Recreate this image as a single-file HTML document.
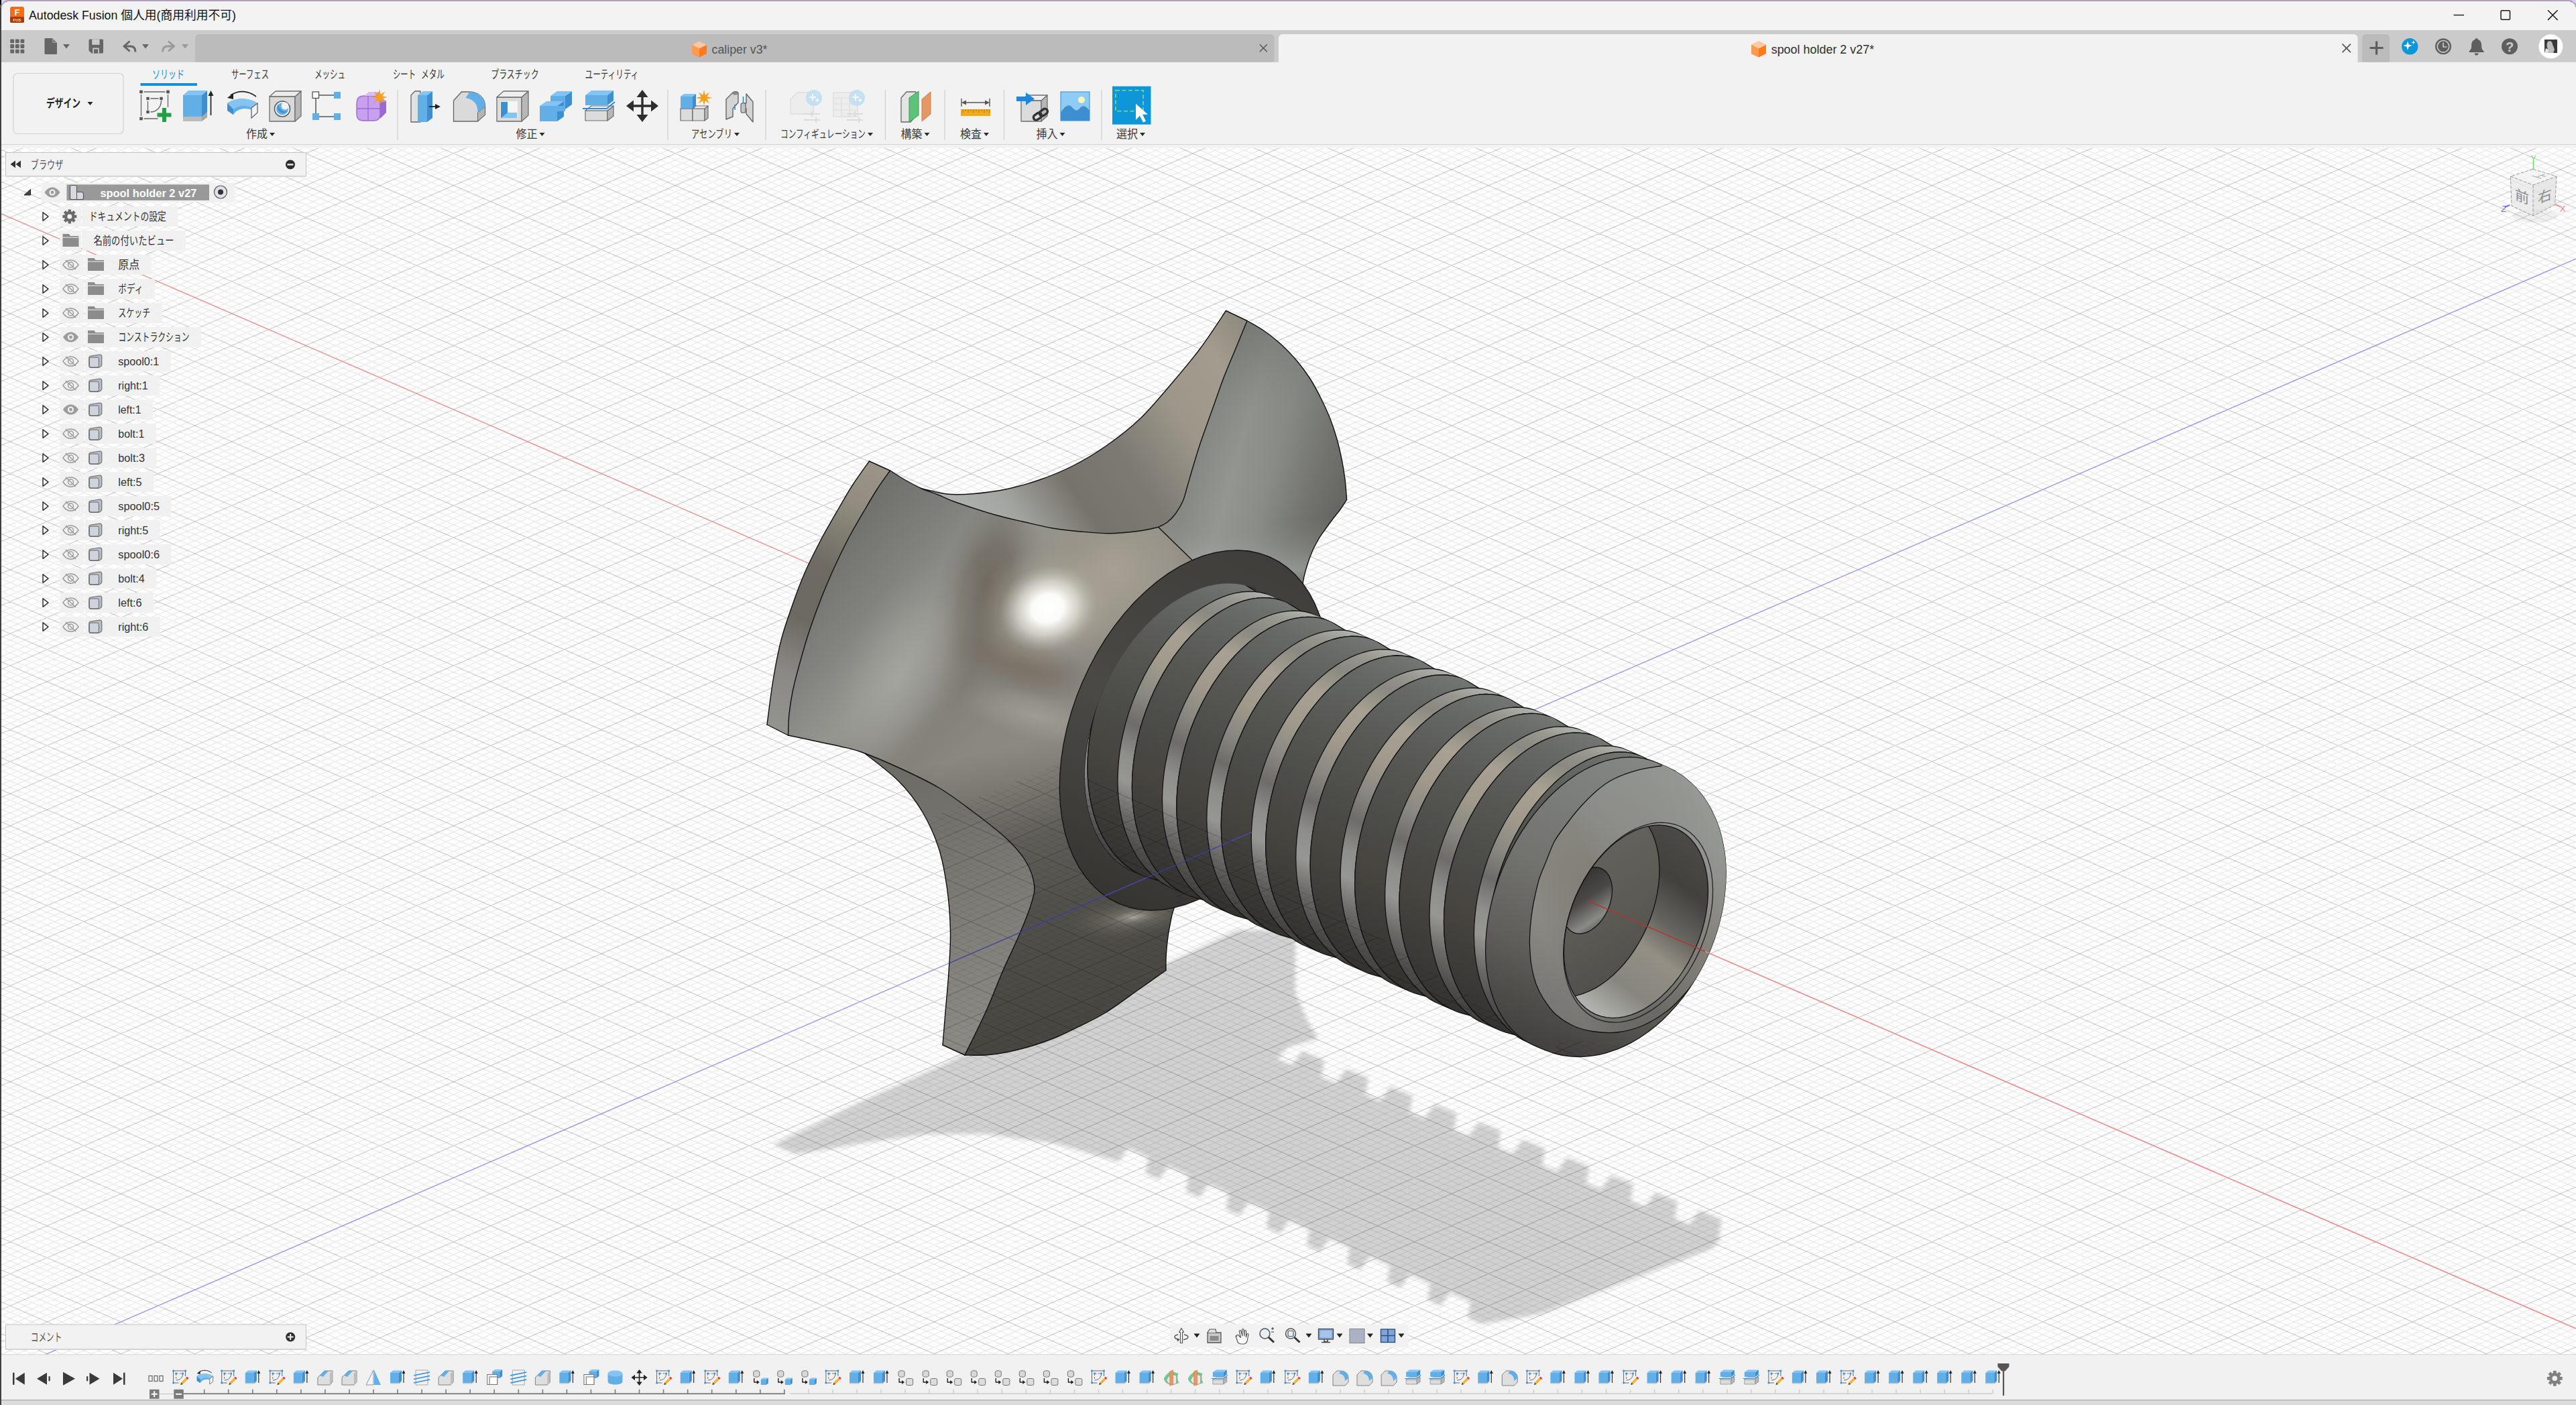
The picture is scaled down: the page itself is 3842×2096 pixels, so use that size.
<!DOCTYPE html><html><head><meta charset="utf-8"><title>Autodesk Fusion</title><style>html,body{margin:0;padding:0;background:#fff;overflow:hidden}svg{display:block}text{font-family:'Liberation Sans','Noto Sans CJK JP',sans-serif}</style></head><body>
<svg width="3842" height="2096" viewBox="0 0 3842 2096">
<clipPath id="cv"><rect x="0" y="220.5" width="3842" height="1800.5"/></clipPath>
<g clip-path="url(#cv)" fill="none">
<rect x="0.00" y="220.50" width="3842.00" height="1800.50" fill="#ffffff" />
<path d="M0 -1458.30L3842 205.70M0 -1439.20L3842 224.80M0 -1429.65L3842 234.35M0 -1420.10L3842 243.90M0 -1410.55L3842 253.45M0 -1391.45L3842 272.55M0 -1381.90L3842 282.10M0 -1372.35L3842 291.65M0 -1362.80L3842 301.20M0 -1343.70L3842 320.30M0 -1334.15L3842 329.85M0 -1324.60L3842 339.40M0 -1315.05L3842 348.95M0 -1295.95L3842 368.05M0 -1286.40L3842 377.60M0 -1276.85L3842 387.15M0 -1267.30L3842 396.70M0 -1248.20L3842 415.80M0 -1238.65L3842 425.35M0 -1229.10L3842 434.90M0 -1219.55L3842 444.45M0 -1200.45L3842 463.55M0 -1190.90L3842 473.10M0 -1181.35L3842 482.65M0 -1171.80L3842 492.20M0 -1152.70L3842 511.30M0 -1143.15L3842 520.85M0 -1133.60L3842 530.40M0 -1124.05L3842 539.95M0 -1104.95L3842 559.05M0 -1095.40L3842 568.60M0 -1085.85L3842 578.15M0 -1076.30L3842 587.70M0 -1057.20L3842 606.80M0 -1047.65L3842 616.35M0 -1038.10L3842 625.90M0 -1028.55L3842 635.45M0 -1009.45L3842 654.55M0 -999.90L3842 664.10M0 -990.35L3842 673.65M0 -980.80L3842 683.20M0 -961.70L3842 702.30M0 -952.15L3842 711.85M0 -942.60L3842 721.40M0 -933.05L3842 730.95M0 -913.95L3842 750.05M0 -904.40L3842 759.60M0 -894.85L3842 769.15M0 -885.30L3842 778.70M0 -866.20L3842 797.80M0 -856.65L3842 807.35M0 -847.10L3842 816.90M0 -837.55L3842 826.45M0 -818.45L3842 845.55M0 -808.90L3842 855.10M0 -799.35L3842 864.65M0 -789.80L3842 874.20M0 -770.70L3842 893.30M0 -761.15L3842 902.85M0 -751.60L3842 912.40M0 -742.05L3842 921.95M0 -722.95L3842 941.05M0 -713.40L3842 950.60M0 -703.85L3842 960.15M0 -694.30L3842 969.70M0 -675.20L3842 988.80M0 -665.65L3842 998.35M0 -656.10L3842 1007.90M0 -646.55L3842 1017.45M0 -627.45L3842 1036.55M0 -617.90L3842 1046.10M0 -608.35L3842 1055.65M0 -598.80L3842 1065.20M0 -579.70L3842 1084.30M0 -570.15L3842 1093.85M0 -560.60L3842 1103.40M0 -551.05L3842 1112.95M0 -531.95L3842 1132.05M0 -522.40L3842 1141.60M0 -512.85L3842 1151.15M0 -503.30L3842 1160.70M0 -484.20L3842 1179.80M0 -474.65L3842 1189.35M0 -465.10L3842 1198.90M0 -455.55L3842 1208.45M0 -436.45L3842 1227.55M0 -426.90L3842 1237.10M0 -417.35L3842 1246.65M0 -407.80L3842 1256.20M0 -388.70L3842 1275.30M0 -379.15L3842 1284.85M0 -369.60L3842 1294.40M0 -360.05L3842 1303.95M0 -340.95L3842 1323.05M0 -331.40L3842 1332.60M0 -321.85L3842 1342.15M0 -312.30L3842 1351.70M0 -293.20L3842 1370.80M0 -283.65L3842 1380.35M0 -274.10L3842 1389.90M0 -264.55L3842 1399.45M0 -245.45L3842 1418.55M0 -235.90L3842 1428.10M0 -226.35L3842 1437.65M0 -216.80L3842 1447.20M0 -197.70L3842 1466.30M0 -188.15L3842 1475.85M0 -178.60L3842 1485.40M0 -169.05L3842 1494.95M0 -149.95L3842 1514.05M0 -140.40L3842 1523.60M0 -130.85L3842 1533.15M0 -121.30L3842 1542.70M0 -102.20L3842 1561.80M0 -92.65L3842 1571.35M0 -83.10L3842 1580.90M0 -73.55L3842 1590.45M0 -54.45L3842 1609.55M0 -44.90L3842 1619.10M0 -35.35L3842 1628.65M0 -25.80L3842 1638.20M0 -6.70L3842 1657.30M0 2.85L3842 1666.85M0 12.40L3842 1676.40M0 21.95L3842 1685.95M0 41.05L3842 1705.05M0 50.60L3842 1714.60M0 60.15L3842 1724.15M0 69.70L3842 1733.70M0 88.80L3842 1752.80M0 98.35L3842 1762.35M0 107.90L3842 1771.90M0 117.45L3842 1781.45M0 136.55L3842 1800.55M0 146.10L3842 1810.10M0 155.65L3842 1819.65M0 165.20L3842 1829.20M0 184.30L3842 1848.30M0 193.85L3842 1857.85M0 203.40L3842 1867.40M0 212.95L3842 1876.95M0 232.05L3842 1896.05M0 241.60L3842 1905.60M0 251.15L3842 1915.15M0 260.70L3842 1924.70M0 279.80L3842 1943.80M0 289.35L3842 1953.35M0 298.90L3842 1962.90M0 308.45L3842 1972.45M0 327.55L3842 1991.55M0 337.10L3842 2001.10M0 346.65L3842 2010.65M0 356.20L3842 2020.20M0 375.30L3842 2039.30M0 384.85L3842 2048.85M0 394.40L3842 2058.40M0 403.95L3842 2067.95M0 423.05L3842 2087.05M0 432.60L3842 2096.60M0 442.15L3842 2106.15M0 451.70L3842 2115.70M0 470.80L3842 2134.80M0 480.35L3842 2144.35M0 489.90L3842 2153.90M0 499.45L3842 2163.45M0 518.55L3842 2182.55M0 528.10L3842 2192.10M0 537.65L3842 2201.65M0 547.20L3842 2211.20M0 566.30L3842 2230.30M0 575.85L3842 2239.85M0 585.40L3842 2249.40M0 594.95L3842 2258.95M0 614.05L3842 2278.05M0 623.60L3842 2287.60M0 633.15L3842 2297.15M0 642.70L3842 2306.70M0 661.80L3842 2325.80M0 671.35L3842 2335.35M0 680.90L3842 2344.90M0 690.45L3842 2354.45M0 709.55L3842 2373.55M0 719.10L3842 2383.10M0 728.65L3842 2392.65M0 738.20L3842 2402.20M0 757.30L3842 2421.30M0 766.85L3842 2430.85M0 776.40L3842 2440.40M0 785.95L3842 2449.95M0 805.05L3842 2469.05M0 814.60L3842 2478.60M0 824.15L3842 2488.15M0 833.70L3842 2497.70M0 852.80L3842 2516.80M0 862.35L3842 2526.35M0 871.90L3842 2535.90M0 881.45L3842 2545.45M0 900.55L3842 2564.55M0 910.10L3842 2574.10M0 919.65L3842 2583.65M0 929.20L3842 2593.20M0 948.30L3842 2612.30M0 957.85L3842 2621.85M0 967.40L3842 2631.40M0 976.95L3842 2640.95M0 996.05L3842 2660.05M0 1005.60L3842 2669.60M0 1015.15L3842 2679.15M0 1024.70L3842 2688.70M0 1043.80L3842 2707.80M0 1053.35L3842 2717.35M0 1062.90L3842 2726.90M0 1072.45L3842 2736.45M0 1091.55L3842 2755.55M0 1101.10L3842 2765.10M0 1110.65L3842 2774.65M0 1120.20L3842 2784.20M0 1139.30L3842 2803.30M0 1148.85L3842 2812.85M0 1158.40L3842 2822.40M0 1167.95L3842 2831.95M0 1187.05L3842 2851.05M0 1196.60L3842 2860.60M0 1206.15L3842 2870.15M0 1215.70L3842 2879.70M0 1234.80L3842 2898.80M0 1244.35L3842 2908.35M0 1253.90L3842 2917.90M0 1263.45L3842 2927.45M0 1282.55L3842 2946.55M0 1292.10L3842 2956.10M0 1301.65L3842 2965.65M0 1311.20L3842 2975.20M0 1330.30L3842 2994.30M0 1339.85L3842 3003.85M0 1349.40L3842 3013.40M0 1358.95L3842 3022.95M0 1378.05L3842 3042.05M0 1387.60L3842 3051.60M0 1397.15L3842 3061.15M0 1406.70L3842 3070.70M0 1425.80L3842 3089.80M0 1435.35L3842 3099.35M0 1444.90L3842 3108.90M0 1454.45L3842 3118.45M0 1473.55L3842 3137.55M0 1483.10L3842 3147.10M0 1492.65L3842 3156.65M0 1502.20L3842 3166.20M0 1521.30L3842 3185.30M0 1530.85L3842 3194.85M0 1540.40L3842 3204.40M0 1549.95L3842 3213.95M0 1569.05L3842 3233.05M0 1578.60L3842 3242.60M0 1588.15L3842 3252.15M0 1597.70L3842 3261.70M0 1616.80L3842 3280.80M0 1626.35L3842 3290.35M0 1635.90L3842 3299.90M0 1645.45L3842 3309.45M0 1664.55L3842 3328.55M0 1674.10L3842 3338.10M0 1683.65L3842 3347.65M0 1693.20L3842 3357.20M0 1712.30L3842 3376.30M0 1721.85L3842 3385.85M0 1731.40L3842 3395.40M0 1740.95L3842 3404.95M0 1760.05L3842 3424.05M0 1769.60L3842 3433.60M0 1779.15L3842 3443.15M0 1788.70L3842 3452.70M0 1807.80L3842 3471.80M0 1817.35L3842 3481.35M0 1826.90L3842 3490.90M0 1836.45L3842 3500.45M0 1855.55L3842 3519.55M0 1865.10L3842 3529.10M0 1874.65L3842 3538.65M0 1884.20L3842 3548.20M0 1903.30L3842 3567.30M0 1912.85L3842 3576.85M0 1922.40L3842 3586.40M0 1931.95L3842 3595.95M0 1951.05L3842 3615.05M0 1960.60L3842 3624.60M0 1970.15L3842 3634.15M0 1979.70L3842 3643.70M0 1998.80L3842 3662.80M0 2008.35L3842 3672.35M0 2017.90L3842 3681.90M0 2027.45L3842 3691.45M0 206.85L3842 -1457.15M0 216.40L3842 -1447.60M0 225.95L3842 -1438.05M0 245.05L3842 -1418.95M0 254.60L3842 -1409.40M0 264.15L3842 -1399.85M0 273.70L3842 -1390.30M0 292.80L3842 -1371.20M0 302.35L3842 -1361.65M0 311.90L3842 -1352.10M0 321.45L3842 -1342.55M0 340.55L3842 -1323.45M0 350.10L3842 -1313.90M0 359.65L3842 -1304.35M0 369.20L3842 -1294.80M0 388.30L3842 -1275.70M0 397.85L3842 -1266.15M0 407.40L3842 -1256.60M0 416.95L3842 -1247.05M0 436.05L3842 -1227.95M0 445.60L3842 -1218.40M0 455.15L3842 -1208.85M0 464.70L3842 -1199.30M0 483.80L3842 -1180.20M0 493.35L3842 -1170.65M0 502.90L3842 -1161.10M0 512.45L3842 -1151.55M0 531.55L3842 -1132.45M0 541.10L3842 -1122.90M0 550.65L3842 -1113.35M0 560.20L3842 -1103.80M0 579.30L3842 -1084.70M0 588.85L3842 -1075.15M0 598.40L3842 -1065.60M0 607.95L3842 -1056.05M0 627.05L3842 -1036.95M0 636.60L3842 -1027.40M0 646.15L3842 -1017.85M0 655.70L3842 -1008.30M0 674.80L3842 -989.20M0 684.35L3842 -979.65M0 693.90L3842 -970.10M0 703.45L3842 -960.55M0 722.55L3842 -941.45M0 732.10L3842 -931.90M0 741.65L3842 -922.35M0 751.20L3842 -912.80M0 770.30L3842 -893.70M0 779.85L3842 -884.15M0 789.40L3842 -874.60M0 798.95L3842 -865.05M0 818.05L3842 -845.95M0 827.60L3842 -836.40M0 837.15L3842 -826.85M0 846.70L3842 -817.30M0 865.80L3842 -798.20M0 875.35L3842 -788.65M0 884.90L3842 -779.10M0 894.45L3842 -769.55M0 913.55L3842 -750.45M0 923.10L3842 -740.90M0 932.65L3842 -731.35M0 942.20L3842 -721.80M0 961.30L3842 -702.70M0 970.85L3842 -693.15M0 980.40L3842 -683.60M0 989.95L3842 -674.05M0 1009.05L3842 -654.95M0 1018.60L3842 -645.40M0 1028.15L3842 -635.85M0 1037.70L3842 -626.30M0 1056.80L3842 -607.20M0 1066.35L3842 -597.65M0 1075.90L3842 -588.10M0 1085.45L3842 -578.55M0 1104.55L3842 -559.45M0 1114.10L3842 -549.90M0 1123.65L3842 -540.35M0 1133.20L3842 -530.80M0 1152.30L3842 -511.70M0 1161.85L3842 -502.15M0 1171.40L3842 -492.60M0 1180.95L3842 -483.05M0 1200.05L3842 -463.95M0 1209.60L3842 -454.40M0 1219.15L3842 -444.85M0 1228.70L3842 -435.30M0 1247.80L3842 -416.20M0 1257.35L3842 -406.65M0 1266.90L3842 -397.10M0 1276.45L3842 -387.55M0 1295.55L3842 -368.45M0 1305.10L3842 -358.90M0 1314.65L3842 -349.35M0 1324.20L3842 -339.80M0 1343.30L3842 -320.70M0 1352.85L3842 -311.15M0 1362.40L3842 -301.60M0 1371.95L3842 -292.05M0 1391.05L3842 -272.95M0 1400.60L3842 -263.40M0 1410.15L3842 -253.85M0 1419.70L3842 -244.30M0 1438.80L3842 -225.20M0 1448.35L3842 -215.65M0 1457.90L3842 -206.10M0 1467.45L3842 -196.55M0 1486.55L3842 -177.45M0 1496.10L3842 -167.90M0 1505.65L3842 -158.35M0 1515.20L3842 -148.80M0 1534.30L3842 -129.70M0 1543.85L3842 -120.15M0 1553.40L3842 -110.60M0 1562.95L3842 -101.05M0 1582.05L3842 -81.95M0 1591.60L3842 -72.40M0 1601.15L3842 -62.85M0 1610.70L3842 -53.30M0 1629.80L3842 -34.20M0 1639.35L3842 -24.65M0 1648.90L3842 -15.10M0 1658.45L3842 -5.55M0 1677.55L3842 13.55M0 1687.10L3842 23.10M0 1696.65L3842 32.65M0 1706.20L3842 42.20M0 1725.30L3842 61.30M0 1734.85L3842 70.85M0 1744.40L3842 80.40M0 1753.95L3842 89.95M0 1773.05L3842 109.05M0 1782.60L3842 118.60M0 1792.15L3842 128.15M0 1801.70L3842 137.70M0 1820.80L3842 156.80M0 1830.35L3842 166.35M0 1839.90L3842 175.90M0 1849.45L3842 185.45M0 1868.55L3842 204.55M0 1878.10L3842 214.10M0 1887.65L3842 223.65M0 1897.20L3842 233.20M0 1916.30L3842 252.30M0 1925.85L3842 261.85M0 1935.40L3842 271.40M0 1944.95L3842 280.95M0 1964.05L3842 300.05M0 1973.60L3842 309.60M0 1983.15L3842 319.15M0 1992.70L3842 328.70M0 2011.80L3842 347.80M0 2021.35L3842 357.35M0 2030.90L3842 366.90M0 2040.45L3842 376.45M0 2059.55L3842 395.55M0 2069.10L3842 405.10M0 2078.65L3842 414.65M0 2088.20L3842 424.20M0 2107.30L3842 443.30M0 2116.85L3842 452.85M0 2126.40L3842 462.40M0 2135.95L3842 471.95M0 2155.05L3842 491.05M0 2164.60L3842 500.60M0 2174.15L3842 510.15M0 2183.70L3842 519.70M0 2202.80L3842 538.80M0 2212.35L3842 548.35M0 2221.90L3842 557.90M0 2231.45L3842 567.45M0 2250.55L3842 586.55M0 2260.10L3842 596.10M0 2269.65L3842 605.65M0 2279.20L3842 615.20M0 2298.30L3842 634.30M0 2307.85L3842 643.85M0 2317.40L3842 653.40M0 2326.95L3842 662.95M0 2346.05L3842 682.05M0 2355.60L3842 691.60M0 2365.15L3842 701.15M0 2374.70L3842 710.70M0 2393.80L3842 729.80M0 2403.35L3842 739.35M0 2412.90L3842 748.90M0 2422.45L3842 758.45M0 2441.55L3842 777.55M0 2451.10L3842 787.10M0 2460.65L3842 796.65M0 2470.20L3842 806.20M0 2489.30L3842 825.30M0 2498.85L3842 834.85M0 2508.40L3842 844.40M0 2517.95L3842 853.95M0 2537.05L3842 873.05M0 2546.60L3842 882.60M0 2556.15L3842 892.15M0 2565.70L3842 901.70M0 2584.80L3842 920.80M0 2594.35L3842 930.35M0 2603.90L3842 939.90M0 2613.45L3842 949.45M0 2632.55L3842 968.55M0 2642.10L3842 978.10M0 2651.65L3842 987.65M0 2661.20L3842 997.20M0 2680.30L3842 1016.30M0 2689.85L3842 1025.85M0 2699.40L3842 1035.40M0 2708.95L3842 1044.95M0 2728.05L3842 1064.05M0 2737.60L3842 1073.60M0 2747.15L3842 1083.15M0 2756.70L3842 1092.70M0 2775.80L3842 1111.80M0 2785.35L3842 1121.35M0 2794.90L3842 1130.90M0 2804.45L3842 1140.45M0 2823.55L3842 1159.55M0 2833.10L3842 1169.10M0 2842.65L3842 1178.65M0 2852.20L3842 1188.20M0 2871.30L3842 1207.30M0 2880.85L3842 1216.85M0 2890.40L3842 1226.40M0 2899.95L3842 1235.95M0 2919.05L3842 1255.05M0 2928.60L3842 1264.60M0 2938.15L3842 1274.15M0 2947.70L3842 1283.70M0 2966.80L3842 1302.80M0 2976.35L3842 1312.35M0 2985.90L3842 1321.90M0 2995.45L3842 1331.45M0 3014.55L3842 1350.55M0 3024.10L3842 1360.10M0 3033.65L3842 1369.65M0 3043.20L3842 1379.20M0 3062.30L3842 1398.30M0 3071.85L3842 1407.85M0 3081.40L3842 1417.40M0 3090.95L3842 1426.95M0 3110.05L3842 1446.05M0 3119.60L3842 1455.60M0 3129.15L3842 1465.15M0 3138.70L3842 1474.70M0 3157.80L3842 1493.80M0 3167.35L3842 1503.35M0 3176.90L3842 1512.90M0 3186.45L3842 1522.45M0 3205.55L3842 1541.55M0 3215.10L3842 1551.10M0 3224.65L3842 1560.65M0 3234.20L3842 1570.20M0 3253.30L3842 1589.30M0 3262.85L3842 1598.85M0 3272.40L3842 1608.40M0 3281.95L3842 1617.95M0 3301.05L3842 1637.05M0 3310.60L3842 1646.60M0 3320.15L3842 1656.15M0 3329.70L3842 1665.70M0 3348.80L3842 1684.80M0 3358.35L3842 1694.35M0 3367.90L3842 1703.90M0 3377.45L3842 1713.45M0 3396.55L3842 1732.55M0 3406.10L3842 1742.10M0 3415.65L3842 1751.65M0 3425.20L3842 1761.20M0 3444.30L3842 1780.30M0 3453.85L3842 1789.85M0 3463.40L3842 1799.40M0 3472.95L3842 1808.95M0 3492.05L3842 1828.05M0 3501.60L3842 1837.60M0 3511.15L3842 1847.15M0 3520.70L3842 1856.70M0 3539.80L3842 1875.80M0 3549.35L3842 1885.35M0 3558.90L3842 1894.90M0 3568.45L3842 1904.45M0 3587.55L3842 1923.55M0 3597.10L3842 1933.10M0 3606.65L3842 1942.65M0 3616.20L3842 1952.20M0 3635.30L3842 1971.30M0 3644.85L3842 1980.85M0 3654.40L3842 1990.40M0 3663.95L3842 1999.95M0 3683.05L3842 2019.05M0 3692.60L3842 2028.60M0 3702.15L3842 2038.15" stroke="#000" stroke-opacity=".095" stroke-width="1.1"/>
<path d="M0 -1448.75L3842 215.25M0 -1401.00L3842 263.00M0 -1353.25L3842 310.75M0 -1305.50L3842 358.50M0 -1257.75L3842 406.25M0 -1210.00L3842 454.00M0 -1162.25L3842 501.75M0 -1114.50L3842 549.50M0 -1066.75L3842 597.25M0 -1019.00L3842 645.00M0 -971.25L3842 692.75M0 -923.50L3842 740.50M0 -875.75L3842 788.25M0 -828.00L3842 836.00M0 -780.25L3842 883.75M0 -732.50L3842 931.50M0 -684.75L3842 979.25M0 -637.00L3842 1027.00M0 -589.25L3842 1074.75M0 -541.50L3842 1122.50M0 -493.75L3842 1170.25M0 -446.00L3842 1218.00M0 -398.25L3842 1265.75M0 -350.50L3842 1313.50M0 -302.75L3842 1361.25M0 -255.00L3842 1409.00M0 -207.25L3842 1456.75M0 -159.50L3842 1504.50M0 -111.75L3842 1552.25M0 -64.00L3842 1600.00M0 -16.25L3842 1647.75M0 31.50L3842 1695.50M0 79.25L3842 1743.25M0 127.00L3842 1791.00M0 174.75L3842 1838.75M0 222.50L3842 1886.50M0 270.25L3842 1934.25M0 318.00L3842 1982.00M0 365.75L3842 2029.75M0 413.50L3842 2077.50M0 461.25L3842 2125.25M0 509.00L3842 2173.00M0 556.75L3842 2220.75M0 604.50L3842 2268.50M0 652.25L3842 2316.25M0 700.00L3842 2364.00M0 747.75L3842 2411.75M0 795.50L3842 2459.50M0 843.25L3842 2507.25M0 891.00L3842 2555.00M0 938.75L3842 2602.75M0 986.50L3842 2650.50M0 1034.25L3842 2698.25M0 1082.00L3842 2746.00M0 1129.75L3842 2793.75M0 1177.50L3842 2841.50M0 1225.25L3842 2889.25M0 1273.00L3842 2937.00M0 1320.75L3842 2984.75M0 1368.50L3842 3032.50M0 1416.25L3842 3080.25M0 1464.00L3842 3128.00M0 1511.75L3842 3175.75M0 1559.50L3842 3223.50M0 1607.25L3842 3271.25M0 1655.00L3842 3319.00M0 1702.75L3842 3366.75M0 1750.50L3842 3414.50M0 1798.25L3842 3462.25M0 1846.00L3842 3510.00M0 1893.75L3842 3557.75M0 1941.50L3842 3605.50M0 1989.25L3842 3653.25M0 2037.00L3842 3701.00M0 235.50L3842 -1428.50M0 283.25L3842 -1380.75M0 331.00L3842 -1333.00M0 378.75L3842 -1285.25M0 426.50L3842 -1237.50M0 474.25L3842 -1189.75M0 522.00L3842 -1142.00M0 569.75L3842 -1094.25M0 617.50L3842 -1046.50M0 665.25L3842 -998.75M0 713.00L3842 -951.00M0 760.75L3842 -903.25M0 808.50L3842 -855.50M0 856.25L3842 -807.75M0 904.00L3842 -760.00M0 951.75L3842 -712.25M0 999.50L3842 -664.50M0 1047.25L3842 -616.75M0 1095.00L3842 -569.00M0 1142.75L3842 -521.25M0 1190.50L3842 -473.50M0 1238.25L3842 -425.75M0 1286.00L3842 -378.00M0 1333.75L3842 -330.25M0 1381.50L3842 -282.50M0 1429.25L3842 -234.75M0 1477.00L3842 -187.00M0 1524.75L3842 -139.25M0 1572.50L3842 -91.50M0 1620.25L3842 -43.75M0 1668.00L3842 4.00M0 1715.75L3842 51.75M0 1763.50L3842 99.50M0 1811.25L3842 147.25M0 1859.00L3842 195.00M0 1906.75L3842 242.75M0 1954.50L3842 290.50M0 2002.25L3842 338.25M0 2050.00L3842 386.00M0 2097.75L3842 433.75M0 2145.50L3842 481.50M0 2193.25L3842 529.25M0 2241.00L3842 577.00M0 2288.75L3842 624.75M0 2336.50L3842 672.50M0 2384.25L3842 720.25M0 2432.00L3842 768.00M0 2479.75L3842 815.75M0 2527.50L3842 863.50M0 2575.25L3842 911.25M0 2623.00L3842 959.00M0 2670.75L3842 1006.75M0 2718.50L3842 1054.50M0 2766.25L3842 1102.25M0 2814.00L3842 1150.00M0 2861.75L3842 1197.75M0 2909.50L3842 1245.50M0 2957.25L3842 1293.25M0 3005.00L3842 1341.00M0 3052.75L3842 1388.75M0 3100.50L3842 1436.50M0 3148.25L3842 1484.25M0 3196.00L3842 1532.00M0 3243.75L3842 1579.75M0 3291.50L3842 1627.50M0 3339.25L3842 1675.25M0 3387.00L3842 1723.00M0 3434.75L3842 1770.75M0 3482.50L3842 1818.50M0 3530.25L3842 1866.25M0 3578.00L3842 1914.00M0 3625.75L3842 1961.75M0 3673.50L3842 2009.50" stroke="#000" stroke-opacity=".21" stroke-width="1.1"/>
</g>
<g clip-path="url(#cv)">
<defs>
</defs>
<filter id="shb" x="-5%" y="-5%" width="110%" height="110%"><feGaussianBlur stdDeviation="3.400"/></filter>
<path d="M1152.8 1707.5L1286.3 1642.2L1410.6 1586.3L1534.8 1524.2L1739.8 1437.3L1845.3 1387.6L1932.3 1387.6L1932.3 1480.7L1950.9 1524.2L1966.5 1549.1L1919.9 1562.7L1905.0 1580.1L1927.4 1589.1L1941.8 1568.1L1975.4 1581.6L1970.8 1606.5L1993.2 1615.5L2007.7 1594.5L2041.2 1608.0L2036.6 1632.9L2059.0 1641.9L2073.5 1620.9L2107.1 1634.4L2102.5 1659.3L2124.9 1668.3L2139.3 1647.3L2172.9 1660.8L2168.3 1685.7L2190.7 1694.7L2205.2 1673.7L2238.7 1687.2L2234.2 1712.1L2256.5 1721.1L2271.0 1700.1L2304.6 1713.6L2300.0 1738.5L2322.4 1747.5L2336.8 1726.5L2370.4 1740.0L2365.8 1764.9L2388.2 1773.9L2402.7 1752.9L2436.3 1766.4L2431.7 1791.3L2454.1 1800.3L2468.5 1779.3L2502.1 1792.7L2497.5 1817.7L2519.9 1826.7L2534.4 1805.7L2567.9 1819.1L2563.4 1844.1L2567.1 1847.2L2553.4 1862.7L2298.8 1960.2L2209.3 1975.2L2188.9 1966.0L2193.1 1942.1L2162.4 1928.4L2149.3 1948.2L2128.9 1939.1L2133.0 1915.2L2102.4 1901.5L2089.2 1921.3L2068.8 1912.2L2073.0 1888.3L2042.4 1874.6L2029.2 1894.4L2008.8 1885.3L2012.9 1861.4L1982.3 1847.7L1969.2 1867.5L1948.7 1858.3L1952.9 1834.5L1922.3 1820.7L1909.1 1840.6L1888.7 1831.4L1892.9 1807.6L1862.2 1793.8L1849.1 1813.7L1828.7 1804.5L1832.8 1780.6L1802.2 1766.9L1789.0 1786.7L1768.6 1777.6L1772.8 1753.7L1742.2 1740.0L1729.0 1759.8L1708.6 1750.7L1712.7 1726.8L1682.1 1713.1L1668.9 1732.9L1572.0 1705.6L1472.7 1691.9L1379.5 1691.9L1286.3 1705.6L1187.0 1721.7Z" fill="#000" fill-opacity=".18" filter="url(#shb)"/>
<path d="M0 318.0L3842 1982.0" stroke="#f28c8c" stroke-width="1.200"/>
<path d="M0 2050.0L3842 386.0" stroke="#9494f4" stroke-width="1.200"/>
<defs>
<linearGradient id="kA" gradientUnits="userSpaceOnUse" x1="1845.0" y1="470.0" x2="1420.0" y2="760.0"><stop offset="0" stop-color="#8f8b80"/><stop offset="0.12" stop-color="#a39c8e"/><stop offset="0.3" stop-color="#9d978a"/><stop offset="0.5" stop-color="#7d7a73"/><stop offset="0.68" stop-color="#76736c"/><stop offset="0.85" stop-color="#a2a49f"/><stop offset="1" stop-color="#b0b3ae"/></linearGradient>
<linearGradient id="kB" gradientUnits="userSpaceOnUse" x1="1800.0" y1="640.0" x2="2010.0" y2="700.0"><stop offset="0" stop-color="#878985"/><stop offset="0.25" stop-color="#949692"/><stop offset="0.5" stop-color="#8a8c88"/><stop offset="0.8" stop-color="#72736f"/><stop offset="1" stop-color="#666763"/></linearGradient>
<linearGradient id="kB2" gradientUnits="userSpaceOnUse" x1="1880.0" y1="480.0" x2="1880.0" y2="900.0"><stop offset="0" stop-color="#6e706c" stop-opacity="0.7"/><stop offset="0.3" stop-color="#7a7c78" stop-opacity="0.2"/><stop offset="0.7" stop-color="#8a8c88" stop-opacity="0"/><stop offset="0.88" stop-color="#b0b3ae" stop-opacity="0.55"/><stop offset="1" stop-color="#55534f" stop-opacity="0.6"/></linearGradient>
<linearGradient id="kC" gradientUnits="userSpaceOnUse" x1="1312.0" y1="695.0" x2="1160.0" y2="1090.0"><stop offset="0" stop-color="#9a9588"/><stop offset="0.15" stop-color="#928d80"/><stop offset="0.4" stop-color="#6f6b63"/><stop offset="0.6" stop-color="#6c6962"/><stop offset="0.8" stop-color="#8a8985"/><stop offset="1" stop-color="#94948f"/></linearGradient>
<linearGradient id="kD" gradientUnits="userSpaceOnUse" x1="1330.0" y1="700.0" x2="1760.0" y2="1100.0"><stop offset="0" stop-color="#6f706c"/><stop offset="0.2" stop-color="#82837f"/><stop offset="0.35" stop-color="#969691"/><stop offset="0.5" stop-color="#827f78"/><stop offset="0.62" stop-color="#8a8780"/><stop offset="0.8" stop-color="#8e8b84"/><stop offset="1" stop-color="#86847e"/></linearGradient>
<linearGradient id="kLow" gradientUnits="userSpaceOnUse" x1="1480.0" y1="1060.0" x2="1590.0" y2="1520.0"><stop offset="0" stop-color="#5a5853" stop-opacity="0"/><stop offset="0.12" stop-color="#5a5853" stop-opacity="0"/><stop offset="0.42" stop-color="#55534e" stop-opacity="0.8"/><stop offset="0.65" stop-color="#4e4c47" stop-opacity="0.93"/><stop offset="1" stop-color="#474540" stop-opacity="0.97"/></linearGradient>
<linearGradient id="kE" gradientUnits="userSpaceOnUse" x1="1300.0" y1="1130.0" x2="1420.0" y2="1560.0"><stop offset="0" stop-color="#6a6963"/><stop offset="0.5" stop-color="#7b7a74"/><stop offset="1" stop-color="#8b8a85"/></linearGradient>
<radialGradient id="kH" gradientUnits="userSpaceOnUse" cx="1562.0" cy="908.0" r="110.0" gradientTransform="rotate(-20 1562 906) scale(1 .85) translate(0 160)"><stop offset="0" stop-color="#ffffff" stop-opacity="1"/><stop offset="0.22" stop-color="#fbfbf8" stop-opacity="1"/><stop offset="0.42" stop-color="#e8e6de" stop-opacity="0.72"/><stop offset="0.68" stop-color="#b5b0a2" stop-opacity="0.28"/><stop offset="1" stop-color="#a09a8c" stop-opacity="0"/></radialGradient>
<radialGradient id="kG1" gradientUnits="userSpaceOnUse" cx="1340.0" cy="1010.0" r="210.0" gradientTransform="rotate(-60 1340 1010) scale(1 .45) translate(0 1234)"><stop offset="0" stop-color="#a6a6a0" stop-opacity="0.95"/><stop offset="0.5" stop-color="#9c9c96" stop-opacity="0.6"/><stop offset="1" stop-color="#8a8a84" stop-opacity="0"/></radialGradient>
<radialGradient id="kG2" gradientUnits="userSpaceOnUse" cx="1468.0" cy="885.0" r="175.0" gradientTransform="rotate(-72 1468 885) scale(1 .42) translate(0 1222)"><stop offset="0" stop-color="#6e685d" stop-opacity="0.97"/><stop offset="0.45" stop-color="#726c62" stop-opacity="0.8"/><stop offset="1" stop-color="#7a7770" stop-opacity="0"/></radialGradient>
<radialGradient id="kG5" gradientUnits="userSpaceOnUse" cx="1525.0" cy="992.0" r="120.0" gradientTransform="rotate(18 1525 992) scale(1 .4) translate(0 1488)"><stop offset="0" stop-color="#746d61" stop-opacity="0.85"/><stop offset="0.5" stop-color="#776f64" stop-opacity="0.55"/><stop offset="1" stop-color="#7a7770" stop-opacity="0"/></radialGradient>
<radialGradient id="kG6" gradientUnits="userSpaceOnUse" cx="1545.0" cy="1068.0" r="115.0" gradientTransform="rotate(14 1545 1068) scale(1 .32) translate(0 2269.500)"><stop offset="0" stop-color="#a6a49e" stop-opacity="0.7"/><stop offset="0.5" stop-color="#a09e98" stop-opacity="0.4"/><stop offset="1" stop-color="#98968f" stop-opacity="0"/></radialGradient>
<radialGradient id="kG3" gradientUnits="userSpaceOnUse" cx="1660.0" cy="850.0" r="150.0" ><stop offset="0" stop-color="#aaa496" stop-opacity="0.9"/><stop offset="0.6" stop-color="#a59f91" stop-opacity="0.5"/><stop offset="1" stop-color="#989286" stop-opacity="0"/></radialGradient>
<radialGradient id="kG4" gradientUnits="userSpaceOnUse" cx="1690.0" cy="1368.0" r="110.0" gradientTransform="rotate(-8 1690 1368) scale(1 .3) translate(0 3192)"><stop offset="0" stop-color="#c8c6b8" stop-opacity="0.75"/><stop offset="0.3" stop-color="#8a887c" stop-opacity="0.45"/><stop offset="1" stop-color="#55534e" stop-opacity="0"/></radialGradient>
<clipPath id="kclip"><path d="M1828.5 463.5L1860.0 478.5C1864.3 481.1 1877.5 488.1 1886.0 494.0C1894.5 499.9 1903.0 506.7 1911.0 514.0C1919.0 521.3 1926.8 529.5 1934.0 538.0C1941.2 546.5 1948.0 555.7 1954.0 565.0C1960.0 574.3 1965.0 584.0 1970.0 594.0C1975.0 604.0 1980.0 614.8 1984.0 625.0C1988.0 635.2 1991.2 645.0 1994.0 655.0C1996.8 665.0 1999.0 674.7 2001.0 684.7C2003.0 694.7 2004.7 704.9 2006.0 715.0C2007.3 725.1 2008.2 740.3 2008.6 745.4C2007.0 747.8 2002.4 755.2 1999.0 760.0C1995.6 764.8 1991.7 769.2 1988.0 774.0C1984.3 778.8 1980.5 784.0 1977.0 789.0C1973.5 794.0 1970.1 798.3 1966.8 804.0C1963.5 809.7 1959.8 816.5 1957.0 823.0C1954.2 829.5 1951.7 836.5 1949.7 842.7C1947.7 848.9 1946.1 855.0 1945.0 860.0C1943.9 865.0 1943.2 868.0 1943.0 873.0C1942.8 878.0 1943.8 887.2 1944.0 890.0L1800.0 1100.0L1752.5 1350.0C1751.8 1352.5 1749.2 1360.0 1748.0 1365.0C1746.8 1370.0 1746.0 1374.7 1745.0 1380.0C1744.0 1385.3 1742.8 1391.2 1742.0 1397.0C1741.2 1402.8 1740.5 1409.5 1740.0 1415.0C1739.5 1420.5 1739.2 1424.6 1739.0 1430.0C1738.8 1435.4 1739.0 1444.6 1739.0 1447.5C1732.5 1452.1 1714.8 1464.6 1700.0 1475.0C1685.2 1485.4 1664.7 1500.8 1650.0 1510.0C1635.3 1519.2 1624.5 1523.8 1612.0 1530.0C1599.5 1536.2 1587.0 1542.5 1575.0 1547.5C1563.0 1552.5 1552.5 1556.2 1540.0 1560.0C1527.5 1563.8 1511.7 1567.7 1500.0 1570.0C1488.3 1572.3 1480.2 1573.3 1470.0 1574.0C1459.8 1574.7 1444.2 1574.0 1439.0 1574.0L1406.0 1559.0C1406.7 1550.8 1408.5 1528.2 1410.0 1510.0C1411.5 1491.8 1413.8 1470.0 1415.0 1450.0C1416.2 1430.0 1417.9 1410.8 1417.5 1390.0C1417.1 1369.2 1415.4 1345.8 1412.5 1325.0C1409.6 1304.2 1406.2 1284.2 1400.0 1265.0C1393.8 1245.8 1385.0 1226.7 1375.0 1210.0C1365.0 1193.3 1354.2 1179.3 1340.0 1165.0C1325.8 1150.7 1298.3 1130.8 1290.0 1124.0L1285.0 1122.0C1280.0 1120.7 1265.0 1116.4 1255.0 1114.0C1245.0 1111.6 1234.2 1109.5 1225.0 1107.5C1215.8 1105.5 1208.2 1103.8 1200.0 1102.0C1191.8 1100.2 1179.6 1097.8 1175.5 1097.0L1144.0 1081.0C1145.5 1070.0 1149.5 1036.0 1153.0 1015.0C1156.5 994.0 1160.3 973.3 1165.0 955.0C1169.7 936.7 1175.2 921.7 1181.0 905.0C1186.8 888.3 1192.8 871.5 1200.0 855.0C1207.2 838.5 1215.7 821.8 1224.0 806.0C1232.3 790.2 1242.0 773.8 1250.0 760.0C1258.0 746.2 1264.2 735.0 1272.0 723.0C1279.8 711.0 1292.4 693.8 1296.5 688.0L1327.5 702.0C1331.2 704.3 1342.1 711.5 1350.0 716.0C1357.9 720.5 1370.8 726.8 1375.0 729.0C1381.2 730.3 1400.0 735.7 1412.5 737.0C1425.0 738.3 1435.4 737.9 1450.0 736.7C1464.6 735.5 1483.3 733.5 1500.0 730.0C1516.7 726.5 1533.3 721.8 1550.0 716.0C1566.7 710.2 1583.3 703.5 1600.0 695.0C1616.7 686.5 1633.3 676.7 1650.0 665.0C1666.7 653.3 1684.2 640.0 1700.0 625.0C1715.8 610.0 1730.0 592.5 1745.0 575.0C1760.0 557.5 1776.1 538.6 1790.0 520.0C1803.9 501.4 1822.1 472.9 1828.5 463.5Z"/></clipPath>
</defs>
<path d="M1828.5 463.5L1860.0 478.5C1864.3 481.1 1877.5 488.1 1886.0 494.0C1894.5 499.9 1903.0 506.7 1911.0 514.0C1919.0 521.3 1926.8 529.5 1934.0 538.0C1941.2 546.5 1948.0 555.7 1954.0 565.0C1960.0 574.3 1965.0 584.0 1970.0 594.0C1975.0 604.0 1980.0 614.8 1984.0 625.0C1988.0 635.2 1991.2 645.0 1994.0 655.0C1996.8 665.0 1999.0 674.7 2001.0 684.7C2003.0 694.7 2004.7 704.9 2006.0 715.0C2007.3 725.1 2008.2 740.3 2008.6 745.4C2007.0 747.8 2002.4 755.2 1999.0 760.0C1995.6 764.8 1991.7 769.2 1988.0 774.0C1984.3 778.8 1980.5 784.0 1977.0 789.0C1973.5 794.0 1970.1 798.3 1966.8 804.0C1963.5 809.7 1959.8 816.5 1957.0 823.0C1954.2 829.5 1951.7 836.5 1949.7 842.7C1947.7 848.9 1946.1 855.0 1945.0 860.0C1943.9 865.0 1943.2 868.0 1943.0 873.0C1942.8 878.0 1943.8 887.2 1944.0 890.0L1800.0 1100.0L1752.5 1350.0C1751.8 1352.5 1749.2 1360.0 1748.0 1365.0C1746.8 1370.0 1746.0 1374.7 1745.0 1380.0C1744.0 1385.3 1742.8 1391.2 1742.0 1397.0C1741.2 1402.8 1740.5 1409.5 1740.0 1415.0C1739.5 1420.5 1739.2 1424.6 1739.0 1430.0C1738.8 1435.4 1739.0 1444.6 1739.0 1447.5C1732.5 1452.1 1714.8 1464.6 1700.0 1475.0C1685.2 1485.4 1664.7 1500.8 1650.0 1510.0C1635.3 1519.2 1624.5 1523.8 1612.0 1530.0C1599.5 1536.2 1587.0 1542.5 1575.0 1547.5C1563.0 1552.5 1552.5 1556.2 1540.0 1560.0C1527.5 1563.8 1511.7 1567.7 1500.0 1570.0C1488.3 1572.3 1480.2 1573.3 1470.0 1574.0C1459.8 1574.7 1444.2 1574.0 1439.0 1574.0L1406.0 1559.0C1406.7 1550.8 1408.5 1528.2 1410.0 1510.0C1411.5 1491.8 1413.8 1470.0 1415.0 1450.0C1416.2 1430.0 1417.9 1410.8 1417.5 1390.0C1417.1 1369.2 1415.4 1345.8 1412.5 1325.0C1409.6 1304.2 1406.2 1284.2 1400.0 1265.0C1393.8 1245.8 1385.0 1226.7 1375.0 1210.0C1365.0 1193.3 1354.2 1179.3 1340.0 1165.0C1325.8 1150.7 1298.3 1130.8 1290.0 1124.0L1285.0 1122.0C1280.0 1120.7 1265.0 1116.4 1255.0 1114.0C1245.0 1111.6 1234.2 1109.5 1225.0 1107.5C1215.8 1105.5 1208.2 1103.8 1200.0 1102.0C1191.8 1100.2 1179.6 1097.8 1175.5 1097.0L1144.0 1081.0C1145.5 1070.0 1149.5 1036.0 1153.0 1015.0C1156.5 994.0 1160.3 973.3 1165.0 955.0C1169.7 936.7 1175.2 921.7 1181.0 905.0C1186.8 888.3 1192.8 871.5 1200.0 855.0C1207.2 838.5 1215.7 821.8 1224.0 806.0C1232.3 790.2 1242.0 773.8 1250.0 760.0C1258.0 746.2 1264.2 735.0 1272.0 723.0C1279.8 711.0 1292.4 693.8 1296.5 688.0L1327.5 702.0C1331.2 704.3 1342.1 711.5 1350.0 716.0C1357.9 720.5 1370.8 726.8 1375.0 729.0C1381.2 730.3 1400.0 735.7 1412.5 737.0C1425.0 738.3 1435.4 737.9 1450.0 736.7C1464.6 735.5 1483.3 733.5 1500.0 730.0C1516.7 726.5 1533.3 721.8 1550.0 716.0C1566.7 710.2 1583.3 703.5 1600.0 695.0C1616.7 686.5 1633.3 676.7 1650.0 665.0C1666.7 653.3 1684.2 640.0 1700.0 625.0C1715.8 610.0 1730.0 592.5 1745.0 575.0C1760.0 557.5 1776.1 538.6 1790.0 520.0C1803.9 501.4 1822.1 472.9 1828.5 463.5Z" fill="url(#kD)"/>
<g clip-path="url(#kclip)">
<rect x="1100" y="400" width="950" height="1200" fill="url(#kG2)"/>
<rect x="1100" y="400" width="950" height="1200" fill="url(#kG1)"/>
<rect x="1100" y="400" width="950" height="1200" fill="url(#kG3)"/>
<rect x="1100" y="400" width="950" height="1200" fill="url(#kG5)"/>
<rect x="1100" y="400" width="950" height="1200" fill="url(#kG6)"/>
<rect x="1100" y="400" width="950" height="1200" fill="url(#kH)"/>
<rect x="1100" y="400" width="950" height="1250" fill="url(#kLow)"/>
<rect x="1500" y="1250" width="400" height="250" fill="url(#kG4)"/>
</g>
<path d="M1828.5 463.5C1822.1 472.9 1803.9 501.4 1790.0 520.0C1776.1 538.6 1760.0 557.5 1745.0 575.0C1730.0 592.5 1715.8 610.0 1700.0 625.0C1684.2 640.0 1666.7 653.3 1650.0 665.0C1633.3 676.7 1616.7 686.5 1600.0 695.0C1583.3 703.5 1566.7 710.2 1550.0 716.0C1533.3 721.8 1516.7 726.5 1500.0 730.0C1483.3 733.5 1464.6 735.5 1450.0 736.7C1435.4 737.9 1425.0 738.3 1412.5 737.0C1400.0 735.7 1381.2 730.3 1375.0 729.0C1379.0 730.5 1390.7 734.7 1399.0 738.0C1407.3 741.3 1410.8 744.0 1425.0 749.0C1439.2 754.0 1467.3 763.2 1484.0 768.0C1500.7 772.8 1510.7 774.7 1525.0 778.0C1539.3 781.3 1555.5 785.5 1570.0 788.0C1584.5 790.5 1597.8 791.7 1612.0 793.0C1626.2 794.3 1640.7 795.8 1655.0 795.7C1669.3 795.6 1685.9 793.8 1698.0 792.3C1710.1 790.8 1722.8 787.4 1727.7 786.4C1729.9 785.2 1737.0 782.1 1741.0 779.0C1745.0 775.9 1748.2 773.2 1752.0 768.0C1755.8 762.8 1760.8 755.2 1764.0 748.0C1767.2 740.8 1768.5 733.4 1771.0 725.0C1773.5 716.6 1776.0 707.5 1779.0 697.5C1782.0 687.5 1785.5 675.7 1789.0 665.0C1792.5 654.3 1796.2 644.3 1800.0 633.5C1803.8 622.7 1807.7 612.1 1812.0 600.0C1816.3 587.9 1820.8 574.3 1826.0 561.0C1831.2 547.7 1837.3 533.8 1843.0 520.0C1848.7 506.2 1857.2 485.4 1860.0 478.5L1828.5 463.5Z" fill="url(#kA)"/>
<path d="M1860.0 478.5C1857.2 485.4 1848.7 506.2 1843.0 520.0C1837.3 533.8 1831.2 547.7 1826.0 561.0C1820.8 574.3 1816.3 587.9 1812.0 600.0C1807.7 612.1 1803.8 622.7 1800.0 633.5C1796.2 644.3 1792.5 654.3 1789.0 665.0C1785.5 675.7 1782.0 687.5 1779.0 697.5C1776.0 707.5 1773.5 716.6 1771.0 725.0C1768.5 733.4 1767.2 740.8 1764.0 748.0C1760.8 755.2 1755.8 762.8 1752.0 768.0C1748.2 773.2 1745.0 775.9 1741.0 779.0C1737.0 782.1 1729.9 785.2 1727.7 786.4L1777.5 835.0L1850.0 900.0L1944.0 890.0C1943.8 887.2 1942.8 878.0 1943.0 873.0C1943.2 868.0 1943.9 865.0 1945.0 860.0C1946.1 855.0 1947.7 848.9 1949.7 842.7C1951.7 836.5 1954.2 829.5 1957.0 823.0C1959.8 816.5 1963.5 809.7 1966.8 804.0C1970.1 798.3 1973.5 794.0 1977.0 789.0C1980.5 784.0 1984.3 778.8 1988.0 774.0C1991.7 769.2 1995.6 764.8 1999.0 760.0C2002.4 755.2 2007.0 747.8 2008.6 745.4C2008.2 740.3 2007.3 725.1 2006.0 715.0C2004.7 704.9 2003.0 694.7 2001.0 684.7C1999.0 674.7 1996.8 665.0 1994.0 655.0C1991.2 645.0 1988.0 635.2 1984.0 625.0C1980.0 614.8 1975.0 604.0 1970.0 594.0C1965.0 584.0 1960.0 574.3 1954.0 565.0C1948.0 555.7 1941.2 546.5 1934.0 538.0C1926.8 529.5 1919.0 521.3 1911.0 514.0C1903.0 506.7 1894.5 499.9 1886.0 494.0C1877.5 488.1 1864.3 481.1 1860.0 478.5Z" fill="url(#kB)"/><path d="M1860.0 478.5C1857.2 485.4 1848.7 506.2 1843.0 520.0C1837.3 533.8 1831.2 547.7 1826.0 561.0C1820.8 574.3 1816.3 587.9 1812.0 600.0C1807.7 612.1 1803.8 622.7 1800.0 633.5C1796.2 644.3 1792.5 654.3 1789.0 665.0C1785.5 675.7 1782.0 687.5 1779.0 697.5C1776.0 707.5 1773.5 716.6 1771.0 725.0C1768.5 733.4 1767.2 740.8 1764.0 748.0C1760.8 755.2 1755.8 762.8 1752.0 768.0C1748.2 773.2 1745.0 775.9 1741.0 779.0C1737.0 782.1 1729.9 785.2 1727.7 786.4L1777.5 835.0L1850.0 900.0L1944.0 890.0C1943.8 887.2 1942.8 878.0 1943.0 873.0C1943.2 868.0 1943.9 865.0 1945.0 860.0C1946.1 855.0 1947.7 848.9 1949.7 842.7C1951.7 836.5 1954.2 829.5 1957.0 823.0C1959.8 816.5 1963.5 809.7 1966.8 804.0C1970.1 798.3 1973.5 794.0 1977.0 789.0C1980.5 784.0 1984.3 778.8 1988.0 774.0C1991.7 769.2 1995.6 764.8 1999.0 760.0C2002.4 755.2 2007.0 747.8 2008.6 745.4C2008.2 740.3 2007.3 725.1 2006.0 715.0C2004.7 704.9 2003.0 694.7 2001.0 684.7C1999.0 674.7 1996.8 665.0 1994.0 655.0C1991.2 645.0 1988.0 635.2 1984.0 625.0C1980.0 614.8 1975.0 604.0 1970.0 594.0C1965.0 584.0 1960.0 574.3 1954.0 565.0C1948.0 555.7 1941.2 546.5 1934.0 538.0C1926.8 529.5 1919.0 521.3 1911.0 514.0C1903.0 506.7 1894.5 499.9 1886.0 494.0C1877.5 488.1 1864.3 481.1 1860.0 478.5Z" fill="url(#kB2)"/>
<path d="M1296.5 688.0L1327.5 702.0C1324.2 706.7 1314.2 720.3 1308.0 730.0C1301.8 739.7 1297.0 748.0 1290.0 760.0C1283.0 772.0 1273.5 787.8 1266.0 802.0C1258.5 816.2 1251.8 830.0 1245.0 845.0C1238.2 860.0 1231.2 876.2 1225.0 892.0C1218.8 907.8 1212.7 924.5 1207.5 940.0C1202.3 955.5 1198.2 970.0 1194.0 985.0C1189.8 1000.0 1185.3 1016.7 1182.5 1030.0C1179.7 1043.3 1178.2 1053.8 1177.0 1065.0C1175.8 1076.2 1175.8 1091.7 1175.5 1097.0L1144.0 1081.0C1145.5 1070.0 1149.5 1036.0 1153.0 1015.0C1156.5 994.0 1160.3 973.3 1165.0 955.0C1169.7 936.7 1175.2 921.7 1181.0 905.0C1186.8 888.3 1192.8 871.5 1200.0 855.0C1207.2 838.5 1215.7 821.8 1224.0 806.0C1232.3 790.2 1242.0 773.8 1250.0 760.0C1258.0 746.2 1264.2 735.0 1272.0 723.0C1279.8 711.0 1292.4 693.8 1296.5 688.0Z" fill="url(#kC)"/>
<path d="M1290.0 1124.0C1298.3 1130.8 1325.8 1150.7 1340.0 1165.0C1354.2 1179.3 1365.0 1193.3 1375.0 1210.0C1385.0 1226.7 1393.8 1245.8 1400.0 1265.0C1406.2 1284.2 1409.6 1304.2 1412.5 1325.0C1415.4 1345.8 1417.1 1369.2 1417.5 1390.0C1417.9 1410.8 1416.2 1430.0 1415.0 1450.0C1413.8 1470.0 1411.5 1491.8 1410.0 1510.0C1408.5 1528.2 1406.7 1550.8 1406.0 1559.0L1439.0 1574.0C1444.2 1563.3 1460.7 1530.7 1470.0 1510.0C1479.3 1489.3 1486.7 1469.2 1495.0 1450.0C1503.3 1430.8 1512.9 1411.7 1520.0 1395.0C1527.1 1378.3 1533.8 1362.5 1537.5 1350.0C1541.2 1337.5 1543.8 1330.8 1542.5 1320.0C1541.2 1309.2 1537.1 1296.7 1530.0 1285.0C1522.9 1273.3 1513.3 1262.5 1500.0 1250.0C1486.7 1237.5 1466.7 1222.5 1450.0 1210.0C1433.3 1197.5 1418.3 1185.8 1400.0 1175.0C1381.7 1164.2 1359.2 1153.8 1340.0 1145.0C1320.8 1136.2 1294.2 1125.8 1285.0 1122.0L1290.0 1124.0Z" fill="url(#kE)"/>
<path d="M1828.5 463.5C1822.1 472.9 1803.9 501.4 1790.0 520.0C1776.1 538.6 1760.0 557.5 1745.0 575.0C1730.0 592.5 1715.8 610.0 1700.0 625.0C1684.2 640.0 1666.7 653.3 1650.0 665.0C1633.3 676.7 1616.7 686.5 1600.0 695.0C1583.3 703.5 1566.7 710.2 1550.0 716.0C1533.3 721.8 1516.7 726.5 1500.0 730.0C1483.3 733.5 1464.6 735.5 1450.0 736.7C1435.4 737.9 1425.0 738.3 1412.5 737.0C1400.0 735.7 1381.2 730.3 1375.0 729.0" fill="none" stroke="#111" stroke-width="1.400" stroke-linejoin="round" stroke-linecap="round"/>
<path d="M1327.5 702.0C1331.2 704.3 1342.1 711.5 1350.0 716.0C1357.9 720.5 1366.8 725.3 1375.0 729.0C1383.2 732.7 1390.7 734.7 1399.0 738.0C1407.3 741.3 1410.8 744.0 1425.0 749.0C1439.2 754.0 1467.3 763.2 1484.0 768.0C1500.7 772.8 1510.7 774.7 1525.0 778.0C1539.3 781.3 1555.5 785.5 1570.0 788.0C1584.5 790.5 1597.8 791.7 1612.0 793.0C1626.2 794.3 1640.7 795.8 1655.0 795.7C1669.3 795.6 1685.9 793.8 1698.0 792.3C1710.1 790.8 1722.8 787.4 1727.7 786.4" fill="none" stroke="#111" stroke-width="1.400" stroke-linejoin="round" stroke-linecap="round"/>
<path d="M1860.0 478.5C1857.2 485.4 1848.7 506.2 1843.0 520.0C1837.3 533.8 1831.2 547.7 1826.0 561.0C1820.8 574.3 1816.3 587.9 1812.0 600.0C1807.7 612.1 1803.8 622.7 1800.0 633.5C1796.2 644.3 1792.5 654.3 1789.0 665.0C1785.5 675.7 1782.0 687.5 1779.0 697.5C1776.0 707.5 1773.5 716.6 1771.0 725.0C1768.5 733.4 1767.2 740.8 1764.0 748.0C1760.8 755.2 1755.8 762.8 1752.0 768.0C1748.2 773.2 1745.0 775.9 1741.0 779.0C1737.0 782.1 1729.9 785.2 1727.7 786.4" fill="none" stroke="#111" stroke-width="1.400" stroke-linejoin="round" stroke-linecap="round"/>
<path d="M1860.0 478.5C1864.3 481.1 1877.5 488.1 1886.0 494.0C1894.5 499.9 1903.0 506.7 1911.0 514.0C1919.0 521.3 1926.8 529.5 1934.0 538.0C1941.2 546.5 1948.0 555.7 1954.0 565.0C1960.0 574.3 1965.0 584.0 1970.0 594.0C1975.0 604.0 1980.0 614.8 1984.0 625.0C1988.0 635.2 1991.2 645.0 1994.0 655.0C1996.8 665.0 1999.0 674.7 2001.0 684.7C2003.0 694.7 2004.7 704.9 2006.0 715.0C2007.3 725.1 2008.2 740.3 2008.6 745.4" fill="none" stroke="#111" stroke-width="1.400" stroke-linejoin="round" stroke-linecap="round"/>
<path d="M2008.6 745.4C2007.0 747.8 2002.4 755.2 1999.0 760.0C1995.6 764.8 1991.7 769.2 1988.0 774.0C1984.3 778.8 1980.5 784.0 1977.0 789.0C1973.5 794.0 1970.1 798.3 1966.8 804.0C1963.5 809.7 1959.8 816.5 1957.0 823.0C1954.2 829.5 1951.7 836.5 1949.7 842.7C1947.7 848.9 1946.1 855.0 1945.0 860.0C1943.9 865.0 1943.2 868.0 1943.0 873.0C1942.8 878.0 1943.8 887.2 1944.0 890.0" fill="none" stroke="#111" stroke-width="1.400" stroke-linejoin="round" stroke-linecap="round"/>
<path d="M1296.5 688.0C1292.4 693.8 1279.8 711.0 1272.0 723.0C1264.2 735.0 1258.0 746.2 1250.0 760.0C1242.0 773.8 1232.3 790.2 1224.0 806.0C1215.7 821.8 1207.2 838.5 1200.0 855.0C1192.8 871.5 1186.8 888.3 1181.0 905.0C1175.2 921.7 1169.7 936.7 1165.0 955.0C1160.3 973.3 1156.5 994.0 1153.0 1015.0C1149.5 1036.0 1145.5 1070.0 1144.0 1081.0" fill="none" stroke="#111" stroke-width="1.400" stroke-linejoin="round" stroke-linecap="round"/>
<path d="M1327.5 702.0C1324.2 706.7 1314.2 720.3 1308.0 730.0C1301.8 739.7 1297.0 748.0 1290.0 760.0C1283.0 772.0 1273.5 787.8 1266.0 802.0C1258.5 816.2 1251.8 830.0 1245.0 845.0C1238.2 860.0 1231.2 876.2 1225.0 892.0C1218.8 907.8 1212.7 924.5 1207.5 940.0C1202.3 955.5 1198.2 970.0 1194.0 985.0C1189.8 1000.0 1185.3 1016.7 1182.5 1030.0C1179.7 1043.3 1178.2 1053.8 1177.0 1065.0C1175.8 1076.2 1175.8 1091.7 1175.5 1097.0" fill="none" stroke="#111" stroke-width="1.400" stroke-linejoin="round" stroke-linecap="round"/>
<path d="M1290.0 1124.0C1298.3 1130.8 1325.8 1150.7 1340.0 1165.0C1354.2 1179.3 1365.0 1193.3 1375.0 1210.0C1385.0 1226.7 1393.8 1245.8 1400.0 1265.0C1406.2 1284.2 1409.6 1304.2 1412.5 1325.0C1415.4 1345.8 1417.1 1369.2 1417.5 1390.0C1417.9 1410.8 1416.2 1430.0 1415.0 1450.0C1413.8 1470.0 1411.5 1491.8 1410.0 1510.0C1408.5 1528.2 1406.7 1550.8 1406.0 1559.0" fill="none" stroke="#111" stroke-width="1.400" stroke-linejoin="round" stroke-linecap="round"/>
<path d="M1175.5 1097.0C1179.6 1097.8 1191.8 1100.2 1200.0 1102.0C1208.2 1103.8 1215.8 1105.5 1225.0 1107.5C1234.2 1109.5 1245.0 1111.6 1255.0 1114.0C1265.0 1116.4 1270.8 1116.8 1285.0 1122.0C1299.2 1127.2 1320.8 1136.2 1340.0 1145.0C1359.2 1153.8 1381.7 1164.2 1400.0 1175.0C1418.3 1185.8 1433.3 1197.5 1450.0 1210.0C1466.7 1222.5 1486.7 1237.5 1500.0 1250.0C1513.3 1262.5 1522.9 1273.3 1530.0 1285.0C1537.1 1296.7 1541.2 1309.2 1542.5 1320.0C1543.8 1330.8 1541.2 1337.5 1537.5 1350.0C1533.8 1362.5 1527.1 1378.3 1520.0 1395.0C1512.9 1411.7 1503.3 1430.8 1495.0 1450.0C1486.7 1469.2 1479.3 1489.3 1470.0 1510.0C1460.7 1530.7 1444.2 1563.3 1439.0 1574.0" fill="none" stroke="#111" stroke-width="1.400" stroke-linejoin="round" stroke-linecap="round"/>
<path d="M1439.0 1574.0C1444.2 1574.0 1459.8 1574.7 1470.0 1574.0C1480.2 1573.3 1488.3 1572.3 1500.0 1570.0C1511.7 1567.7 1527.5 1563.8 1540.0 1560.0C1552.5 1556.2 1563.0 1552.5 1575.0 1547.5C1587.0 1542.5 1599.5 1536.2 1612.0 1530.0C1624.5 1523.8 1635.3 1519.2 1650.0 1510.0C1664.7 1500.8 1685.2 1485.4 1700.0 1475.0C1714.8 1464.6 1732.5 1452.1 1739.0 1447.5" fill="none" stroke="#111" stroke-width="1.400" stroke-linejoin="round" stroke-linecap="round"/>
<path d="M1739.0 1447.5C1739.0 1444.6 1738.8 1435.4 1739.0 1430.0C1739.2 1424.6 1739.5 1420.5 1740.0 1415.0C1740.5 1409.5 1741.2 1402.8 1742.0 1397.0C1742.8 1391.2 1744.0 1385.3 1745.0 1380.0C1746.0 1374.7 1746.8 1370.0 1748.0 1365.0C1749.2 1360.0 1751.8 1352.5 1752.5 1350.0" fill="none" stroke="#111" stroke-width="1.400" stroke-linejoin="round" stroke-linecap="round"/>
<path d="M1828.5 463.5L1860.0 478.5" fill="none" stroke="#111" stroke-width="1.400" stroke-linejoin="round" stroke-linecap="round"/>
<path d="M1296.5 688.0L1327.5 702.0" fill="none" stroke="#111" stroke-width="1.400" stroke-linejoin="round" stroke-linecap="round"/>
<path d="M1144.0 1081.0L1175.5 1097.0" fill="none" stroke="#111" stroke-width="1.400" stroke-linejoin="round" stroke-linecap="round"/>
<path d="M1406.0 1559.0L1439.0 1574.0" fill="none" stroke="#111" stroke-width="1.400" stroke-linejoin="round" stroke-linecap="round"/>
<path d="M1727.7 786.4L1777.5 835.0" fill="none" stroke="#111" stroke-width="1.400" stroke-linejoin="round" stroke-linecap="round"/>
<linearGradient id="gL" gradientUnits="userSpaceOnUse" x1="2090.9" y1="972.9" x2="1908.1" y2="1395.1"><stop offset="0" stop-color="#b2b4b0"/><stop offset="0.06" stop-color="#98988f"/><stop offset="0.13" stop-color="#8a8880"/><stop offset="0.23" stop-color="#a8a193"/><stop offset="0.35" stop-color="#a19a8c"/><stop offset="0.46" stop-color="#8a8882"/><stop offset="0.56" stop-color="#6e6c68"/><stop offset="0.66" stop-color="#8e8e8a"/><stop offset="0.74" stop-color="#969692"/><stop offset="0.84" stop-color="#6c6a66"/><stop offset="0.93" stop-color="#504e4a"/><stop offset="1" stop-color="#42403c"/></linearGradient>
<linearGradient id="gD" gradientUnits="userSpaceOnUse" x1="2090.9" y1="972.9" x2="1908.1" y2="1395.1"><stop offset="0" stop-color="#747673"/><stop offset="0.1" stop-color="#676966"/><stop offset="0.3" stop-color="#585955"/><stop offset="0.5" stop-color="#4d4d49"/><stop offset="0.7" stop-color="#45443f"/><stop offset="0.88" stop-color="#3c3a36"/><stop offset="1" stop-color="#353330"/></linearGradient>
<linearGradient id="gF" gradientUnits="userSpaceOnUse" x1="1893.2" y1="830.6" x2="1669.0" y2="1348.2"><stop offset="0" stop-color="#403e3b"/><stop offset="0.25" stop-color="#444340"/><stop offset="0.5" stop-color="#4a4945"/><stop offset="0.75" stop-color="#42403c"/><stop offset="1" stop-color="#363431"/></linearGradient>
<path d="M1669.0 1348.2L1684.0 1353.5L1699.7 1356.8L1716.0 1358.0L1732.8 1357.3L1750.0 1354.4L1767.4 1349.6L1784.9 1342.8L1802.4 1334.0L1819.7 1323.4L1836.7 1311.0L1853.3 1297.0L1869.4 1281.3L1884.8 1264.2L1899.4 1245.7L1913.1 1226.1L1925.8 1205.4L1937.4 1183.9L1947.8 1161.6L1956.9 1138.8L1964.7 1115.6L1971.1 1092.2L1976.0 1068.7L1979.5 1045.5L1981.5 1022.5L1981.9 1000.1L1980.8 978.4L1978.2 957.5L1974.1 937.6L1968.5 918.8L1961.5 901.4L1953.1 885.4L1943.4 870.9L1932.5 858.1L1920.4 847.1L1907.3 837.9L1893.2 830.6L1878.2 825.3L1862.5 822.0L1846.2 820.8L1829.4 821.6L1812.2 824.4L1794.8 829.2L1777.3 836.0L1759.8 844.8L1742.5 855.4L1725.5 867.8L1708.9 881.9L1692.8 897.5L1677.4 914.6L1662.8 933.1L1649.1 952.7L1636.4 973.4L1624.9 995.0L1614.5 1017.2L1605.3 1040.1L1597.5 1063.3L1591.1 1086.7L1586.2 1110.1L1582.7 1133.4L1580.7 1156.3L1580.3 1178.7L1581.4 1200.5L1584.0 1221.4L1588.1 1241.2L1593.7 1260.0L1600.7 1277.4L1609.1 1293.4L1618.8 1307.9L1629.7 1320.7L1641.8 1331.7L1654.9 1340.9L1669.0 1348.2Z" fill="url(#gF)" stroke="#111" stroke-width="1.300" stroke-linejoin="round"/>
<clipPath id="thc"><path d="M1872.5 878.4L1863.4 875.0L1854.0 872.5L1844.2 870.9L1834.2 870.3L1824.0 870.6L1813.5 871.9L1803.0 874.1L1792.3 877.2L1781.6 881.2L1770.9 886.1L1760.2 891.9L1749.6 898.5L1739.2 906.0L1728.9 914.2L1718.9 923.2L1709.1 932.9L1699.6 943.3L1690.5 954.3L1681.8 965.8L1673.5 977.9L1665.6 990.5L1658.3 1003.5L1651.5 1016.9L1645.2 1030.5L1639.5 1044.5L1634.4 1058.6L1630.0 1072.8L1626.2 1087.2L1623.0 1101.5L1620.5 1115.8L1618.8 1130.0L1617.7 1144.0L1617.3 1157.7L1617.6 1171.2L1618.6 1184.3L1620.4 1197.0L1622.8 1209.3L1625.8 1221.0L1629.6 1232.2L1634.0 1242.8L1639.0 1252.7L1644.6 1261.9L1650.9 1270.3L1657.6 1278.0L1664.9 1284.9L1672.7 1291.0L1681.0 1296.2L1689.7 1300.5L2316.4 1571.9L2499.3 1149.8Z"/></clipPath>
<path d="M1869.3 885.7L1860.6 882.4L1851.5 880.0L1842.0 878.5L1832.4 877.9L1822.5 878.2L1812.4 879.5L1802.2 881.6L1791.9 884.6L1781.6 888.5L1771.2 893.2L1760.9 898.8L1750.7 905.2L1740.6 912.4L1730.7 920.3L1721.0 929.0L1711.6 938.3L1702.5 948.4L1693.7 959.0L1685.2 970.1L1677.2 981.8L1669.6 993.9L1662.6 1006.5L1656.0 1019.4L1649.9 1032.6L1644.4 1046.0L1639.5 1059.7L1635.2 1073.4L1631.5 1087.3L1628.5 1101.1L1626.1 1114.9L1624.4 1128.6L1623.4 1142.1L1623.0 1155.3L1623.3 1168.3L1624.3 1181.0L1625.9 1193.3L1628.3 1205.1L1631.2 1216.4L1634.9 1227.2L1639.1 1237.4L1643.9 1247.0L1649.4 1255.9L1655.4 1264.1L1661.9 1271.5L1669.0 1278.1L1676.5 1284.0L1684.5 1289.0L1692.9 1293.1L2319.6 1564.6L2496.1 1157.1Z" fill="url(#gD)"/>
<g clip-path="url(#thc)">
<path d="M1872.5 878.4L1863.4 875.0L1854.0 872.5L1844.2 870.9L1834.2 870.3L1824.0 870.6L1813.5 871.9L1803.0 874.1L1792.3 877.2L1781.6 881.2L1770.9 886.1L1760.2 891.9L1749.6 898.5L1739.2 906.0L1728.9 914.2L1718.9 923.2L1709.1 932.9L1699.6 943.3L1690.5 954.3L1681.8 965.8L1673.5 977.9L1665.6 990.5L1658.3 1003.5L1651.5 1016.9L1645.2 1030.5L1639.5 1044.5L1634.4 1058.6L1630.0 1072.8L1626.2 1087.2L1623.0 1101.5L1620.5 1115.8L1618.8 1130.0L1617.7 1144.0L1617.3 1157.7L1617.6 1171.2L1618.6 1184.3L1620.4 1197.0L1622.8 1209.3L1625.8 1221.0L1629.6 1232.2L1634.0 1242.8L1639.0 1252.7L1644.6 1261.9L1650.9 1270.3L1657.6 1278.0L1664.9 1284.9L1672.7 1291.0L1681.0 1296.2L1689.7 1300.5L1706.2 1307.6L1696.8 1303.0L1687.7 1297.5L1679.2 1291.1L1671.1 1283.9L1663.5 1275.8L1656.6 1267.0L1650.2 1257.5L1644.4 1247.3L1639.2 1236.4L1634.7 1224.9L1630.9 1212.8L1627.7 1200.2L1625.2 1187.2L1623.4 1173.7L1622.4 1159.9L1622.0 1145.8L1622.3 1131.5L1623.3 1117.0L1625.0 1102.4L1627.4 1087.7L1630.4 1073.0L1634.1 1058.5L1638.4 1044.0L1643.3 1029.7L1648.9 1015.7L1654.9 1002.0L1661.5 988.7L1668.6 975.8L1676.1 963.4L1684.1 951.5L1692.4 940.2L1701.1 929.5L1710.2 919.4L1719.4 910.1L1728.9 901.6L1738.6 893.8L1748.4 886.8L1758.3 880.7L1768.3 875.5L1778.2 871.1L1788.1 867.7L1797.9 865.1L1807.6 863.5L1817.1 862.9L1826.3 863.2L1835.3 864.4L1844.0 866.5L1852.3 869.6Z" fill="url(#gL)" stroke="#111" stroke-width="1.300" stroke-linejoin="round"/>
<path d="M1852.3 869.6L1844.0 866.5L1835.3 864.4L1826.3 863.2L1817.1 862.9L1807.6 863.5L1797.9 865.1L1788.1 867.7L1778.2 871.1L1768.3 875.5L1758.3 880.7L1748.4 886.8L1738.6 893.8L1728.9 901.6L1719.4 910.1L1710.2 919.4L1701.1 929.5L1692.4 940.2L1684.1 951.5L1676.1 963.4L1668.6 975.8L1661.5 988.7L1654.9 1002.0L1648.9 1015.7L1643.3 1029.7L1638.4 1044.0L1634.1 1058.5L1630.4 1073.0L1627.4 1087.7L1625.0 1102.4L1623.3 1117.0L1622.3 1131.5L1622.0 1145.8L1622.4 1159.9L1623.4 1173.7L1625.2 1187.2L1627.7 1200.2L1630.9 1212.8L1634.7 1224.9L1639.2 1236.4L1644.4 1247.3L1650.2 1257.5L1656.6 1267.0L1663.5 1275.8L1671.1 1283.9L1679.2 1291.1L1687.7 1297.5L1696.8 1303.0L1706.2 1307.6L1754.0 1320.7L1744.8 1316.2L1736.0 1310.8L1727.7 1304.6L1719.8 1297.6L1712.5 1289.8L1705.7 1281.3L1699.5 1272.0L1693.8 1262.1L1688.8 1251.5L1684.4 1240.3L1680.6 1228.6L1677.6 1216.4L1675.1 1203.7L1673.4 1190.7L1672.3 1177.3L1671.9 1163.6L1672.2 1149.7L1673.2 1135.7L1674.8 1121.5L1677.1 1107.2L1680.0 1093.0L1683.5 1078.9L1687.7 1064.9L1692.4 1051.0L1697.8 1037.4L1703.6 1024.1L1710.0 1011.2L1716.8 998.7L1724.1 986.6L1731.8 975.1L1739.9 964.1L1748.3 953.7L1757.0 944.0L1766.0 934.9L1775.2 926.6L1784.5 919.1L1794.0 912.3L1803.6 906.4L1813.2 901.3L1822.9 897.0L1832.4 893.7L1841.9 891.2L1851.3 889.7L1860.4 889.0L1869.4 889.3L1878.1 890.5L1886.5 892.5L1894.5 895.5Z" fill="url(#gD)" stroke="#111" stroke-width="1.300" stroke-linejoin="round"/>
<path d="M1897.3 889.1L1889.0 886.0L1880.3 883.9L1871.3 882.7L1862.1 882.4L1852.6 883.0L1842.9 884.6L1833.1 887.1L1823.2 890.6L1813.3 894.9L1803.3 900.2L1793.4 906.3L1783.6 913.3L1773.9 921.0L1764.4 929.6L1755.1 938.9L1746.1 948.9L1737.4 959.6L1729.1 970.9L1721.1 982.8L1713.5 995.3L1706.5 1008.2L1699.9 1021.5L1693.8 1035.2L1688.3 1049.2L1683.4 1063.5L1679.1 1077.9L1675.4 1092.5L1672.3 1107.2L1670.0 1121.8L1668.3 1136.5L1667.3 1151.0L1666.9 1165.3L1667.3 1179.4L1668.4 1193.2L1670.2 1206.6L1672.7 1219.7L1675.8 1232.3L1679.7 1244.3L1684.2 1255.8L1689.3 1266.7L1695.1 1277.0L1701.5 1286.5L1708.5 1295.3L1716.1 1303.3L1724.1 1310.6L1732.7 1316.9L1741.7 1322.5L1751.2 1327.1L1772.6 1336.4L1763.2 1331.8L1754.2 1326.2L1745.6 1319.9L1737.5 1312.6L1730.0 1304.6L1723.0 1295.8L1716.6 1286.3L1710.8 1276.0L1705.7 1265.1L1701.1 1253.6L1697.3 1241.6L1694.1 1229.0L1691.7 1215.9L1689.9 1202.5L1688.8 1188.7L1688.4 1174.6L1688.7 1160.3L1689.7 1145.8L1691.4 1131.1L1693.8 1116.5L1696.9 1101.8L1700.5 1087.2L1704.9 1072.8L1709.8 1058.5L1715.3 1044.5L1721.4 1030.8L1727.9 1017.5L1735.0 1004.6L1742.6 992.1L1750.5 980.2L1758.9 968.9L1767.6 958.2L1776.6 948.2L1785.9 938.9L1795.4 930.3L1805.1 922.6L1814.9 915.6L1824.8 909.5L1834.7 904.2L1844.7 899.9L1854.6 896.4L1864.4 893.9L1874.0 892.3L1883.5 891.7L1892.8 892.0L1901.8 893.2L1910.4 895.3L1918.8 898.4Z" fill="url(#gL)" stroke="#111" stroke-width="1.300" stroke-linejoin="round"/>
<path d="M1918.8 898.4L1910.4 895.3L1901.8 893.2L1892.8 892.0L1883.5 891.7L1874.0 892.3L1864.4 893.9L1854.6 896.4L1844.7 899.9L1834.7 904.2L1824.8 909.5L1814.9 915.6L1805.1 922.6L1795.4 930.3L1785.9 938.9L1776.6 948.2L1767.6 958.2L1758.9 968.9L1750.5 980.2L1742.6 992.1L1735.0 1004.6L1727.9 1017.5L1721.4 1030.8L1715.3 1044.5L1709.8 1058.5L1704.9 1072.8L1700.5 1087.2L1696.9 1101.8L1693.8 1116.5L1691.4 1131.1L1689.7 1145.8L1688.7 1160.3L1688.4 1174.6L1688.8 1188.7L1689.9 1202.5L1691.7 1215.9L1694.1 1229.0L1697.3 1241.6L1701.1 1253.6L1705.7 1265.1L1710.8 1276.0L1716.6 1286.3L1723.0 1295.8L1730.0 1304.6L1737.5 1312.6L1745.6 1319.9L1754.2 1326.2L1763.2 1331.8L1772.6 1336.4L1820.4 1349.4L1811.2 1344.9L1802.4 1339.6L1794.1 1333.4L1786.2 1326.4L1778.9 1318.6L1772.1 1310.0L1765.9 1300.8L1760.3 1290.8L1755.2 1280.3L1750.8 1269.1L1747.1 1257.4L1744.0 1245.2L1741.6 1232.5L1739.8 1219.5L1738.7 1206.1L1738.3 1192.4L1738.6 1178.5L1739.6 1164.4L1741.2 1150.3L1743.5 1136.0L1746.4 1121.8L1750.0 1107.6L1754.1 1093.6L1758.9 1079.8L1764.2 1066.2L1770.1 1052.9L1776.4 1040.0L1783.3 1027.4L1790.5 1015.4L1798.2 1003.8L1806.3 992.8L1814.7 982.5L1823.5 972.7L1832.4 963.7L1841.6 955.4L1851.0 947.8L1860.5 941.1L1870.1 935.1L1879.7 930.0L1889.3 925.8L1898.9 922.5L1908.4 920.0L1917.7 918.5L1926.9 917.8L1935.8 918.1L1944.5 919.2L1952.9 921.3L1960.9 924.3Z" fill="url(#gD)" stroke="#111" stroke-width="1.300" stroke-linejoin="round"/>
<path d="M1963.7 917.9L1955.4 914.8L1946.7 912.6L1937.7 911.4L1928.5 911.1L1919.0 911.8L1909.3 913.4L1899.5 915.9L1889.6 919.4L1879.7 923.7L1869.7 929.0L1859.8 935.1L1850.0 942.0L1840.3 949.8L1830.8 958.4L1821.6 967.7L1812.5 977.7L1803.8 988.4L1795.5 999.7L1787.5 1011.6L1780.0 1024.1L1772.9 1037.0L1766.3 1050.3L1760.3 1064.0L1754.7 1078.0L1749.8 1092.3L1745.5 1106.7L1741.8 1121.3L1738.8 1136.0L1736.4 1150.6L1734.7 1165.2L1733.7 1179.7L1733.4 1194.1L1733.8 1208.2L1734.8 1222.0L1736.6 1235.4L1739.1 1248.5L1742.3 1261.0L1746.1 1273.1L1750.6 1284.6L1755.8 1295.5L1761.6 1305.7L1768.0 1315.3L1774.9 1324.1L1782.5 1332.1L1790.6 1339.3L1799.1 1345.7L1808.2 1351.2L1817.6 1355.9L1839.1 1365.2L1829.6 1360.5L1820.6 1355.0L1812.0 1348.6L1804.0 1341.4L1796.4 1333.4L1789.4 1324.6L1783.0 1315.0L1777.3 1304.8L1772.1 1293.9L1767.6 1282.4L1763.7 1270.3L1760.6 1257.8L1758.1 1244.7L1756.3 1231.3L1755.2 1217.5L1754.8 1203.4L1755.2 1189.0L1756.2 1174.5L1757.9 1159.9L1760.3 1145.3L1763.3 1130.6L1767.0 1116.0L1771.3 1101.6L1776.2 1087.3L1781.7 1073.3L1787.8 1059.6L1794.4 1046.3L1801.5 1033.4L1809.0 1020.9L1817.0 1009.0L1825.3 997.7L1834.0 987.0L1843.0 977.0L1852.3 967.7L1861.8 959.1L1871.5 951.3L1881.3 944.4L1891.2 938.2L1901.2 933.0L1911.1 928.7L1921.0 925.2L1930.8 922.7L1940.5 921.1L1950.0 920.4L1959.2 920.7L1968.2 921.9L1976.9 924.1L1985.2 927.2Z" fill="url(#gL)" stroke="#111" stroke-width="1.300" stroke-linejoin="round"/>
<path d="M1985.2 927.2L1976.9 924.1L1968.2 921.9L1959.2 920.7L1950.0 920.4L1940.5 921.1L1930.8 922.7L1921.0 925.2L1911.1 928.7L1901.2 933.0L1891.2 938.2L1881.3 944.4L1871.5 951.3L1861.8 959.1L1852.3 967.7L1843.0 977.0L1834.0 987.0L1825.3 997.7L1817.0 1009.0L1809.0 1020.9L1801.5 1033.4L1794.4 1046.3L1787.8 1059.6L1781.7 1073.3L1776.2 1087.3L1771.3 1101.6L1767.0 1116.0L1763.3 1130.6L1760.3 1145.3L1757.9 1159.9L1756.2 1174.5L1755.2 1189.0L1754.8 1203.4L1755.2 1217.5L1756.3 1231.3L1758.1 1244.7L1760.6 1257.8L1763.7 1270.3L1767.6 1282.4L1772.1 1293.9L1777.3 1304.8L1783.0 1315.0L1789.4 1324.6L1796.4 1333.4L1804.0 1341.4L1812.0 1348.6L1820.6 1355.0L1829.6 1360.5L1839.1 1365.2L1886.8 1378.2L1877.6 1373.7L1868.9 1368.4L1860.5 1362.2L1852.7 1355.1L1845.4 1347.4L1838.6 1338.8L1832.3 1329.6L1826.7 1319.6L1821.7 1309.0L1817.3 1297.9L1813.5 1286.2L1810.4 1274.0L1808.0 1261.3L1806.2 1248.2L1805.2 1234.8L1804.8 1221.2L1805.1 1207.3L1806.0 1193.2L1807.7 1179.0L1809.9 1164.8L1812.9 1150.6L1816.4 1136.4L1820.6 1122.4L1825.3 1108.6L1830.6 1095.0L1836.5 1081.7L1842.9 1068.7L1849.7 1056.2L1857.0 1044.2L1864.7 1032.6L1872.8 1021.6L1881.2 1011.2L1889.9 1001.5L1898.9 992.5L1908.1 984.2L1917.4 976.6L1926.9 969.8L1936.5 963.9L1946.1 958.8L1955.7 954.6L1965.3 951.2L1974.8 948.8L1984.1 947.2L1993.3 946.6L2002.3 946.8L2011.0 948.0L2019.3 950.1L2027.4 953.1Z" fill="url(#gD)" stroke="#111" stroke-width="1.300" stroke-linejoin="round"/>
<path d="M2030.2 946.6L2021.8 943.6L2013.2 941.4L2004.2 940.2L1994.9 939.9L1985.4 940.6L1975.8 942.2L1966.0 944.7L1956.1 948.1L1946.1 952.5L1936.2 957.7L1926.3 963.8L1916.5 970.8L1906.8 978.6L1897.3 987.1L1888.0 996.5L1879.0 1006.5L1870.3 1017.2L1861.9 1028.5L1854.0 1040.4L1846.4 1052.8L1839.3 1065.7L1832.8 1079.1L1826.7 1092.8L1821.2 1106.8L1816.3 1121.0L1811.9 1135.5L1808.3 1150.1L1805.2 1164.7L1802.8 1179.4L1801.1 1194.0L1800.1 1208.5L1799.8 1222.8L1800.2 1236.9L1801.3 1250.7L1803.1 1264.2L1805.5 1277.2L1808.7 1289.8L1812.5 1301.9L1817.1 1313.4L1822.2 1324.3L1828.0 1334.5L1834.4 1344.1L1841.4 1352.9L1848.9 1360.9L1857.0 1368.1L1865.6 1374.5L1874.6 1380.0L1884.0 1384.6L1905.5 1393.9L1896.1 1389.3L1887.0 1383.8L1878.5 1377.4L1870.4 1370.2L1862.9 1362.2L1855.9 1353.4L1849.5 1343.8L1843.7 1333.6L1838.5 1322.7L1834.0 1311.2L1830.2 1299.1L1827.0 1286.5L1824.5 1273.5L1822.7 1260.0L1821.7 1246.2L1821.3 1232.1L1821.6 1217.8L1822.6 1203.3L1824.3 1188.7L1826.7 1174.0L1829.7 1159.4L1833.4 1144.8L1837.7 1130.3L1842.7 1116.1L1848.2 1102.1L1854.2 1088.4L1860.8 1075.0L1867.9 1062.1L1875.4 1049.7L1883.4 1037.8L1891.8 1026.5L1900.5 1015.8L1909.5 1005.8L1918.7 996.4L1928.2 987.9L1937.9 980.1L1947.7 973.1L1957.6 967.0L1967.6 961.8L1977.5 957.4L1987.4 954.0L1997.3 951.5L2006.9 949.9L2016.4 949.2L2025.7 949.5L2034.6 950.7L2043.3 952.9L2051.6 955.9Z" fill="url(#gL)" stroke="#111" stroke-width="1.300" stroke-linejoin="round"/>
<path d="M2051.6 955.9L2043.3 952.9L2034.6 950.7L2025.7 949.5L2016.4 949.2L2006.9 949.9L1997.3 951.5L1987.4 954.0L1977.5 957.4L1967.6 961.8L1957.6 967.0L1947.7 973.1L1937.9 980.1L1928.2 987.9L1918.7 996.4L1909.5 1005.8L1900.5 1015.8L1891.8 1026.5L1883.4 1037.8L1875.4 1049.7L1867.9 1062.1L1860.8 1075.0L1854.2 1088.4L1848.2 1102.1L1842.7 1116.1L1837.7 1130.3L1833.4 1144.8L1829.7 1159.4L1826.7 1174.0L1824.3 1188.7L1822.6 1203.3L1821.6 1217.8L1821.3 1232.1L1821.7 1246.2L1822.7 1260.0L1824.5 1273.5L1827.0 1286.5L1830.2 1299.1L1834.0 1311.2L1838.5 1322.7L1843.7 1333.6L1849.5 1343.8L1855.9 1353.4L1862.9 1362.2L1870.4 1370.2L1878.5 1377.4L1887.0 1383.8L1896.1 1389.3L1905.5 1393.9L1953.3 1407.0L1944.1 1402.5L1935.3 1397.1L1927.0 1390.9L1919.1 1383.9L1911.8 1376.1L1905.0 1367.6L1898.8 1358.3L1893.1 1348.4L1888.1 1337.8L1883.7 1326.6L1880.0 1314.9L1876.9 1302.7L1874.4 1290.1L1872.7 1277.0L1871.6 1263.6L1871.2 1249.9L1871.5 1236.0L1872.5 1222.0L1874.1 1207.8L1876.4 1193.6L1879.3 1179.3L1882.8 1165.2L1887.0 1151.2L1891.8 1137.3L1897.1 1123.7L1902.9 1110.5L1909.3 1097.5L1916.1 1085.0L1923.4 1072.9L1931.1 1061.4L1939.2 1050.4L1947.6 1040.0L1956.3 1030.3L1965.3 1021.2L1974.5 1012.9L1983.9 1005.4L1993.3 998.6L2002.9 992.7L2012.5 987.6L2022.2 983.4L2031.7 980.0L2041.2 977.6L2050.6 976.0L2059.7 975.4L2068.7 975.6L2077.4 976.8L2085.8 978.9L2093.8 981.8Z" fill="url(#gD)" stroke="#111" stroke-width="1.300" stroke-linejoin="round"/>
<path d="M2096.6 975.4L2088.3 972.3L2079.6 970.2L2070.6 969.0L2061.4 968.7L2051.9 969.3L2042.2 970.9L2032.4 973.5L2022.5 976.9L2012.6 981.3L2002.6 986.5L1992.7 992.6L1982.9 999.6L1973.2 1007.4L1963.7 1015.9L1954.4 1025.2L1945.4 1035.3L1936.7 1046.0L1928.4 1057.3L1920.4 1069.2L1912.9 1081.6L1905.8 1094.5L1899.2 1107.8L1893.1 1121.5L1887.6 1135.5L1882.7 1149.8L1878.4 1164.3L1874.7 1178.8L1871.7 1193.5L1869.3 1208.2L1867.6 1222.8L1866.6 1237.3L1866.2 1251.6L1866.6 1265.7L1867.7 1279.5L1869.5 1293.0L1872.0 1306.0L1875.1 1318.6L1879.0 1330.7L1883.5 1342.2L1888.7 1353.1L1894.4 1363.3L1900.8 1372.8L1907.8 1381.6L1915.4 1389.7L1923.4 1396.9L1932.0 1403.3L1941.0 1408.8L1950.5 1413.4L1972.0 1422.7L1962.5 1418.1L1953.5 1412.6L1944.9 1406.2L1936.8 1399.0L1929.3 1390.9L1922.3 1382.1L1915.9 1372.6L1910.1 1362.4L1905.0 1351.5L1900.5 1340.0L1896.6 1327.9L1893.4 1315.3L1891.0 1302.3L1889.2 1288.8L1888.1 1275.0L1887.7 1260.9L1888.0 1246.6L1889.0 1232.1L1890.7 1217.5L1893.1 1202.8L1896.2 1188.1L1899.9 1173.6L1904.2 1159.1L1909.1 1144.8L1914.6 1130.8L1920.7 1117.1L1927.2 1103.8L1934.3 1090.9L1941.9 1078.5L1949.8 1066.6L1958.2 1055.3L1966.9 1044.6L1975.9 1034.5L1985.2 1025.2L1994.7 1016.7L2004.4 1008.9L2014.2 1001.9L2024.1 995.8L2034.0 990.6L2044.0 986.2L2053.9 982.8L2063.7 980.2L2073.4 978.6L2082.8 978.0L2092.1 978.3L2101.1 979.5L2109.8 981.6L2118.1 984.7Z" fill="url(#gL)" stroke="#111" stroke-width="1.300" stroke-linejoin="round"/>
<path d="M2118.1 984.7L2109.8 981.6L2101.1 979.5L2092.1 978.3L2082.8 978.0L2073.4 978.6L2063.7 980.2L2053.9 982.8L2044.0 986.2L2034.0 990.6L2024.1 995.8L2014.2 1001.9L2004.4 1008.9L1994.7 1016.7L1985.2 1025.2L1975.9 1034.5L1966.9 1044.6L1958.2 1055.3L1949.8 1066.6L1941.9 1078.5L1934.3 1090.9L1927.2 1103.8L1920.7 1117.1L1914.6 1130.8L1909.1 1144.8L1904.2 1159.1L1899.9 1173.6L1896.2 1188.1L1893.1 1202.8L1890.7 1217.5L1889.0 1232.1L1888.0 1246.6L1887.7 1260.9L1888.1 1275.0L1889.2 1288.8L1891.0 1302.3L1893.4 1315.3L1896.6 1327.9L1900.5 1340.0L1905.0 1351.5L1910.1 1362.4L1915.9 1372.6L1922.3 1382.1L1929.3 1390.9L1936.8 1399.0L1944.9 1406.2L1953.5 1412.6L1962.5 1418.1L1972.0 1422.7L2019.7 1435.8L2010.5 1431.3L2001.7 1425.9L1993.4 1419.7L1985.6 1412.7L1978.2 1404.9L1971.4 1396.4L1965.2 1387.1L1959.6 1377.2L1954.5 1366.6L1950.1 1355.4L1946.4 1343.7L1943.3 1331.5L1940.9 1318.8L1939.1 1305.8L1938.0 1292.4L1937.7 1278.7L1937.9 1264.8L1938.9 1250.8L1940.5 1236.6L1942.8 1222.3L1945.7 1208.1L1949.3 1194.0L1953.4 1179.9L1958.2 1166.1L1963.5 1152.5L1969.4 1139.2L1975.7 1126.3L1982.6 1113.8L1989.9 1101.7L1997.6 1090.2L2005.6 1079.2L2014.0 1068.8L2022.8 1059.1L2031.7 1050.0L2040.9 1041.7L2050.3 1034.2L2059.8 1027.4L2069.4 1021.5L2079.0 1016.4L2088.6 1012.1L2098.2 1008.8L2107.7 1006.3L2117.0 1004.8L2126.2 1004.1L2135.1 1004.4L2143.8 1005.6L2152.2 1007.6L2160.3 1010.6Z" fill="url(#gD)" stroke="#111" stroke-width="1.300" stroke-linejoin="round"/>
<path d="M2163.0 1004.2L2154.7 1001.1L2146.0 999.0L2137.1 997.7L2127.8 997.5L2118.3 998.1L2108.7 999.7L2098.8 1002.2L2088.9 1005.7L2079.0 1010.0L2069.1 1015.3L2059.1 1021.4L2049.3 1028.3L2039.6 1036.1L2030.1 1044.7L2020.9 1054.0L2011.9 1064.0L2003.2 1074.7L1994.8 1086.0L1986.8 1097.9L1979.3 1110.4L1972.2 1123.3L1965.6 1136.6L1959.6 1150.3L1954.1 1164.3L1949.1 1178.6L1944.8 1193.0L1941.1 1207.6L1938.1 1222.3L1935.7 1236.9L1934.0 1251.6L1933.0 1266.1L1932.7 1280.4L1933.1 1294.5L1934.1 1308.3L1935.9 1321.7L1938.4 1334.8L1941.6 1347.4L1945.4 1359.4L1949.9 1370.9L1955.1 1381.8L1960.9 1392.1L1967.3 1401.6L1974.3 1410.4L1981.8 1418.4L1989.9 1425.7L1998.4 1432.0L2007.5 1437.6L2016.9 1442.2L2038.4 1451.5L2028.9 1446.9L2019.9 1441.3L2011.3 1435.0L2003.3 1427.7L1995.7 1419.7L1988.8 1410.9L1982.4 1401.4L1976.6 1391.1L1971.4 1380.2L1966.9 1368.7L1963.0 1356.7L1959.9 1344.1L1957.4 1331.0L1955.6 1317.6L1954.5 1303.8L1954.2 1289.7L1954.5 1275.4L1955.5 1260.9L1957.2 1246.2L1959.6 1231.6L1962.6 1216.9L1966.3 1202.3L1970.6 1187.9L1975.5 1173.6L1981.0 1159.6L1987.1 1145.9L1993.7 1132.6L2000.8 1119.7L2008.3 1107.2L2016.3 1095.3L2024.6 1084.0L2033.3 1073.3L2042.3 1063.3L2051.6 1054.0L2061.1 1045.4L2070.8 1037.6L2080.6 1030.7L2090.5 1024.6L2100.5 1019.3L2110.4 1015.0L2120.3 1011.5L2130.1 1009.0L2139.8 1007.4L2149.3 1006.8L2158.5 1007.0L2167.5 1008.3L2176.2 1010.4L2184.5 1013.5Z" fill="url(#gL)" stroke="#111" stroke-width="1.300" stroke-linejoin="round"/>
<path d="M2184.5 1013.5L2176.2 1010.4L2167.5 1008.3L2158.5 1007.0L2149.3 1006.8L2139.8 1007.4L2130.1 1009.0L2120.3 1011.5L2110.4 1015.0L2100.5 1019.3L2090.5 1024.6L2080.6 1030.7L2070.8 1037.6L2061.1 1045.4L2051.6 1054.0L2042.3 1063.3L2033.3 1073.3L2024.6 1084.0L2016.3 1095.3L2008.3 1107.2L2000.8 1119.7L1993.7 1132.6L1987.1 1145.9L1981.0 1159.6L1975.5 1173.6L1970.6 1187.9L1966.3 1202.3L1962.6 1216.9L1959.6 1231.6L1957.2 1246.2L1955.5 1260.9L1954.5 1275.4L1954.2 1289.7L1954.5 1303.8L1955.6 1317.6L1957.4 1331.0L1959.9 1344.1L1963.0 1356.7L1966.9 1368.7L1971.4 1380.2L1976.6 1391.1L1982.4 1401.4L1988.8 1410.9L1995.7 1419.7L2003.3 1427.7L2011.3 1435.0L2019.9 1441.3L2028.9 1446.9L2038.4 1451.5L2086.1 1464.5L2076.9 1460.0L2068.2 1454.7L2059.8 1448.5L2052.0 1441.5L2044.7 1433.7L2037.9 1425.1L2031.6 1415.9L2026.0 1405.9L2021.0 1395.4L2016.6 1384.2L2012.8 1372.5L2009.7 1360.3L2007.3 1347.6L2005.6 1334.6L2004.5 1321.2L2004.1 1307.5L2004.4 1293.6L2005.3 1279.5L2007.0 1265.3L2009.2 1251.1L2012.2 1236.9L2015.7 1222.7L2019.9 1208.7L2024.6 1194.9L2029.9 1181.3L2035.8 1168.0L2042.2 1155.1L2049.0 1142.5L2056.3 1130.5L2064.0 1118.9L2072.1 1107.9L2080.5 1097.6L2089.2 1087.8L2098.2 1078.8L2107.4 1070.5L2116.7 1062.9L2126.2 1056.2L2135.8 1050.2L2145.4 1045.1L2155.0 1040.9L2164.6 1037.6L2174.1 1035.1L2183.4 1033.5L2192.6 1032.9L2201.6 1033.2L2210.3 1034.3L2218.6 1036.4L2226.7 1039.4Z" fill="url(#gD)" stroke="#111" stroke-width="1.300" stroke-linejoin="round"/>
<path d="M2229.5 1033.0L2221.2 1029.9L2212.5 1027.7L2203.5 1026.5L2194.2 1026.2L2184.8 1026.9L2175.1 1028.5L2165.3 1031.0L2155.4 1034.4L2145.4 1038.8L2135.5 1044.0L2125.6 1050.2L2115.8 1057.1L2106.1 1064.9L2096.6 1073.5L2087.3 1082.8L2078.3 1092.8L2069.6 1103.5L2061.2 1114.8L2053.3 1126.7L2045.7 1139.1L2038.6 1152.1L2032.1 1165.4L2026.0 1179.1L2020.5 1193.1L2015.6 1207.4L2011.3 1221.8L2007.6 1236.4L2004.5 1251.0L2002.1 1265.7L2000.4 1280.3L1999.4 1294.8L1999.1 1309.2L1999.5 1323.3L2000.6 1337.1L2002.4 1350.5L2004.8 1363.5L2008.0 1376.1L2011.9 1388.2L2016.4 1399.7L2021.5 1410.6L2027.3 1420.8L2033.7 1430.4L2040.7 1439.2L2048.2 1447.2L2056.3 1454.4L2064.9 1460.8L2073.9 1466.3L2083.4 1471.0L2104.8 1480.3L2095.4 1475.6L2086.3 1470.1L2077.8 1463.7L2069.7 1456.5L2062.2 1448.5L2055.2 1439.7L2048.8 1430.1L2043.0 1419.9L2037.8 1409.0L2033.3 1397.5L2029.5 1385.4L2026.3 1372.8L2023.8 1359.8L2022.1 1346.4L2021.0 1332.6L2020.6 1318.5L2020.9 1304.1L2021.9 1289.6L2023.6 1275.0L2026.0 1260.3L2029.0 1245.7L2032.7 1231.1L2037.0 1216.7L2042.0 1202.4L2047.5 1188.4L2053.5 1174.7L2060.1 1161.4L2067.2 1148.4L2074.7 1136.0L2082.7 1124.1L2091.1 1112.8L2099.8 1102.1L2108.8 1092.1L2118.1 1082.8L2127.6 1074.2L2137.2 1066.4L2147.1 1059.5L2157.0 1053.3L2166.9 1048.1L2176.9 1043.7L2186.8 1040.3L2196.6 1037.8L2206.2 1036.2L2215.7 1035.5L2225.0 1035.8L2234.0 1037.0L2242.6 1039.2L2250.9 1042.3Z" fill="url(#gL)" stroke="#111" stroke-width="1.300" stroke-linejoin="round"/>
<path d="M2250.9 1042.3L2242.6 1039.2L2234.0 1037.0L2225.0 1035.8L2215.7 1035.5L2206.2 1036.2L2196.6 1037.8L2186.8 1040.3L2176.9 1043.7L2166.9 1048.1L2157.0 1053.3L2147.1 1059.5L2137.2 1066.4L2127.6 1074.2L2118.1 1082.8L2108.8 1092.1L2099.8 1102.1L2091.1 1112.8L2082.7 1124.1L2074.7 1136.0L2067.2 1148.4L2060.1 1161.4L2053.5 1174.7L2047.5 1188.4L2042.0 1202.4L2037.0 1216.7L2032.7 1231.1L2029.0 1245.7L2026.0 1260.3L2023.6 1275.0L2021.9 1289.6L2020.9 1304.1L2020.6 1318.5L2021.0 1332.6L2022.1 1346.4L2023.8 1359.8L2026.3 1372.8L2029.5 1385.4L2033.3 1397.5L2037.8 1409.0L2043.0 1419.9L2048.8 1430.1L2055.2 1439.7L2062.2 1448.5L2069.7 1456.5L2077.8 1463.7L2086.3 1470.1L2095.4 1475.6L2104.8 1480.3L2152.6 1493.3L2143.4 1488.8L2134.6 1483.5L2126.3 1477.3L2118.4 1470.2L2111.1 1462.5L2104.3 1453.9L2098.1 1444.6L2092.4 1434.7L2087.4 1424.1L2083.0 1413.0L2079.3 1401.3L2076.2 1389.0L2073.7 1376.4L2072.0 1363.3L2070.9 1349.9L2070.5 1336.3L2070.8 1322.4L2071.8 1308.3L2073.4 1294.1L2075.7 1279.9L2078.6 1265.7L2082.2 1251.5L2086.3 1237.5L2091.1 1223.7L2096.4 1210.1L2102.2 1196.8L2108.6 1183.8L2115.4 1171.3L2122.7 1159.3L2130.4 1147.7L2138.5 1136.7L2146.9 1126.3L2155.6 1116.6L2164.6 1107.6L2173.8 1099.3L2183.2 1091.7L2192.7 1084.9L2202.2 1079.0L2211.9 1073.9L2221.5 1069.7L2231.1 1066.3L2240.5 1063.9L2249.9 1062.3L2259.1 1061.7L2268.0 1061.9L2276.7 1063.1L2285.1 1065.2L2293.1 1068.2Z" fill="url(#gD)" stroke="#111" stroke-width="1.300" stroke-linejoin="round"/>
<path d="M2295.9 1061.7L2287.6 1058.7L2278.9 1056.5L2269.9 1055.3L2260.7 1055.0L2251.2 1055.7L2241.5 1057.3L2231.7 1059.8L2221.8 1063.2L2211.9 1067.6L2201.9 1072.8L2192.0 1078.9L2182.2 1085.9L2172.5 1093.7L2163.0 1102.2L2153.7 1111.6L2144.7 1121.6L2136.0 1132.3L2127.7 1143.6L2119.7 1155.5L2112.2 1167.9L2105.1 1180.8L2098.5 1194.2L2092.4 1207.9L2086.9 1221.9L2082.0 1236.1L2077.7 1250.6L2074.0 1265.2L2071.0 1279.8L2068.6 1294.5L2066.9 1309.1L2065.9 1323.6L2065.6 1337.9L2065.9 1352.0L2067.0 1365.8L2068.8 1379.3L2071.3 1392.3L2074.4 1404.9L2078.3 1417.0L2082.8 1428.5L2088.0 1439.4L2093.8 1449.6L2100.2 1459.2L2107.1 1468.0L2114.7 1476.0L2122.7 1483.2L2131.3 1489.6L2140.3 1495.1L2149.8 1499.7L2171.3 1509.0L2161.8 1504.4L2152.8 1498.9L2144.2 1492.5L2136.1 1485.3L2128.6 1477.3L2121.6 1468.5L2115.2 1458.9L2109.4 1448.7L2104.3 1437.8L2099.8 1426.3L2095.9 1414.2L2092.8 1401.6L2090.3 1388.6L2088.5 1375.1L2087.4 1361.3L2087.0 1347.2L2087.3 1332.9L2088.4 1318.4L2090.1 1303.8L2092.4 1289.1L2095.5 1274.5L2099.2 1259.9L2103.5 1245.4L2108.4 1231.2L2113.9 1217.2L2120.0 1203.5L2126.6 1190.1L2133.6 1177.2L2141.2 1164.8L2149.1 1152.9L2157.5 1141.6L2166.2 1130.9L2175.2 1120.9L2184.5 1111.5L2194.0 1103.0L2203.7 1095.2L2213.5 1088.2L2223.4 1082.1L2233.3 1076.9L2243.3 1072.5L2253.2 1069.1L2263.0 1066.6L2272.7 1065.0L2282.1 1064.3L2291.4 1064.6L2300.4 1065.8L2309.1 1068.0L2317.4 1071.0Z" fill="url(#gL)" stroke="#111" stroke-width="1.300" stroke-linejoin="round"/>
<path d="M2317.4 1071.0L2309.1 1068.0L2300.4 1065.8L2291.4 1064.6L2282.1 1064.3L2272.7 1065.0L2263.0 1066.6L2253.2 1069.1L2243.3 1072.5L2233.3 1076.9L2223.4 1082.1L2213.5 1088.2L2203.7 1095.2L2194.0 1103.0L2184.5 1111.5L2175.2 1120.9L2166.2 1130.9L2157.5 1141.6L2149.1 1152.9L2141.2 1164.8L2133.6 1177.2L2126.6 1190.1L2120.0 1203.5L2113.9 1217.2L2108.4 1231.2L2103.5 1245.4L2099.2 1259.9L2095.5 1274.5L2092.4 1289.1L2090.1 1303.8L2088.4 1318.4L2087.3 1332.9L2087.0 1347.2L2087.4 1361.3L2088.5 1375.1L2090.3 1388.6L2092.8 1401.6L2095.9 1414.2L2099.8 1426.3L2104.3 1437.8L2109.4 1448.7L2115.2 1458.9L2121.6 1468.5L2128.6 1477.3L2136.1 1485.3L2144.2 1492.5L2152.8 1498.9L2161.8 1504.4L2171.3 1509.0L2219.0 1522.1L2209.8 1517.6L2201.0 1512.2L2192.7 1506.0L2184.9 1499.0L2177.5 1491.2L2170.7 1482.7L2164.5 1473.4L2158.9 1463.5L2153.9 1452.9L2149.5 1441.7L2145.7 1430.0L2142.6 1417.8L2140.2 1405.2L2138.4 1392.1L2137.4 1378.7L2137.0 1365.0L2137.2 1351.1L2138.2 1337.1L2139.8 1322.9L2142.1 1308.7L2145.0 1294.4L2148.6 1280.3L2152.8 1266.3L2157.5 1252.4L2162.8 1238.8L2168.7 1225.5L2175.0 1212.6L2181.9 1200.1L2189.2 1188.0L2196.9 1176.5L2204.9 1165.5L2213.4 1155.1L2222.1 1145.4L2231.0 1136.3L2240.2 1128.0L2249.6 1120.5L2259.1 1113.7L2268.7 1107.8L2278.3 1102.7L2287.9 1098.5L2297.5 1095.1L2307.0 1092.7L2316.3 1091.1L2325.5 1090.5L2334.4 1090.7L2343.1 1091.9L2351.5 1094.0L2359.6 1096.9Z" fill="url(#gD)" stroke="#111" stroke-width="1.300" stroke-linejoin="round"/>
<path d="M2362.3 1090.5L2354.0 1087.4L2345.4 1085.3L2336.4 1084.1L2327.1 1083.8L2317.6 1084.4L2308.0 1086.0L2298.2 1088.6L2288.3 1092.0L2278.3 1096.4L2268.4 1101.6L2258.5 1107.7L2248.6 1114.7L2239.0 1122.4L2229.5 1131.0L2220.2 1140.3L2211.2 1150.4L2202.5 1161.0L2194.1 1172.4L2186.1 1184.3L2178.6 1196.7L2171.5 1209.6L2164.9 1222.9L2158.9 1236.6L2153.4 1250.6L2148.4 1264.9L2144.1 1279.4L2140.4 1293.9L2137.4 1308.6L2135.0 1323.3L2133.3 1337.9L2132.3 1352.4L2132.0 1366.7L2132.4 1380.8L2133.5 1394.6L2135.2 1408.1L2137.7 1421.1L2140.9 1433.7L2144.7 1445.8L2149.2 1457.3L2154.4 1468.2L2160.2 1478.4L2166.6 1487.9L2173.6 1496.7L2181.1 1504.8L2189.2 1512.0L2197.7 1518.4L2206.8 1523.9L2216.2 1528.5L2237.7 1537.8L2228.2 1533.2L2219.2 1527.7L2210.6 1521.3L2202.6 1514.1L2195.0 1506.0L2188.1 1497.2L2181.7 1487.7L2175.9 1477.5L2170.7 1466.6L2166.2 1455.1L2162.4 1443.0L2159.2 1430.4L2156.7 1417.4L2154.9 1403.9L2153.8 1390.1L2153.5 1376.0L2153.8 1361.7L2154.8 1347.2L2156.5 1332.6L2158.9 1317.9L2161.9 1303.2L2165.6 1288.7L2169.9 1274.2L2174.8 1259.9L2180.3 1245.9L2186.4 1232.2L2193.0 1218.9L2200.1 1206.0L2207.6 1193.6L2215.6 1181.7L2223.9 1170.3L2232.6 1159.7L2241.6 1149.6L2250.9 1140.3L2260.4 1131.7L2270.1 1124.0L2279.9 1117.0L2289.8 1110.9L2299.8 1105.6L2309.7 1101.3L2319.6 1097.9L2329.4 1095.3L2339.1 1093.7L2348.6 1093.1L2357.8 1093.4L2366.8 1094.6L2375.5 1096.7L2383.8 1099.8Z" fill="url(#gL)" stroke="#111" stroke-width="1.300" stroke-linejoin="round"/>
<path d="M2383.8 1099.8L2375.5 1096.7L2366.8 1094.6L2357.8 1093.4L2348.6 1093.1L2339.1 1093.7L2329.4 1095.3L2319.6 1097.9L2309.7 1101.3L2299.8 1105.6L2289.8 1110.9L2279.9 1117.0L2270.1 1124.0L2260.4 1131.7L2250.9 1140.3L2241.6 1149.6L2232.6 1159.7L2223.9 1170.3L2215.6 1181.7L2207.6 1193.6L2200.1 1206.0L2193.0 1218.9L2186.4 1232.2L2180.3 1245.9L2174.8 1259.9L2169.9 1274.2L2165.6 1288.7L2161.9 1303.2L2158.9 1317.9L2156.5 1332.6L2154.8 1347.2L2153.8 1361.7L2153.5 1376.0L2153.8 1390.1L2154.9 1403.9L2156.7 1417.4L2159.2 1430.4L2162.4 1443.0L2166.2 1455.1L2170.7 1466.6L2175.9 1477.5L2181.7 1487.7L2188.1 1497.2L2195.0 1506.0L2202.6 1514.1L2210.6 1521.3L2219.2 1527.7L2228.2 1533.2L2237.7 1537.8L2285.4 1550.9L2276.3 1546.4L2267.5 1541.0L2259.1 1534.8L2251.3 1527.8L2244.0 1520.0L2237.2 1511.5L2231.0 1502.2L2225.3 1492.3L2220.3 1481.7L2215.9 1470.5L2212.1 1458.8L2209.0 1446.6L2206.6 1433.9L2204.9 1420.9L2203.8 1407.5L2203.4 1393.8L2203.7 1379.9L2204.6 1365.8L2206.3 1351.7L2208.6 1337.4L2211.5 1323.2L2215.0 1309.1L2219.2 1295.0L2223.9 1281.2L2229.3 1267.6L2235.1 1254.3L2241.5 1241.4L2248.3 1228.9L2255.6 1216.8L2263.3 1205.3L2271.4 1194.3L2279.8 1183.9L2288.5 1174.2L2297.5 1165.1L2306.7 1156.8L2316.0 1149.3L2325.5 1142.5L2335.1 1136.6L2344.7 1131.5L2354.4 1127.2L2363.9 1123.9L2373.4 1121.4L2382.8 1119.9L2391.9 1119.2L2400.9 1119.5L2409.6 1120.7L2418.0 1122.7L2426.0 1125.7Z" fill="url(#gD)" stroke="#111" stroke-width="1.300" stroke-linejoin="round"/>
<path d="M2428.8 1119.3L2420.5 1116.2L2411.8 1114.1L2402.8 1112.8L2393.5 1112.6L2384.1 1113.2L2374.4 1114.8L2364.6 1117.3L2354.7 1120.8L2344.7 1125.1L2334.8 1130.4L2324.9 1136.5L2315.1 1143.4L2305.4 1151.2L2295.9 1159.8L2286.6 1169.1L2277.6 1179.1L2268.9 1189.8L2260.5 1201.1L2252.6 1213.0L2245.0 1225.5L2238.0 1238.4L2231.4 1251.7L2225.3 1265.4L2219.8 1279.4L2214.9 1293.7L2210.6 1308.1L2206.9 1322.7L2203.8 1337.4L2201.5 1352.0L2199.8 1366.7L2198.7 1381.2L2198.4 1395.5L2198.8 1409.6L2199.9 1423.4L2201.7 1436.8L2204.2 1449.9L2207.3 1462.5L2211.2 1474.5L2215.7 1486.0L2220.8 1496.9L2226.6 1507.2L2233.0 1516.7L2240.0 1525.5L2247.5 1533.5L2255.6 1540.8L2264.2 1547.1L2273.2 1552.7L2282.7 1557.3L2304.1 1566.6L2294.7 1562.0L2285.7 1556.4L2277.1 1550.1L2269.0 1542.8L2261.5 1534.8L2254.5 1526.0L2248.1 1516.5L2242.3 1506.2L2237.2 1495.3L2232.6 1483.8L2228.8 1471.8L2225.6 1459.2L2223.1 1446.1L2221.4 1432.7L2220.3 1418.9L2219.9 1404.8L2220.2 1390.5L2221.2 1376.0L2222.9 1361.3L2225.3 1346.7L2228.4 1332.0L2232.0 1317.4L2236.4 1303.0L2241.3 1288.7L2246.8 1274.7L2252.8 1261.0L2259.4 1247.7L2266.5 1234.8L2274.0 1222.3L2282.0 1210.4L2290.4 1199.1L2299.1 1188.4L2308.1 1178.4L2317.4 1169.1L2326.9 1160.5L2336.5 1152.7L2346.4 1145.8L2356.3 1139.7L2366.2 1134.4L2376.2 1130.1L2386.1 1126.6L2395.9 1124.1L2405.5 1122.5L2415.0 1121.9L2424.3 1122.1L2433.3 1123.4L2441.9 1125.5L2450.3 1128.6Z" fill="url(#gL)" stroke="#111" stroke-width="1.300" stroke-linejoin="round"/>
<path d="M2450.3 1128.6L2441.9 1125.5L2433.3 1123.4L2424.3 1122.1L2415.0 1121.9L2405.5 1122.5L2395.9 1124.1L2386.1 1126.6L2376.2 1130.1L2366.2 1134.4L2356.3 1139.7L2346.4 1145.8L2336.5 1152.7L2326.9 1160.5L2317.4 1169.1L2308.1 1178.4L2299.1 1188.4L2290.4 1199.1L2282.0 1210.4L2274.0 1222.3L2266.5 1234.8L2259.4 1247.7L2252.8 1261.0L2246.8 1274.7L2241.3 1288.7L2236.4 1303.0L2232.0 1317.4L2228.4 1332.0L2225.3 1346.7L2222.9 1361.3L2221.2 1376.0L2220.2 1390.5L2219.9 1404.8L2220.3 1418.9L2221.4 1432.7L2223.1 1446.1L2225.6 1459.2L2228.8 1471.8L2232.6 1483.8L2237.2 1495.3L2242.3 1506.2L2248.1 1516.5L2254.5 1526.0L2261.5 1534.8L2269.0 1542.8L2277.1 1550.1L2285.7 1556.4L2294.7 1562.0L2304.1 1566.6L2351.9 1579.6L2342.7 1575.1L2333.9 1569.8L2325.6 1563.6L2317.7 1556.6L2310.4 1548.8L2303.6 1540.2L2297.4 1531.0L2291.8 1521.0L2286.7 1510.5L2282.3 1499.3L2278.6 1487.6L2275.5 1475.4L2273.1 1462.7L2271.3 1449.7L2270.2 1436.3L2269.8 1422.6L2270.1 1408.7L2271.1 1394.6L2272.7 1380.4L2275.0 1366.2L2277.9 1352.0L2281.5 1337.8L2285.6 1323.8L2290.4 1310.0L2295.7 1296.4L2301.5 1283.1L2307.9 1270.2L2314.7 1257.6L2322.0 1245.6L2329.7 1234.0L2337.8 1223.0L2346.2 1212.7L2354.9 1202.9L2363.9 1193.9L2373.1 1185.6L2382.5 1178.0L2392.0 1171.3L2401.5 1165.3L2411.2 1160.2L2420.8 1156.0L2430.4 1152.7L2439.8 1150.2L2449.2 1148.6L2458.4 1148.0L2467.3 1148.3L2476.0 1149.4L2484.4 1151.5L2492.4 1154.5Z" fill="url(#gD)" stroke="#111" stroke-width="1.300" stroke-linejoin="round"/>
<path d="M2495.2 1148.1L2486.9 1145.0L2478.2 1142.8L2469.2 1141.6L2460.0 1141.3L2450.5 1142.0L2440.8 1143.6L2431.0 1146.1L2421.1 1149.5L2411.2 1153.9L2401.2 1159.1L2391.3 1165.3L2381.5 1172.2L2371.8 1180.0L2362.3 1188.6L2353.1 1197.9L2344.0 1207.9L2335.3 1218.6L2327.0 1229.9L2319.0 1241.8L2311.5 1254.2L2304.4 1267.2L2297.8 1280.5L2291.7 1294.2L2286.2 1308.2L2281.3 1322.5L2277.0 1336.9L2273.3 1351.5L2270.3 1366.1L2267.9 1380.8L2266.2 1395.4L2265.2 1409.9L2264.9 1424.3L2265.2 1438.3L2266.3 1452.1L2268.1 1465.6L2270.6 1478.6L2273.8 1491.2L2277.6 1503.3L2282.1 1514.8L2287.3 1525.7L2293.1 1535.9L2299.5 1545.5L2306.4 1554.3L2314.0 1562.3L2322.1 1569.5L2330.6 1575.9L2339.6 1581.4L2349.1 1586.1L2370.6 1595.4L2361.1 1590.7L2352.1 1585.2L2343.5 1578.8L2335.5 1571.6L2327.9 1563.6L2320.9 1554.8L2314.5 1545.2L2308.7 1535.0L2303.6 1524.1L2299.1 1512.6L2295.2 1500.5L2292.1 1487.9L2289.6 1474.9L2287.8 1461.4L2286.7 1447.6L2286.3 1433.6L2286.7 1419.2L2287.7 1404.7L2289.4 1390.1L2291.7 1375.4L2294.8 1360.8L2298.5 1346.2L2302.8 1331.8L2307.7 1317.5L2313.2 1303.5L2319.3 1289.8L2325.9 1276.5L2332.9 1263.5L2340.5 1251.1L2348.5 1239.2L2356.8 1227.9L2365.5 1217.2L2374.5 1207.2L2383.8 1197.9L2393.3 1189.3L2403.0 1181.5L2412.8 1174.6L2422.7 1168.4L2432.7 1163.2L2442.6 1158.8L2452.5 1155.4L2462.3 1152.9L2472.0 1151.3L2481.5 1150.6L2490.7 1150.9L2499.7 1152.1L2508.4 1154.3L2516.7 1157.4Z" fill="url(#gL)" stroke="#111" stroke-width="1.300" stroke-linejoin="round"/>
<path d="M2516.7 1157.4L2508.4 1154.3L2499.7 1152.1L2490.7 1150.9L2481.5 1150.6L2472.0 1151.3L2462.3 1152.9L2452.5 1155.4L2442.6 1158.8L2432.7 1163.2L2422.7 1168.4L2412.8 1174.6L2403.0 1181.5L2393.3 1189.3L2383.8 1197.9L2374.5 1207.2L2365.5 1217.2L2356.8 1227.9L2348.5 1239.2L2340.5 1251.1L2332.9 1263.5L2325.9 1276.5L2319.3 1289.8L2313.2 1303.5L2307.7 1317.5L2302.8 1331.8L2298.5 1346.2L2294.8 1360.8L2291.7 1375.4L2289.4 1390.1L2287.7 1404.7L2286.7 1419.2L2286.3 1433.6L2286.7 1447.6L2287.8 1461.4L2289.6 1474.9L2292.1 1487.9L2295.2 1500.5L2299.1 1512.6L2303.6 1524.1L2308.7 1535.0L2314.5 1545.2L2320.9 1554.8L2327.9 1563.6L2335.5 1571.6L2343.5 1578.8L2352.1 1585.2L2361.1 1590.7L2370.6 1595.4L2418.3 1608.4L2409.1 1603.9L2400.4 1598.5L2392.0 1592.4L2384.2 1585.3L2376.8 1577.5L2370.0 1569.0L2363.8 1559.7L2358.2 1549.8L2353.2 1539.2L2348.8 1528.1L2345.0 1516.4L2341.9 1504.1L2339.5 1491.5L2337.7 1478.4L2336.7 1465.0L2336.3 1451.4L2336.6 1437.5L2337.5 1423.4L2339.1 1409.2L2341.4 1395.0L2344.4 1380.8L2347.9 1366.6L2352.1 1352.6L2356.8 1338.8L2362.1 1325.2L2368.0 1311.9L2374.3 1298.9L2381.2 1286.4L2388.5 1274.4L2396.2 1262.8L2404.3 1251.8L2412.7 1241.4L2421.4 1231.7L2430.4 1222.7L2439.5 1214.4L2448.9 1206.8L2458.4 1200.0L2468.0 1194.1L2477.6 1189.0L2487.2 1184.8L2496.8 1181.4L2506.3 1179.0L2515.6 1177.4L2524.8 1176.8L2533.8 1177.0L2542.4 1178.2L2550.8 1180.3L2558.9 1183.3Z" fill="url(#gD)" stroke="#111" stroke-width="1.300" stroke-linejoin="round"/>
<path d="M2561.7 1176.8L2553.3 1173.8L2544.7 1171.6L2535.7 1170.4L2526.4 1170.1L2516.9 1170.8L2507.3 1172.4L2497.5 1174.9L2487.6 1178.3L2477.6 1182.7L2467.7 1187.9L2457.8 1194.0L2447.9 1201.0L2438.3 1208.8L2428.8 1217.3L2419.5 1226.6L2410.5 1236.7L2401.8 1247.4L2393.4 1258.7L2385.5 1270.6L2377.9 1283.0L2370.8 1295.9L2364.2 1309.3L2358.2 1323.0L2352.7 1337.0L2347.8 1351.2L2343.4 1365.7L2339.8 1380.3L2336.7 1394.9L2334.3 1409.6L2332.6 1424.2L2331.6 1438.7L2331.3 1453.0L2331.7 1467.1L2332.8 1480.9L2334.5 1494.4L2337.0 1507.4L2340.2 1520.0L2344.0 1532.1L2348.6 1543.6L2353.7 1554.5L2359.5 1564.7L2365.9 1574.3L2372.9 1583.1L2380.4 1591.1L2388.5 1598.3L2397.1 1604.7L2406.1 1610.2L2415.5 1614.8L2437.0 1624.1L2427.6 1619.5L2418.5 1614.0L2410.0 1607.6L2401.9 1600.4L2394.4 1592.4L2387.4 1583.6L2381.0 1574.0L2375.2 1563.8L2370.0 1552.9L2365.5 1541.4L2361.7 1529.3L2358.5 1516.7L2356.0 1503.7L2354.2 1490.2L2353.2 1476.4L2352.8 1462.3L2353.1 1448.0L2354.1 1433.5L2355.8 1418.9L2358.2 1404.2L2361.2 1389.6L2364.9 1375.0L2369.2 1360.5L2374.2 1346.3L2379.7 1332.3L2385.7 1318.6L2392.3 1305.2L2399.4 1292.3L2406.9 1279.9L2414.9 1268.0L2423.2 1256.7L2431.9 1246.0L2441.0 1235.9L2450.2 1226.6L2459.7 1218.1L2469.4 1210.3L2479.2 1203.3L2489.1 1197.2L2499.1 1192.0L2509.0 1187.6L2518.9 1184.2L2528.7 1181.7L2538.4 1180.1L2547.9 1179.4L2557.1 1179.7L2566.1 1180.9L2574.8 1183.1L2583.1 1186.1Z" fill="url(#gL)" stroke="#111" stroke-width="1.300" stroke-linejoin="round"/>
<path d="M2583.1 1186.1L2574.8 1183.1L2566.1 1180.9L2557.1 1179.7L2547.9 1179.4L2538.4 1180.1L2528.7 1181.7L2518.9 1184.2L2509.0 1187.6L2499.1 1192.0L2489.1 1197.2L2479.2 1203.3L2469.4 1210.3L2459.7 1218.1L2450.2 1226.6L2441.0 1235.9L2431.9 1246.0L2423.2 1256.7L2414.9 1268.0L2406.9 1279.9L2399.4 1292.3L2392.3 1305.2L2385.7 1318.6L2379.7 1332.3L2374.2 1346.3L2369.2 1360.5L2364.9 1375.0L2361.2 1389.6L2358.2 1404.2L2355.8 1418.9L2354.1 1433.5L2353.1 1448.0L2352.8 1462.3L2353.2 1476.4L2354.2 1490.2L2356.0 1503.7L2358.5 1516.7L2361.7 1529.3L2365.5 1541.4L2370.0 1552.9L2375.2 1563.8L2381.0 1574.0L2387.4 1583.6L2394.4 1592.4L2401.9 1600.4L2410.0 1607.6L2418.5 1614.0L2427.6 1619.5L2437.0 1624.1L2484.8 1637.2L2475.6 1632.7L2466.8 1627.3L2458.5 1621.1L2450.6 1614.1L2443.3 1606.3L2436.5 1597.8L2430.3 1588.5L2424.6 1578.6L2419.6 1568.0L2415.2 1556.8L2411.5 1545.1L2408.4 1532.9L2405.9 1520.3L2404.2 1507.2L2403.1 1493.8L2402.7 1480.1L2403.0 1466.2L2404.0 1452.2L2405.6 1438.0L2407.9 1423.8L2410.8 1409.5L2414.3 1395.4L2418.5 1381.4L2423.3 1367.5L2428.6 1353.9L2434.4 1340.6L2440.8 1327.7L2447.6 1315.2L2454.9 1303.1L2462.6 1291.6L2470.7 1280.6L2479.1 1270.2L2487.8 1260.5L2496.8 1251.4L2506.0 1243.1L2515.3 1235.6L2524.8 1228.8L2534.4 1222.9L2544.0 1217.8L2553.7 1213.6L2563.2 1210.2L2572.7 1207.7L2582.1 1206.2L2591.2 1205.6L2600.2 1205.8L2608.9 1207.0L2617.3 1209.1L2625.3 1212.0Z" fill="url(#gD)" stroke="#111" stroke-width="1.300" stroke-linejoin="round"/>
<path d="M2628.1 1205.6L2619.8 1202.5L2611.1 1200.4L2602.1 1199.2L2592.9 1198.9L2583.4 1199.5L2573.7 1201.1L2563.9 1203.6L2554.0 1207.1L2544.1 1211.4L2534.1 1216.7L2524.2 1222.8L2514.4 1229.8L2504.7 1237.5L2495.2 1246.1L2485.9 1255.4L2476.9 1265.4L2468.2 1276.1L2459.9 1287.5L2451.9 1299.4L2444.3 1311.8L2437.3 1324.7L2430.7 1338.0L2424.6 1351.7L2419.1 1365.7L2414.2 1380.0L2409.9 1394.5L2406.2 1409.0L2403.1 1423.7L2400.8 1438.4L2399.1 1453.0L2398.1 1467.5L2397.7 1481.8L2398.1 1495.9L2399.2 1509.7L2401.0 1523.1L2403.5 1536.2L2406.6 1548.8L2410.5 1560.8L2415.0 1572.4L2420.1 1583.2L2425.9 1593.5L2432.3 1603.0L2439.3 1611.8L2446.9 1619.9L2454.9 1627.1L2463.5 1633.5L2472.5 1639.0L2482.0 1643.6L2503.4 1652.9L2494.0 1648.3L2485.0 1642.8L2476.4 1636.4L2468.3 1629.2L2460.8 1621.1L2453.8 1612.3L2447.4 1602.8L2441.6 1592.5L2436.5 1581.7L2431.9 1570.1L2428.1 1558.1L2424.9 1545.5L2422.5 1532.4L2420.7 1519.0L2419.6 1505.2L2419.2 1491.1L2419.5 1476.8L2420.5 1462.3L2422.2 1447.7L2424.6 1433.0L2427.7 1418.3L2431.3 1403.8L2435.7 1389.3L2440.6 1375.0L2446.1 1361.0L2452.2 1347.3L2458.7 1334.0L2465.8 1321.1L2473.4 1308.7L2481.3 1296.8L2489.7 1285.4L2498.4 1274.7L2507.4 1264.7L2516.7 1255.4L2526.2 1246.8L2535.9 1239.1L2545.7 1232.1L2555.6 1226.0L2565.5 1220.7L2575.5 1216.4L2585.4 1212.9L2595.2 1210.4L2604.8 1208.8L2614.3 1208.2L2623.6 1208.5L2632.6 1209.7L2641.2 1211.8L2649.6 1214.9Z" fill="url(#gL)" stroke="#111" stroke-width="1.300" stroke-linejoin="round"/>
<path d="M2649.6 1214.9L2641.2 1211.8L2632.6 1209.7L2623.6 1208.5L2614.3 1208.2L2604.8 1208.8L2595.2 1210.4L2585.4 1212.9L2575.5 1216.4L2565.5 1220.7L2555.6 1226.0L2545.7 1232.1L2535.9 1239.1L2526.2 1246.8L2516.7 1255.4L2507.4 1264.7L2498.4 1274.7L2489.7 1285.4L2481.3 1296.8L2473.4 1308.7L2465.8 1321.1L2458.7 1334.0L2452.2 1347.3L2446.1 1361.0L2440.6 1375.0L2435.7 1389.3L2431.3 1403.8L2427.7 1418.3L2424.6 1433.0L2422.2 1447.7L2420.5 1462.3L2419.5 1476.8L2419.2 1491.1L2419.6 1505.2L2420.7 1519.0L2422.5 1532.4L2424.9 1545.5L2428.1 1558.1L2431.9 1570.1L2436.5 1581.7L2441.6 1592.5L2447.4 1602.8L2453.8 1612.3L2460.8 1621.1L2468.3 1629.2L2476.4 1636.4L2485.0 1642.8L2494.0 1648.3L2503.4 1652.9L2551.2 1666.0L2542.0 1661.5L2533.2 1656.1L2524.9 1649.9L2517.0 1642.9L2509.7 1635.1L2502.9 1626.6L2496.7 1617.3L2491.1 1607.4L2486.0 1596.8L2481.6 1585.6L2477.9 1573.9L2474.8 1561.7L2472.4 1549.0L2470.6 1536.0L2469.5 1522.6L2469.1 1508.9L2469.4 1495.0L2470.4 1480.9L2472.0 1466.8L2474.3 1452.5L2477.2 1438.3L2480.8 1424.2L2484.9 1410.1L2489.7 1396.3L2495.0 1382.7L2500.9 1369.4L2507.2 1356.5L2514.1 1344.0L2521.3 1331.9L2529.0 1320.4L2537.1 1309.4L2545.5 1299.0L2554.3 1289.3L2563.2 1280.2L2572.4 1271.9L2581.8 1264.3L2591.3 1257.6L2600.9 1251.7L2610.5 1246.6L2620.1 1242.3L2629.7 1239.0L2639.2 1236.5L2648.5 1235.0L2657.7 1234.3L2666.6 1234.6L2675.3 1235.8L2683.7 1237.8L2691.7 1240.8Z" fill="url(#gD)" stroke="#111" stroke-width="1.300" stroke-linejoin="round"/>
<path d="M2694.5 1234.4L2686.2 1231.3L2677.5 1229.2L2668.5 1227.9L2659.3 1227.7L2649.8 1228.3L2640.1 1229.9L2630.3 1232.4L2620.4 1235.9L2610.5 1240.2L2600.5 1245.5L2590.6 1251.6L2580.8 1258.5L2571.1 1266.3L2561.6 1274.9L2552.4 1284.2L2543.3 1294.2L2534.6 1304.9L2526.3 1316.2L2518.3 1328.1L2510.8 1340.6L2503.7 1353.5L2497.1 1366.8L2491.1 1380.5L2485.6 1394.5L2480.6 1408.8L2476.3 1423.2L2472.6 1437.8L2469.6 1452.5L2467.2 1467.1L2465.5 1481.7L2464.5 1496.2L2464.2 1510.6L2464.6 1524.7L2465.6 1538.5L2467.4 1551.9L2469.9 1565.0L2473.1 1577.6L2476.9 1589.6L2481.4 1601.1L2486.6 1612.0L2492.4 1622.3L2498.8 1631.8L2505.8 1640.6L2513.3 1648.6L2521.4 1655.9L2529.9 1662.2L2539.0 1667.8L2548.4 1672.4L2569.9 1681.7L2560.4 1677.1L2551.4 1671.5L2542.8 1665.1L2534.8 1657.9L2527.2 1649.9L2520.2 1641.1L2513.8 1631.6L2508.1 1621.3L2502.9 1610.4L2498.4 1598.9L2494.5 1586.9L2491.4 1574.3L2488.9 1561.2L2487.1 1547.8L2486.0 1534.0L2485.6 1519.9L2486.0 1505.5L2487.0 1491.0L2488.7 1476.4L2491.1 1461.8L2494.1 1447.1L2497.8 1432.5L2502.1 1418.1L2507.0 1403.8L2512.5 1389.8L2518.6 1376.1L2525.2 1362.8L2532.3 1349.9L2539.8 1337.4L2547.8 1325.5L2556.1 1314.2L2564.8 1303.5L2573.8 1293.5L2583.1 1284.2L2592.6 1275.6L2602.3 1267.8L2612.1 1260.9L2622.0 1254.8L2632.0 1249.5L2641.9 1245.2L2651.8 1241.7L2661.6 1239.2L2671.3 1237.6L2680.8 1237.0L2690.0 1237.2L2699.0 1238.5L2707.7 1240.6L2716.0 1243.7Z" fill="url(#gL)" stroke="#111" stroke-width="1.300" stroke-linejoin="round"/>
</g>
<defs>
<linearGradient id="dO" gradientUnits="userSpaceOnUse" x1="2508.4" y1="1153.8" x2="2325.6" y2="1575.9"><stop offset="0" stop-color="#858784"/><stop offset="0.2" stop-color="#7c7e7b"/><stop offset="0.45" stop-color="#72726e"/><stop offset="0.7" stop-color="#605f5b"/><stop offset="0.9" stop-color="#4c4a46"/><stop offset="1" stop-color="#434140"/></linearGradient>
<linearGradient id="dI" gradientUnits="userSpaceOnUse" x1="2508.4" y1="1153.8" x2="2325.6" y2="1575.9"><stop offset="0" stop-color="#929490"/><stop offset="0.25" stop-color="#8c8d88"/><stop offset="0.45" stop-color="#827f78"/><stop offset="0.6" stop-color="#7b7973"/><stop offset="0.8" stop-color="#5e5c58"/><stop offset="1" stop-color="#484642"/></linearGradient>
<linearGradient id="dI2" gradientUnits="userSpaceOnUse" x1="2300.0" y1="1380.0" x2="2570.0" y2="1260.0"><stop offset="0" stop-color="#9a9a95" stop-opacity="0.5"/><stop offset="0.35" stop-color="#7d7a72" stop-opacity="0.25"/><stop offset="0.6" stop-color="#8e8f8b" stop-opacity="0"/><stop offset="1" stop-color="#9c9e9a" stop-opacity="0.5"/></linearGradient>
<linearGradient id="bW" gradientUnits="userSpaceOnUse" x1="2370.0" y1="1500.0" x2="2550.0" y2="1260.0"><stop offset="0" stop-color="#b0b1ac"/><stop offset="0.18" stop-color="#86857f"/><stop offset="0.4" stop-color="#948f84"/><stop offset="0.55" stop-color="#66645f"/><stop offset="0.75" stop-color="#43413e"/><stop offset="1" stop-color="#4c4b48"/></linearGradient>
<linearGradient id="bF" gradientUnits="userSpaceOnUse" x1="2340.0" y1="1250.0" x2="2470.0" y2="1480.0"><stop offset="0" stop-color="#65645f"/><stop offset="0.5" stop-color="#5c5a55"/><stop offset="1" stop-color="#4c4a46"/></linearGradient>
<linearGradient id="bH" gradientUnits="userSpaceOnUse" x1="2340.0" y1="1300.0" x2="2400.0" y2="1390.0"><stop offset="0" stop-color="#2e2d2b"/><stop offset="0.45" stop-color="#4a4946"/><stop offset="0.75" stop-color="#8a8a86"/><stop offset="1" stop-color="#3a3937"/></linearGradient>
<clipPath id="dh"><path d="M2215.6 1417.8L2216.0 1403.1L2217.2 1388.2L2219.1 1373.0L2221.9 1357.8L2225.4 1342.5L2229.7 1327.2L2234.7 1312.0L2240.4 1297.1L2246.8 1282.3L2253.8 1267.9L2261.4 1253.9L2269.6 1240.4L2278.4 1227.3L2287.6 1214.9L2297.3 1203.1L2307.4 1192.0L2317.8 1181.7L2328.6 1172.2L2339.6 1163.6L2350.7 1155.8L2362.1 1149.0L2373.5 1143.2L2384.9 1138.4L2396.3 1134.5L2407.6 1131.8L2418.8 1130.1L2429.8 1129.4L2440.6 1129.8L2451.0 1131.3L2461.1 1133.9L2470.8 1137.5L2485.5 1143.8L2494.8 1148.5L2500.4 1151.7L2509.2 1157.3L2517.4 1163.9L2522.2 1168.1L2529.8 1175.6L2536.8 1183.9L2540.6 1189.0L2546.8 1198.0L2552.4 1207.9L2557.3 1218.6L2559.7 1223.8L2563.8 1235.0L2567.2 1246.7L2569.8 1259.0L2570.8 1263.9L2572.7 1276.4L2573.8 1289.4L2574.2 1302.7L2573.8 1316.3L2572.7 1330.2L2572.4 1333.3L2570.7 1346.9L2568.2 1360.6L2565.0 1374.4L2561.2 1388.1L2556.7 1401.8L2551.6 1415.2L2545.8 1428.5L2539.5 1441.4L2532.6 1454.0L2525.2 1466.2L2517.4 1478.0L2509.1 1489.2L2500.4 1499.8L2498.3 1502.1L2488.9 1512.4L2479.2 1522.0L2469.2 1530.8L2459.0 1538.8L2448.6 1546.0L2444.4 1548.7L2433.6 1555.2L2422.7 1560.7L2411.8 1565.3L2406.3 1567.2L2395.2 1570.9L2384.2 1573.6L2373.3 1575.2L2367.0 1575.9L2356.1 1576.6L2345.5 1576.2L2339.1 1575.5L2328.7 1574.0L2318.6 1571.5L2312.4 1569.5L2302.7 1566.0L2288.0 1559.6L2278.7 1555.0L2270.0 1549.3L2261.7 1542.7L2254.1 1535.2L2247.0 1526.7L2240.6 1517.4L2234.9 1507.2L2229.8 1496.3L2225.6 1484.7L2222.0 1472.4L2219.2 1459.5L2217.2 1446.0L2216.0 1432.1Z"/></clipPath>
<clipPath id="bc"><path d="M2380.0 1513.3L2388.0 1516.2L2396.4 1517.9L2405.1 1518.6L2414.1 1518.2L2423.3 1516.7L2432.6 1514.1L2442.0 1510.4L2451.3 1505.8L2460.6 1500.1L2469.7 1493.4L2478.6 1485.9L2487.2 1477.5L2495.5 1468.4L2503.3 1458.5L2510.6 1448.0L2517.4 1436.9L2523.6 1425.3L2529.2 1413.4L2534.1 1401.2L2538.3 1388.8L2541.7 1376.2L2544.3 1363.7L2546.2 1351.2L2547.2 1339.0L2547.5 1326.9L2546.9 1315.3L2545.5 1304.1L2543.3 1293.5L2540.3 1283.4L2536.6 1274.1L2532.1 1265.5L2526.9 1257.8L2521.0 1250.9L2514.6 1245.0L2507.5 1240.1L2500.0 1236.2L2492.0 1233.4L2483.6 1231.6L2474.8 1230.9L2465.8 1231.3L2456.6 1232.9L2447.3 1235.4L2437.9 1239.1L2428.6 1243.8L2419.3 1249.5L2410.2 1256.1L2401.3 1263.6L2392.7 1272.0L2384.5 1281.2L2376.6 1291.1L2369.3 1301.6L2362.5 1312.6L2356.3 1324.2L2350.7 1336.1L2345.8 1348.3L2341.7 1360.8L2338.2 1373.3L2335.6 1385.8L2333.7 1398.3L2332.7 1410.6L2332.4 1422.6L2333.0 1434.2L2334.4 1445.4L2336.6 1456.1L2339.6 1466.1L2343.4 1475.4L2347.9 1484.0L2353.1 1491.8L2358.9 1498.6L2365.4 1504.5L2372.4 1509.4L2380.0 1513.3Z"/></clipPath>
</defs>
<path d="M2215.6 1417.8L2216.0 1403.1L2217.2 1388.2L2219.1 1373.0L2221.9 1357.8L2225.4 1342.5L2229.7 1327.2L2234.7 1312.0L2240.4 1297.1L2246.8 1282.3L2253.8 1267.9L2261.4 1253.9L2269.6 1240.4L2278.4 1227.3L2287.6 1214.9L2297.3 1203.1L2307.4 1192.0L2317.8 1181.7L2328.6 1172.2L2339.6 1163.6L2350.7 1155.8L2362.1 1149.0L2373.5 1143.2L2384.9 1138.4L2396.3 1134.5L2407.6 1131.8L2418.8 1130.1L2429.8 1129.4L2440.6 1129.8L2451.0 1131.3L2461.1 1133.9L2470.8 1137.5L2485.5 1143.8L2494.8 1148.5L2500.4 1151.7L2509.2 1157.3L2517.4 1163.9L2522.2 1168.1L2529.8 1175.6L2536.8 1183.9L2540.6 1189.0L2546.8 1198.0L2552.4 1207.9L2557.3 1218.6L2559.7 1223.8L2563.8 1235.0L2567.2 1246.7L2569.8 1259.0L2570.8 1263.9L2572.7 1276.4L2573.8 1289.4L2574.2 1302.7L2573.8 1316.3L2572.7 1330.2L2572.4 1333.3L2570.7 1346.9L2568.2 1360.6L2565.0 1374.4L2561.2 1388.1L2556.7 1401.8L2551.6 1415.2L2545.8 1428.5L2539.5 1441.4L2532.6 1454.0L2525.2 1466.2L2517.4 1478.0L2509.1 1489.2L2500.4 1499.8L2498.3 1502.1L2488.9 1512.4L2479.2 1522.0L2469.2 1530.8L2459.0 1538.8L2448.6 1546.0L2444.4 1548.7L2433.6 1555.2L2422.7 1560.7L2411.8 1565.3L2406.3 1567.2L2395.2 1570.9L2384.2 1573.6L2373.3 1575.2L2367.0 1575.9L2356.1 1576.6L2345.5 1576.2L2339.1 1575.5L2328.7 1574.0L2318.6 1571.5L2312.4 1569.5L2302.7 1566.0L2288.0 1559.6L2278.7 1555.0L2270.0 1549.3L2261.7 1542.7L2254.1 1535.2L2247.0 1526.7L2240.6 1517.4L2234.9 1507.2L2229.8 1496.3L2225.6 1484.7L2222.0 1472.4L2219.2 1459.5L2217.2 1446.0L2216.0 1432.1Z" fill="url(#dO)" stroke="#111" stroke-width="1.300"/>
<g clip-path="url(#dh)"><path d="M2478.5 1142.5C2472.7 1143.5 2455.6 1145.4 2443.5 1148.7C2431.4 1152.0 2416.4 1157.3 2406.0 1162.5C2395.6 1167.7 2389.3 1172.9 2381.0 1180.0C2372.7 1187.1 2363.5 1196.7 2356.0 1205.0C2348.5 1213.3 2342.2 1221.7 2336.0 1230.0C2329.8 1238.3 2323.5 1245.8 2318.5 1255.0C2313.5 1264.2 2309.8 1275.8 2306.0 1285.0C2302.2 1294.2 2298.7 1301.7 2296.0 1310.0C2293.3 1318.3 2291.5 1326.7 2289.7 1335.0C2287.9 1343.3 2286.2 1351.7 2285.0 1360.0C2283.8 1368.3 2282.8 1376.7 2282.2 1385.0C2281.6 1393.3 2281.2 1400.8 2281.5 1410.0C2281.8 1419.2 2282.4 1430.3 2284.0 1440.0C2285.6 1449.7 2288.0 1459.7 2291.0 1468.0C2294.0 1476.3 2297.2 1482.5 2302.0 1490.0C2306.8 1497.5 2312.3 1506.2 2320.0 1513.0C2327.7 1519.8 2338.3 1526.7 2348.0 1531.0C2357.7 1535.3 2367.2 1537.5 2378.0 1539.0C2388.8 1540.5 2400.5 1541.5 2412.5 1540.0C2424.5 1538.5 2437.5 1535.4 2450.0 1530.0C2462.5 1524.6 2476.7 1515.8 2487.5 1507.5C2498.3 1499.2 2505.4 1491.2 2515.0 1480.0C2524.6 1468.8 2540.0 1446.7 2545.0 1440.0L2650 1400L2650 1100L2500 1100Z" fill="url(#dI)"/><path d="M2478.5 1142.5C2472.7 1143.5 2455.6 1145.4 2443.5 1148.7C2431.4 1152.0 2416.4 1157.3 2406.0 1162.5C2395.6 1167.7 2389.3 1172.9 2381.0 1180.0C2372.7 1187.1 2363.5 1196.7 2356.0 1205.0C2348.5 1213.3 2342.2 1221.7 2336.0 1230.0C2329.8 1238.3 2323.5 1245.8 2318.5 1255.0C2313.5 1264.2 2309.8 1275.8 2306.0 1285.0C2302.2 1294.2 2298.7 1301.7 2296.0 1310.0C2293.3 1318.3 2291.5 1326.7 2289.7 1335.0C2287.9 1343.3 2286.2 1351.7 2285.0 1360.0C2283.8 1368.3 2282.8 1376.7 2282.2 1385.0C2281.6 1393.3 2281.2 1400.8 2281.5 1410.0C2281.8 1419.2 2282.4 1430.3 2284.0 1440.0C2285.6 1449.7 2288.0 1459.7 2291.0 1468.0C2294.0 1476.3 2297.2 1482.5 2302.0 1490.0C2306.8 1497.5 2312.3 1506.2 2320.0 1513.0C2327.7 1519.8 2338.3 1526.7 2348.0 1531.0C2357.7 1535.3 2367.2 1537.5 2378.0 1539.0C2388.8 1540.5 2400.5 1541.5 2412.5 1540.0C2424.5 1538.5 2437.5 1535.4 2450.0 1530.0C2462.5 1524.6 2476.7 1515.8 2487.5 1507.5C2498.3 1499.2 2505.4 1491.2 2515.0 1480.0C2524.6 1468.8 2540.0 1446.7 2545.0 1440.0L2650 1400L2650 1100L2500 1100Z" fill="url(#dI2)"/><path d="M2478.5 1142.5C2472.7 1143.5 2455.6 1145.4 2443.5 1148.7C2431.4 1152.0 2416.4 1157.3 2406.0 1162.5C2395.6 1167.7 2389.3 1172.9 2381.0 1180.0C2372.7 1187.1 2363.5 1196.7 2356.0 1205.0C2348.5 1213.3 2342.2 1221.7 2336.0 1230.0C2329.8 1238.3 2323.5 1245.8 2318.5 1255.0C2313.5 1264.2 2309.8 1275.8 2306.0 1285.0C2302.2 1294.2 2298.7 1301.7 2296.0 1310.0C2293.3 1318.3 2291.5 1326.7 2289.7 1335.0C2287.9 1343.3 2286.2 1351.7 2285.0 1360.0C2283.8 1368.3 2282.8 1376.7 2282.2 1385.0C2281.6 1393.3 2281.2 1400.8 2281.5 1410.0C2281.8 1419.2 2282.4 1430.3 2284.0 1440.0C2285.6 1449.7 2288.0 1459.7 2291.0 1468.0C2294.0 1476.3 2297.2 1482.5 2302.0 1490.0C2306.8 1497.5 2312.3 1506.2 2320.0 1513.0C2327.7 1519.8 2338.3 1526.7 2348.0 1531.0C2357.7 1535.3 2367.2 1537.5 2378.0 1539.0C2388.8 1540.5 2400.5 1541.5 2412.5 1540.0C2424.5 1538.5 2437.5 1535.4 2450.0 1530.0C2462.5 1524.6 2476.7 1515.8 2487.5 1507.5C2498.3 1499.2 2505.4 1491.2 2515.0 1480.0C2524.6 1468.8 2540.0 1446.7 2545.0 1440.0" stroke="#111" stroke-width="1.300" fill="none" stroke-linejoin="round"/></g>
<path d="M2380.0 1513.3L2388.0 1516.2L2396.4 1517.9L2405.1 1518.6L2414.1 1518.2L2423.3 1516.7L2432.6 1514.1L2442.0 1510.4L2451.3 1505.8L2460.6 1500.1L2469.7 1493.4L2478.6 1485.9L2487.2 1477.5L2495.5 1468.4L2503.3 1458.5L2510.6 1448.0L2517.4 1436.9L2523.6 1425.3L2529.2 1413.4L2534.1 1401.2L2538.3 1388.8L2541.7 1376.2L2544.3 1363.7L2546.2 1351.2L2547.2 1339.0L2547.5 1326.9L2546.9 1315.3L2545.5 1304.1L2543.3 1293.5L2540.3 1283.4L2536.6 1274.1L2532.1 1265.5L2526.9 1257.8L2521.0 1250.9L2514.6 1245.0L2507.5 1240.1L2500.0 1236.2L2492.0 1233.4L2483.6 1231.6L2474.8 1230.9L2465.8 1231.3L2456.6 1232.9L2447.3 1235.4L2437.9 1239.1L2428.6 1243.8L2419.3 1249.5L2410.2 1256.1L2401.3 1263.6L2392.7 1272.0L2384.5 1281.2L2376.6 1291.1L2369.3 1301.6L2362.5 1312.6L2356.3 1324.2L2350.7 1336.1L2345.8 1348.3L2341.7 1360.8L2338.2 1373.3L2335.6 1385.8L2333.7 1398.3L2332.7 1410.6L2332.4 1422.6L2333.0 1434.2L2334.4 1445.4L2336.6 1456.1L2339.6 1466.1L2343.4 1475.4L2347.9 1484.0L2353.1 1491.8L2358.9 1498.6L2365.4 1504.5L2372.4 1509.4L2380.0 1513.3Z" fill="url(#bW)"/>
<g clip-path="url(#bc)">
<path d="M2307.5 1481.9L2315.5 1484.8L2323.9 1486.5L2332.6 1487.2L2341.6 1486.8L2350.8 1485.3L2360.1 1482.7L2369.5 1479.0L2378.9 1474.4L2388.1 1468.7L2397.3 1462.0L2406.1 1454.5L2414.7 1446.1L2423.0 1437.0L2430.8 1427.1L2438.1 1416.6L2444.9 1405.5L2451.1 1393.9L2456.7 1382.0L2461.6 1369.8L2465.8 1357.4L2469.2 1344.8L2471.8 1332.3L2473.7 1319.8L2474.8 1307.6L2475.0 1295.6L2474.4 1283.9L2473.0 1272.7L2470.8 1262.1L2467.8 1252.0L2464.1 1242.7L2459.6 1234.1L2454.4 1226.4L2448.5 1219.5L2442.1 1213.6L2435.0 1208.7L2427.5 1204.8L2419.5 1202.0L2411.1 1200.2L2402.3 1199.5L2393.3 1199.9L2384.1 1201.5L2374.8 1204.0L2365.4 1207.7L2356.1 1212.4L2346.8 1218.1L2337.7 1224.7L2328.8 1232.2L2320.2 1240.6L2312.0 1249.8L2304.1 1259.7L2296.8 1270.2L2290.0 1281.2L2283.8 1292.8L2278.2 1304.7L2273.3 1316.9L2269.2 1329.4L2265.7 1341.9L2263.1 1354.4L2261.2 1366.9L2260.2 1379.2L2260.0 1391.2L2260.5 1402.8L2261.9 1414.0L2264.1 1424.7L2267.1 1434.7L2270.9 1444.0L2275.4 1452.6L2280.6 1460.4L2286.4 1467.2L2292.9 1473.1L2299.9 1478.0L2307.5 1481.9Z" fill="url(#bF)" stroke="#111" stroke-width="1.300"  stroke-linejoin="round"/>
<path d="M2346.8 1391.1L2349.6 1392.1L2352.5 1392.7L2355.5 1392.9L2358.6 1392.8L2361.7 1392.2L2364.9 1391.3L2368.2 1390.1L2371.4 1388.5L2374.6 1386.5L2377.7 1384.2L2380.8 1381.6L2383.7 1378.8L2386.6 1375.6L2389.3 1372.2L2391.8 1368.6L2394.1 1364.8L2396.3 1360.8L2398.2 1356.7L2399.9 1352.5L2401.3 1348.2L2402.5 1343.9L2403.4 1339.6L2404.1 1335.3L2404.4 1331.0L2404.5 1326.9L2404.3 1322.9L2403.8 1319.0L2403.1 1315.4L2402.0 1311.9L2400.7 1308.7L2399.2 1305.7L2397.4 1303.1L2395.4 1300.7L2393.2 1298.7L2390.7 1297.0L2388.1 1295.7L2385.4 1294.7L2382.5 1294.1L2379.5 1293.8L2376.4 1294.0L2373.2 1294.5L2370.0 1295.4L2366.8 1296.6L2363.5 1298.3L2360.4 1300.2L2357.2 1302.5L2354.2 1305.1L2351.2 1308.0L2348.4 1311.1L2345.7 1314.5L2343.1 1318.2L2340.8 1322.0L2338.7 1326.0L2336.7 1330.1L2335.1 1334.3L2333.6 1338.5L2332.4 1342.9L2331.5 1347.2L2330.9 1351.5L2330.5 1355.7L2330.4 1359.8L2330.6 1363.8L2331.1 1367.7L2331.9 1371.4L2332.9 1374.8L2334.2 1378.0L2335.8 1381.0L2337.5 1383.7L2339.6 1386.0L2341.8 1388.1L2344.2 1389.7L2346.8 1391.1Z" fill="url(#bH)" stroke="#111" stroke-width="1.300"  stroke-linejoin="round"/>
</g>
<path d="M2380.0 1513.3L2388.0 1516.2L2396.4 1517.9L2405.1 1518.6L2414.1 1518.2L2423.3 1516.7L2432.6 1514.1L2442.0 1510.4L2451.3 1505.8L2460.6 1500.1L2469.7 1493.4L2478.6 1485.9L2487.2 1477.5L2495.5 1468.4L2503.3 1458.5L2510.6 1448.0L2517.4 1436.9L2523.6 1425.3L2529.2 1413.4L2534.1 1401.2L2538.3 1388.8L2541.7 1376.2L2544.3 1363.7L2546.2 1351.2L2547.2 1339.0L2547.5 1326.9L2546.9 1315.3L2545.5 1304.1L2543.3 1293.5L2540.3 1283.4L2536.6 1274.1L2532.1 1265.5L2526.9 1257.8L2521.0 1250.9L2514.6 1245.0L2507.5 1240.1L2500.0 1236.2L2492.0 1233.4L2483.6 1231.6L2474.8 1230.9L2465.8 1231.3L2456.6 1232.9L2447.3 1235.4L2437.9 1239.1L2428.6 1243.8L2419.3 1249.5L2410.2 1256.1L2401.3 1263.6L2392.7 1272.0L2384.5 1281.2L2376.6 1291.1L2369.3 1301.6L2362.5 1312.6L2356.3 1324.2L2350.7 1336.1L2345.8 1348.3L2341.7 1360.8L2338.2 1373.3L2335.6 1385.8L2333.7 1398.3L2332.7 1410.6L2332.4 1422.6L2333.0 1434.2L2334.4 1445.4L2336.6 1456.1L2339.6 1466.1L2343.4 1475.4L2347.9 1484.0L2353.1 1491.8L2358.9 1498.6L2365.4 1504.5L2372.4 1509.4L2380.0 1513.3Z" stroke="#111" stroke-width="1.300" fill="none" stroke-linejoin="round"/>
<path d="M2381.0 1519.8L2389.3 1522.7L2398.0 1524.5L2407.0 1525.2L2416.4 1524.8L2425.9 1523.2L2435.6 1520.6L2445.3 1516.8L2455.0 1511.9L2464.6 1506.0L2474.0 1499.2L2483.3 1491.3L2492.2 1482.7L2500.7 1473.2L2508.8 1462.9L2516.4 1452.0L2523.5 1440.5L2529.9 1428.6L2535.7 1416.2L2540.7 1403.5L2545.1 1390.7L2548.6 1377.7L2551.4 1364.7L2553.3 1351.8L2554.4 1339.0L2554.6 1326.6L2554.0 1314.5L2552.6 1302.9L2550.3 1291.9L2547.2 1281.5L2543.3 1271.8L2538.6 1262.9L2533.3 1254.9L2527.2 1247.8L2520.5 1241.7L2513.2 1236.6L2505.4 1232.5L2497.1 1229.6L2488.4 1227.8L2479.3 1227.1L2470.0 1227.5L2460.5 1229.1L2450.8 1231.8L2441.1 1235.5L2431.4 1240.4L2421.8 1246.3L2412.3 1253.2L2403.1 1261.0L2394.2 1269.7L2385.6 1279.2L2377.5 1289.4L2369.9 1300.3L2362.9 1311.8L2356.5 1323.7L2350.7 1336.1L2345.6 1348.8L2341.3 1361.6L2337.7 1374.6L2335.0 1387.6L2333.1 1400.5L2332.0 1413.3L2331.7 1425.7L2332.3 1437.8L2333.8 1449.4L2336.1 1460.4L2339.2 1470.8L2343.1 1480.5L2347.7 1489.4L2353.1 1497.4L2359.2 1504.5L2365.9 1510.6L2373.2 1515.7L2381.0 1519.8Z" stroke="#111" stroke-width="1.300" fill="none" stroke-linejoin="round" stroke-opacity=".85"/>
<path d="M2367.5 1343.4L2543 1419.4" stroke="#b83030" stroke-width="1.300"/>
<path d="M2543 1419.4L3842 1982.0" stroke="#f28c8c" stroke-width="1.200"/>
<path d="M1415 1437.2L1867 1241.4" stroke="#4a4ac4" stroke-width="1.200"/>
<clipPath id="lowc"><path d="M1100.0 1345.0L1570.0 1141.5L1618.0 1160.0L1837.0 1254.0L2278.3 1542.7L2650.0 1590.0L2650.0 1720.0L1100.0 1720.0Z"/></clipPath>
<clipPath id="mdl"><path d="M1828.5 463.5L1860.0 478.5C1864.3 481.1 1877.5 488.1 1886.0 494.0C1894.5 499.9 1903.0 506.7 1911.0 514.0C1919.0 521.3 1926.8 529.5 1934.0 538.0C1941.2 546.5 1948.0 555.7 1954.0 565.0C1960.0 574.3 1965.0 584.0 1970.0 594.0C1975.0 604.0 1980.0 614.8 1984.0 625.0C1988.0 635.2 1991.2 645.0 1994.0 655.0C1996.8 665.0 1999.0 674.7 2001.0 684.7C2003.0 694.7 2004.7 704.9 2006.0 715.0C2007.3 725.1 2008.2 740.3 2008.6 745.4C2007.0 747.8 2002.4 755.2 1999.0 760.0C1995.6 764.8 1991.7 769.2 1988.0 774.0C1984.3 778.8 1980.5 784.0 1977.0 789.0C1973.5 794.0 1970.1 798.3 1966.8 804.0C1963.5 809.7 1959.8 816.5 1957.0 823.0C1954.2 829.5 1951.7 836.5 1949.7 842.7C1947.7 848.9 1946.1 855.0 1945.0 860.0C1943.9 865.0 1943.2 868.0 1943.0 873.0C1942.8 878.0 1943.8 887.2 1944.0 890.0L1800.0 1100.0L1752.5 1350.0C1751.8 1352.5 1749.2 1360.0 1748.0 1365.0C1746.8 1370.0 1746.0 1374.7 1745.0 1380.0C1744.0 1385.3 1742.8 1391.2 1742.0 1397.0C1741.2 1402.8 1740.5 1409.5 1740.0 1415.0C1739.5 1420.5 1739.2 1424.6 1739.0 1430.0C1738.8 1435.4 1739.0 1444.6 1739.0 1447.5C1732.5 1452.1 1714.8 1464.6 1700.0 1475.0C1685.2 1485.4 1664.7 1500.8 1650.0 1510.0C1635.3 1519.2 1624.5 1523.8 1612.0 1530.0C1599.5 1536.2 1587.0 1542.5 1575.0 1547.5C1563.0 1552.5 1552.5 1556.2 1540.0 1560.0C1527.5 1563.8 1511.7 1567.7 1500.0 1570.0C1488.3 1572.3 1480.2 1573.3 1470.0 1574.0C1459.8 1574.7 1444.2 1574.0 1439.0 1574.0L1406.0 1559.0C1406.7 1550.8 1408.5 1528.2 1410.0 1510.0C1411.5 1491.8 1413.8 1470.0 1415.0 1450.0C1416.2 1430.0 1417.9 1410.8 1417.5 1390.0C1417.1 1369.2 1415.4 1345.8 1412.5 1325.0C1409.6 1304.2 1406.2 1284.2 1400.0 1265.0C1393.8 1245.8 1385.0 1226.7 1375.0 1210.0C1365.0 1193.3 1354.2 1179.3 1340.0 1165.0C1325.8 1150.7 1298.3 1130.8 1290.0 1124.0L1285.0 1122.0C1280.0 1120.7 1265.0 1116.4 1255.0 1114.0C1245.0 1111.6 1234.2 1109.5 1225.0 1107.5C1215.8 1105.5 1208.2 1103.8 1200.0 1102.0C1191.8 1100.2 1179.6 1097.8 1175.5 1097.0L1144.0 1081.0C1145.5 1070.0 1149.5 1036.0 1153.0 1015.0C1156.5 994.0 1160.3 973.3 1165.0 955.0C1169.7 936.7 1175.2 921.7 1181.0 905.0C1186.8 888.3 1192.8 871.5 1200.0 855.0C1207.2 838.5 1215.7 821.8 1224.0 806.0C1232.3 790.2 1242.0 773.8 1250.0 760.0C1258.0 746.2 1264.2 735.0 1272.0 723.0C1279.8 711.0 1292.4 693.8 1296.5 688.0L1327.5 702.0C1331.2 704.3 1342.1 711.5 1350.0 716.0C1357.9 720.5 1370.8 726.8 1375.0 729.0C1381.2 730.3 1400.0 735.7 1412.5 737.0C1425.0 738.3 1435.4 737.9 1450.0 736.7C1464.6 735.5 1483.3 733.5 1500.0 730.0C1516.7 726.5 1533.3 721.8 1550.0 716.0C1566.7 710.2 1583.3 703.5 1600.0 695.0C1616.7 686.5 1633.3 676.7 1650.0 665.0C1666.7 653.3 1684.2 640.0 1700.0 625.0C1715.8 610.0 1730.0 592.5 1745.0 575.0C1760.0 557.5 1776.1 538.6 1790.0 520.0C1803.9 501.4 1822.1 472.9 1828.5 463.5Z M1669.0 1348.2L1684.0 1353.5L1699.7 1356.8L1716.0 1358.0L1732.8 1357.3L1750.0 1354.4L1767.4 1349.6L1784.9 1342.8L1802.4 1334.0L1819.7 1323.4L1836.7 1311.0L1853.3 1297.0L1869.4 1281.3L1884.8 1264.2L1899.4 1245.7L1913.1 1226.1L1925.8 1205.4L1937.4 1183.9L1947.8 1161.6L1956.9 1138.8L1964.7 1115.6L1971.1 1092.2L1976.0 1068.7L1979.5 1045.5L1981.5 1022.5L1981.9 1000.1L1980.8 978.4L1978.2 957.5L1974.1 937.6L1968.5 918.8L1961.5 901.4L1953.1 885.4L1943.4 870.9L1932.5 858.1L1920.4 847.1L1907.3 837.9L1893.2 830.6L1878.2 825.3L1862.5 822.0L1846.2 820.8L1829.4 821.6L1812.2 824.4L1794.8 829.2L1777.3 836.0L1759.8 844.8L1742.5 855.4L1725.5 867.8L1708.9 881.9L1692.8 897.5L1677.4 914.6L1662.8 933.1L1649.1 952.7L1636.4 973.4L1624.9 995.0L1614.5 1017.2L1605.3 1040.1L1597.5 1063.3L1591.1 1086.7L1586.2 1110.1L1582.7 1133.4L1580.7 1156.3L1580.3 1178.7L1581.4 1200.5L1584.0 1221.4L1588.1 1241.2L1593.7 1260.0L1600.7 1277.4L1609.1 1293.4L1618.8 1307.9L1629.7 1320.7L1641.8 1331.7L1654.9 1340.9L1669.0 1348.2ZM1872.5 878.4L1863.4 875.0L1854.0 872.5L1844.2 870.9L1834.2 870.3L1824.0 870.6L1813.5 871.9L1803.0 874.1L1792.3 877.2L1781.6 881.2L1770.9 886.1L1760.2 891.9L1749.6 898.5L1739.2 906.0L1728.9 914.2L1718.9 923.2L1709.1 932.9L1699.6 943.3L1690.5 954.3L1681.8 965.8L1673.5 977.9L1665.6 990.5L1658.3 1003.5L1651.5 1016.9L1645.2 1030.5L1639.5 1044.5L1634.4 1058.6L1630.0 1072.8L1626.2 1087.2L1623.0 1101.5L1620.5 1115.8L1618.8 1130.0L1617.7 1144.0L1617.3 1157.7L1617.6 1171.2L1618.6 1184.3L1620.4 1197.0L1622.8 1209.3L1625.8 1221.0L1629.6 1232.2L1634.0 1242.8L1639.0 1252.7L1644.6 1261.9L1650.9 1270.3L1657.6 1278.0L1664.9 1284.9L1672.7 1291.0L1681.0 1296.2L1689.7 1300.5L2316.4 1571.9L2499.3 1149.8ZM2215.6 1417.8L2216.0 1403.1L2217.2 1388.2L2219.1 1373.0L2221.9 1357.8L2225.4 1342.5L2229.7 1327.2L2234.7 1312.0L2240.4 1297.1L2246.8 1282.3L2253.8 1267.9L2261.4 1253.9L2269.6 1240.4L2278.4 1227.3L2287.6 1214.9L2297.3 1203.1L2307.4 1192.0L2317.8 1181.7L2328.6 1172.2L2339.6 1163.6L2350.7 1155.8L2362.1 1149.0L2373.5 1143.2L2384.9 1138.4L2396.3 1134.5L2407.6 1131.8L2418.8 1130.1L2429.8 1129.4L2440.6 1129.8L2451.0 1131.3L2461.1 1133.9L2470.8 1137.5L2485.5 1143.8L2494.8 1148.5L2500.4 1151.7L2509.2 1157.3L2517.4 1163.9L2522.2 1168.1L2529.8 1175.6L2536.8 1183.9L2540.6 1189.0L2546.8 1198.0L2552.4 1207.9L2557.3 1218.6L2559.7 1223.8L2563.8 1235.0L2567.2 1246.7L2569.8 1259.0L2570.8 1263.9L2572.7 1276.4L2573.8 1289.4L2574.2 1302.7L2573.8 1316.3L2572.7 1330.2L2572.4 1333.3L2570.7 1346.9L2568.2 1360.6L2565.0 1374.4L2561.2 1388.1L2556.7 1401.8L2551.6 1415.2L2545.8 1428.5L2539.5 1441.4L2532.6 1454.0L2525.2 1466.2L2517.4 1478.0L2509.1 1489.2L2500.4 1499.8L2498.3 1502.1L2488.9 1512.4L2479.2 1522.0L2469.2 1530.8L2459.0 1538.8L2448.6 1546.0L2444.4 1548.7L2433.6 1555.2L2422.7 1560.7L2411.8 1565.3L2406.3 1567.2L2395.2 1570.9L2384.2 1573.6L2373.3 1575.2L2367.0 1575.9L2356.1 1576.6L2345.5 1576.2L2339.1 1575.5L2328.7 1574.0L2318.6 1571.5L2312.4 1569.5L2302.7 1566.0L2288.0 1559.6L2278.7 1555.0L2270.0 1549.3L2261.7 1542.7L2254.1 1535.2L2247.0 1526.7L2240.6 1517.4L2234.9 1507.2L2229.8 1496.3L2225.6 1484.7L2222.0 1472.4L2219.2 1459.5L2217.2 1446.0L2216.0 1432.1Z"/></clipPath>
<g clip-path="url(#lowc)"><g clip-path="url(#mdl)" fill="none" stroke="#000"><path d="M1100 -179.68L2650 491.64M1100 -170.13L2650 501.19M1100 -151.03L2650 520.29M1100 -141.48L2650 529.84M1100 -131.93L2650 539.39M1100 -122.38L2650 548.94M1100 -103.28L2650 568.04M1100 -93.73L2650 577.59M1100 -84.18L2650 587.14M1100 -74.63L2650 596.69M1100 -55.53L2650 615.79M1100 -45.98L2650 625.34M1100 -36.43L2650 634.89M1100 -26.88L2650 644.44M1100 -7.78L2650 663.54M1100 1.77L2650 673.09M1100 11.32L2650 682.64M1100 20.87L2650 692.19M1100 39.97L2650 711.29M1100 49.52L2650 720.84M1100 59.07L2650 730.39M1100 68.62L2650 739.94M1100 87.72L2650 759.04M1100 97.27L2650 768.59M1100 106.82L2650 778.14M1100 116.37L2650 787.69M1100 135.47L2650 806.79M1100 145.02L2650 816.34M1100 154.57L2650 825.89M1100 164.12L2650 835.44M1100 183.22L2650 854.54M1100 192.77L2650 864.09M1100 202.32L2650 873.64M1100 211.87L2650 883.19M1100 230.97L2650 902.29M1100 240.52L2650 911.84M1100 250.07L2650 921.39M1100 259.62L2650 930.94M1100 278.72L2650 950.04M1100 288.27L2650 959.59M1100 297.82L2650 969.14M1100 307.37L2650 978.69M1100 326.47L2650 997.79M1100 336.02L2650 1007.34M1100 345.57L2650 1016.89M1100 355.12L2650 1026.44M1100 374.22L2650 1045.54M1100 383.77L2650 1055.09M1100 393.32L2650 1064.64M1100 402.87L2650 1074.19M1100 421.97L2650 1093.29M1100 431.52L2650 1102.84M1100 441.07L2650 1112.39M1100 450.62L2650 1121.94M1100 469.72L2650 1141.04M1100 479.27L2650 1150.59M1100 488.82L2650 1160.14M1100 498.37L2650 1169.69M1100 517.47L2650 1188.79M1100 527.02L2650 1198.34M1100 536.57L2650 1207.89M1100 546.12L2650 1217.44M1100 565.22L2650 1236.54M1100 574.77L2650 1246.09M1100 584.32L2650 1255.64M1100 593.87L2650 1265.19M1100 612.97L2650 1284.29M1100 622.52L2650 1293.84M1100 632.07L2650 1303.39M1100 641.62L2650 1312.94M1100 660.72L2650 1332.04M1100 670.27L2650 1341.59M1100 679.82L2650 1351.14M1100 689.37L2650 1360.69M1100 708.47L2650 1379.79M1100 718.02L2650 1389.34M1100 727.57L2650 1398.89M1100 737.12L2650 1408.44M1100 756.22L2650 1427.54M1100 765.77L2650 1437.09M1100 775.32L2650 1446.64M1100 784.87L2650 1456.19M1100 803.97L2650 1475.29M1100 813.52L2650 1484.84M1100 823.07L2650 1494.39M1100 832.62L2650 1503.94M1100 851.72L2650 1523.04M1100 861.27L2650 1532.59M1100 870.82L2650 1542.14M1100 880.37L2650 1551.69M1100 899.47L2650 1570.79M1100 909.02L2650 1580.34M1100 918.57L2650 1589.89M1100 928.12L2650 1599.44M1100 947.22L2650 1618.54M1100 956.77L2650 1628.09M1100 966.32L2650 1637.64M1100 975.87L2650 1647.19M1100 994.97L2650 1666.29M1100 1004.52L2650 1675.84M1100 1014.07L2650 1685.39M1100 1023.62L2650 1694.94M1100 1042.72L2650 1714.04M1100 1052.27L2650 1723.59M1100 1061.82L2650 1733.14M1100 1071.37L2650 1742.69M1100 1090.47L2650 1761.79M1100 1100.02L2650 1771.34M1100 1109.57L2650 1780.89M1100 1119.12L2650 1790.44M1100 1138.22L2650 1809.54M1100 1147.77L2650 1819.09M1100 1157.32L2650 1828.64M1100 1166.87L2650 1838.19M1100 1185.97L2650 1857.29M1100 1195.52L2650 1866.84M1100 1205.07L2650 1876.39M1100 1214.62L2650 1885.94M1100 1233.72L2650 1905.04M1100 1243.27L2650 1914.59M1100 1252.82L2650 1924.14M1100 1262.37L2650 1933.69M1100 1281.47L2650 1952.79M1100 1291.02L2650 1962.34M1100 1300.57L2650 1971.89M1100 1310.12L2650 1981.44M1100 1329.22L2650 2000.54M1100 1338.77L2650 2010.09M1100 1348.32L2650 2019.64M1100 1357.87L2650 2029.19M1100 1376.97L2650 2048.29M1100 1386.52L2650 2057.84M1100 1396.07L2650 2067.39M1100 1405.62L2650 2076.94M1100 1424.72L2650 2096.04M1100 1434.27L2650 2105.59M1100 1443.82L2650 2115.14M1100 1453.37L2650 2124.69M1100 1472.47L2650 2143.79M1100 1482.02L2650 2153.34M1100 1491.57L2650 2162.89M1100 1501.12L2650 2172.44M1100 1520.22L2650 2191.54M1100 1529.77L2650 2201.09M1100 1539.32L2650 2210.64M1100 1548.87L2650 2220.19M1100 1567.97L2650 2239.29M1100 1577.52L2650 2248.84M1100 1587.07L2650 2258.39M1100 1596.62L2650 2267.94M1100 1615.72L2650 2287.04M1100 1625.27L2650 2296.59M1100 1634.82L2650 2306.14M1100 1644.37L2650 2315.69M1100 1663.47L2650 2334.79M1100 1673.02L2650 2344.34M1100 1682.57L2650 2353.89M1100 1692.12L2650 2363.44M1100 1711.22L2650 2382.54M1100 1720.77L2650 2392.09M1100 1730.32L2650 2401.64M1100 1739.87L2650 2411.19M1100 1758.97L2650 2430.29M1100 1768.52L2650 2439.84M1100 1778.07L2650 2449.39M1100 1787.62L2650 2458.94M1100 1806.72L2650 2478.04M1100 1816.27L2650 2487.59M1100 1825.82L2650 2497.14M1100 1835.37L2650 2506.69M1100 1854.47L2650 2525.79M1100 1864.02L2650 2535.34M1100 1873.57L2650 2544.89M1100 1883.12L2650 2554.44M1100 1902.22L2650 2573.54M1100 1911.77L2650 2583.09M1100 1921.32L2650 2592.64M1100 1930.87L2650 2602.19M1100 1949.97L2650 2621.29M1100 1959.52L2650 2630.84M1100 1969.07L2650 2640.39M1100 1978.62L2650 2649.94M1100 1997.72L2650 2669.04M1100 2007.27L2650 2678.59M1100 2016.82L2650 2688.14M1100 2026.37L2650 2697.69M1100 2045.47L2650 2716.79M1100 2055.02L2650 2726.34M1100 2064.57L2650 2735.89M1100 2074.12L2650 2745.44M1100 2093.22L2650 2764.54M1100 2102.77L2650 2774.09M1100 2112.32L2650 2783.64M1100 2121.87L2650 2793.19M1100 2140.97L2650 2812.29M1100 2150.52L2650 2821.84M1100 2160.07L2650 2831.39M1100 2169.62L2650 2840.94M1100 532.63L2650 -138.69M1100 542.18L2650 -129.14M1100 551.73L2650 -119.59M1100 561.28L2650 -110.04M1100 580.38L2650 -90.94M1100 589.93L2650 -81.39M1100 599.48L2650 -71.84M1100 609.03L2650 -62.29M1100 628.13L2650 -43.19M1100 637.68L2650 -33.64M1100 647.23L2650 -24.09M1100 656.78L2650 -14.54M1100 675.88L2650 4.56M1100 685.43L2650 14.11M1100 694.98L2650 23.66M1100 704.53L2650 33.21M1100 723.63L2650 52.31M1100 733.18L2650 61.86M1100 742.73L2650 71.41M1100 752.28L2650 80.96M1100 771.38L2650 100.06M1100 780.93L2650 109.61M1100 790.48L2650 119.16M1100 800.03L2650 128.71M1100 819.13L2650 147.81M1100 828.68L2650 157.36M1100 838.23L2650 166.91M1100 847.78L2650 176.46M1100 866.88L2650 195.56M1100 876.43L2650 205.11M1100 885.98L2650 214.66M1100 895.53L2650 224.21M1100 914.63L2650 243.31M1100 924.18L2650 252.86M1100 933.73L2650 262.41M1100 943.28L2650 271.96M1100 962.38L2650 291.06M1100 971.93L2650 300.61M1100 981.48L2650 310.16M1100 991.03L2650 319.71M1100 1010.13L2650 338.81M1100 1019.68L2650 348.36M1100 1029.23L2650 357.91M1100 1038.78L2650 367.46M1100 1057.88L2650 386.56M1100 1067.43L2650 396.11M1100 1076.98L2650 405.66M1100 1086.53L2650 415.21M1100 1105.63L2650 434.31M1100 1115.18L2650 443.86M1100 1124.73L2650 453.41M1100 1134.28L2650 462.96M1100 1153.38L2650 482.06M1100 1162.93L2650 491.61M1100 1172.48L2650 501.16M1100 1182.03L2650 510.71M1100 1201.13L2650 529.81M1100 1210.68L2650 539.36M1100 1220.23L2650 548.91M1100 1229.78L2650 558.46M1100 1248.88L2650 577.56M1100 1258.43L2650 587.11M1100 1267.98L2650 596.66M1100 1277.53L2650 606.21M1100 1296.63L2650 625.31M1100 1306.18L2650 634.86M1100 1315.73L2650 644.41M1100 1325.28L2650 653.96M1100 1344.38L2650 673.06M1100 1353.93L2650 682.61M1100 1363.48L2650 692.16M1100 1373.03L2650 701.71M1100 1392.13L2650 720.81M1100 1401.68L2650 730.36M1100 1411.23L2650 739.91M1100 1420.78L2650 749.46M1100 1439.88L2650 768.56M1100 1449.43L2650 778.11M1100 1458.98L2650 787.66M1100 1468.53L2650 797.21M1100 1487.63L2650 816.31M1100 1497.18L2650 825.86M1100 1506.73L2650 835.41M1100 1516.28L2650 844.96M1100 1535.38L2650 864.06M1100 1544.93L2650 873.61M1100 1554.48L2650 883.16M1100 1564.03L2650 892.71M1100 1583.13L2650 911.81M1100 1592.68L2650 921.36M1100 1602.23L2650 930.91M1100 1611.78L2650 940.46M1100 1630.88L2650 959.56M1100 1640.43L2650 969.11M1100 1649.98L2650 978.66M1100 1659.53L2650 988.21M1100 1678.63L2650 1007.31M1100 1688.18L2650 1016.86M1100 1697.73L2650 1026.41M1100 1707.28L2650 1035.96M1100 1726.38L2650 1055.06M1100 1735.93L2650 1064.61M1100 1745.48L2650 1074.16M1100 1755.03L2650 1083.71M1100 1774.13L2650 1102.81M1100 1783.68L2650 1112.36M1100 1793.23L2650 1121.91M1100 1802.78L2650 1131.46M1100 1821.88L2650 1150.56M1100 1831.43L2650 1160.11M1100 1840.98L2650 1169.66M1100 1850.53L2650 1179.21M1100 1869.63L2650 1198.31M1100 1879.18L2650 1207.86M1100 1888.73L2650 1217.41M1100 1898.28L2650 1226.96M1100 1917.38L2650 1246.06M1100 1926.93L2650 1255.61M1100 1936.48L2650 1265.16M1100 1946.03L2650 1274.71M1100 1965.13L2650 1293.81M1100 1974.68L2650 1303.36M1100 1984.23L2650 1312.91M1100 1993.78L2650 1322.46M1100 2012.88L2650 1341.56M1100 2022.43L2650 1351.11M1100 2031.98L2650 1360.66M1100 2041.53L2650 1370.21M1100 2060.63L2650 1389.31M1100 2070.18L2650 1398.86M1100 2079.73L2650 1408.41M1100 2089.28L2650 1417.96M1100 2108.38L2650 1437.06M1100 2117.93L2650 1446.61M1100 2127.48L2650 1456.16M1100 2137.03L2650 1465.71M1100 2156.13L2650 1484.81M1100 2165.68L2650 1494.36M1100 2175.23L2650 1503.91M1100 2184.78L2650 1513.46M1100 2203.88L2650 1532.56M1100 2213.43L2650 1542.11M1100 2222.98L2650 1551.66M1100 2232.53L2650 1561.21M1100 2251.63L2650 1580.31M1100 2261.18L2650 1589.86M1100 2270.73L2650 1599.41M1100 2280.28L2650 1608.96M1100 2299.38L2650 1628.06M1100 2308.93L2650 1637.61M1100 2318.48L2650 1647.16M1100 2328.03L2650 1656.71M1100 2347.13L2650 1675.81M1100 2356.68L2650 1685.36M1100 2366.23L2650 1694.91M1100 2375.78L2650 1704.46M1100 2394.88L2650 1723.56M1100 2404.43L2650 1733.11M1100 2413.98L2650 1742.66M1100 2423.53L2650 1752.21M1100 2442.63L2650 1771.31M1100 2452.18L2650 1780.86M1100 2461.73L2650 1790.41M1100 2471.28L2650 1799.96M1100 2490.38L2650 1819.06M1100 2499.93L2650 1828.61M1100 2509.48L2650 1838.16M1100 2519.03L2650 1847.71M1100 2538.13L2650 1866.81M1100 2547.68L2650 1876.36M1100 2557.23L2650 1885.91M1100 2566.78L2650 1895.46M1100 2585.88L2650 1914.56M1100 2595.43L2650 1924.11M1100 2604.98L2650 1933.66M1100 2614.53L2650 1943.21M1100 2633.63L2650 1962.31M1100 2643.18L2650 1971.86M1100 2652.73L2650 1981.41M1100 2662.28L2650 1990.96M1100 2681.38L2650 2010.06M1100 2690.93L2650 2019.61M1100 2700.48L2650 2029.16M1100 2710.03L2650 2038.71M1100 2729.13L2650 2057.81M1100 2738.68L2650 2067.36M1100 2748.23L2650 2076.91M1100 2757.78L2650 2086.46M1100 2776.88L2650 2105.56M1100 2786.43L2650 2115.11M1100 2795.98L2650 2124.66M1100 2805.53L2650 2134.21M1100 2824.63L2650 2153.31M1100 2834.18L2650 2162.86M1100 2843.73L2650 2172.41M1100 2853.28L2650 2181.96M1100 2872.38L2650 2201.06M1100 2881.93L2650 2210.61" stroke-opacity=".07" stroke-width="1"/><path d="M1100 -160.58L2650 510.74M1100 -112.83L2650 558.49M1100 -65.08L2650 606.24M1100 -17.33L2650 653.99M1100 30.42L2650 701.74M1100 78.17L2650 749.49M1100 125.92L2650 797.24M1100 173.67L2650 844.99M1100 221.42L2650 892.74M1100 269.17L2650 940.49M1100 316.92L2650 988.24M1100 364.67L2650 1035.99M1100 412.42L2650 1083.74M1100 460.17L2650 1131.49M1100 507.92L2650 1179.24M1100 555.67L2650 1226.99M1100 603.42L2650 1274.74M1100 651.17L2650 1322.49M1100 698.92L2650 1370.24M1100 746.67L2650 1417.99M1100 794.42L2650 1465.74M1100 842.17L2650 1513.49M1100 889.92L2650 1561.24M1100 937.67L2650 1608.99M1100 985.42L2650 1656.74M1100 1033.17L2650 1704.49M1100 1080.92L2650 1752.24M1100 1128.67L2650 1799.99M1100 1176.42L2650 1847.74M1100 1224.17L2650 1895.49M1100 1271.92L2650 1943.24M1100 1319.67L2650 1990.99M1100 1367.42L2650 2038.74M1100 1415.17L2650 2086.49M1100 1462.92L2650 2134.24M1100 1510.67L2650 2181.99M1100 1558.42L2650 2229.74M1100 1606.17L2650 2277.49M1100 1653.92L2650 2325.24M1100 1701.67L2650 2372.99M1100 1749.42L2650 2420.74M1100 1797.17L2650 2468.49M1100 1844.92L2650 2516.24M1100 1892.67L2650 2563.99M1100 1940.42L2650 2611.74M1100 1988.17L2650 2659.49M1100 2035.92L2650 2707.24M1100 2083.67L2650 2754.99M1100 2131.42L2650 2802.74M1100 570.83L2650 -100.49M1100 618.58L2650 -52.74M1100 666.33L2650 -4.99M1100 714.08L2650 42.76M1100 761.83L2650 90.51M1100 809.58L2650 138.26M1100 857.33L2650 186.01M1100 905.08L2650 233.76M1100 952.83L2650 281.51M1100 1000.58L2650 329.26M1100 1048.33L2650 377.01M1100 1096.08L2650 424.76M1100 1143.83L2650 472.51M1100 1191.58L2650 520.26M1100 1239.33L2650 568.01M1100 1287.08L2650 615.76M1100 1334.83L2650 663.51M1100 1382.58L2650 711.26M1100 1430.33L2650 759.01M1100 1478.08L2650 806.76M1100 1525.83L2650 854.51M1100 1573.58L2650 902.26M1100 1621.33L2650 950.01M1100 1669.08L2650 997.76M1100 1716.83L2650 1045.51M1100 1764.58L2650 1093.26M1100 1812.33L2650 1141.01M1100 1860.08L2650 1188.76M1100 1907.83L2650 1236.51M1100 1955.58L2650 1284.26M1100 2003.33L2650 1332.01M1100 2051.08L2650 1379.76M1100 2098.83L2650 1427.51M1100 2146.58L2650 1475.26M1100 2194.33L2650 1523.01M1100 2242.08L2650 1570.76M1100 2289.83L2650 1618.51M1100 2337.58L2650 1666.26M1100 2385.33L2650 1714.01M1100 2433.08L2650 1761.76M1100 2480.83L2650 1809.51M1100 2528.58L2650 1857.26M1100 2576.33L2650 1905.01M1100 2624.08L2650 1952.76M1100 2671.83L2650 2000.51M1100 2719.58L2650 2048.26M1100 2767.33L2650 2096.01M1100 2815.08L2650 2143.76M1100 2862.83L2650 2191.51" stroke-opacity=".2" stroke-width="1.100"/></g></g>
</g>
<ellipse cx="3781" cy="322" rx="34" ry="10" fill="#000" opacity=".06"/>
<path d="M3778 252.300l34.900 10.700-34.900 13-33.700-13z" fill="#f2f2f2" opacity=".8"/>
<path d="M3744.300 263l33.700 13v46l-32-15z" fill="#e9e9e9" opacity=".8"/>
<path d="M3778 276l34.900-13-2.300 42.600-32.600 16.400z" fill="#e2e2e2" opacity=".8"/>
<path d="M3778 252.300l34.900 10.700-34.900 13-33.700-13zM3744.300 263l1.700 44 32 15 32.600-16.400 2.300-42.600M3778 276v46" fill="none" stroke="#9a9a9a" stroke-width="1" stroke-dasharray="5 2"/>
<text x="0.0" y="0.0" font-size="21.0" fill="#8c8c8c" transform="matrix(1 .38 0 1 3751 297)">前</text>
<text x="0.0" y="0.0" font-size="21.0" fill="#8c8c8c" transform="matrix(1 -.38 0 1 3785 304)">右</text>
<text x="0.0" y="0.0" font-size="15.0" fill="#a0a0a0" transform="matrix(1 .3 -1 .35 3776 262)">上</text>
<path d="M3778.500 240v12" stroke="#6fdc6f" stroke-width="1.600"/><path d="M3743 306l-7 3" stroke="#5a5af0" stroke-width="1.800"/><path d="M3811 305l7 3" stroke="#f08080" stroke-width="1.800"/>
<text x="3778.5" y="241.0" font-size="13.0" fill="#6fdc6f" text-anchor="middle" >Y</text>
<text x="3734.5" y="316.0" font-size="13.0" fill="#6a6af0" text-anchor="middle" font-style="italic">Z</text>
<text x="3822.0" y="316.0" font-size="13.0" fill="#f08080" text-anchor="middle" >X</text>
<rect x="8.50" y="227.50" width="448.00" height="35.00" fill="#f2f2f2" stroke="#c4c4c4" stroke-width="1" />
<rect x="9.00" y="262.50" width="448.00" height="1.50" fill="#dadada" />
<path d="M23 239.500v11l-7.500-5.500zM31 239.500v11l-7.500-5.500z" fill="#333"/>
<text x="45.8" y="252.0" font-size="17.0" fill="#555" textLength="48.5" lengthAdjust="spacingAndGlyphs" >ブラウザ</text>
<circle cx="433" cy="245.500" r="7" fill="#2e2e2e"/><rect x="428.500" y="244.300" width="9" height="2.400" fill="#f2f2f2"/>
<rect x="61.50" y="272.50" width="288.50" height="29.50" fill="#f0f0f0" opacity=".93"/>
<path d="M45.500 282.500v8.500h-9.500z" fill="#444" stroke="#222" stroke-width="1" stroke-linejoin="round"/>
<path d="M66.5 287.0c6-10 17-10 23 0c-6 10-17 10-23 0z" fill="#9c9c9c"/><circle cx="78.0" cy="287.0" r="4.600" fill="#f0f0f0"/><circle cx="78.0" cy="287.0" r="2.400" fill="#9c9c9c"/>
<rect x="99.50" y="275.30" width="212.50" height="23.60" fill="#999999" />
<g transform="translate(104.5 276.5) scale(1)" ><path d="M0 2c0-1.500 1-2 2-2h6c1 0 2 .5 2 2v8h7c2 0 3 1 3 3v6c0 1.500-1 2-2 2h-16c-1 0-2-.5-2-2z" fill="#d6d9e0" stroke="#555" stroke-width="1.100"/><path d="M10 10v11" stroke="#555" stroke-width="1"/></g>
<text x="149.4" y="294.0" font-size="17.2" fill="#fff" textLength="144.0" lengthAdjust="spacingAndGlyphs" font-weight="bold" >spool holder 2 v27</text>
<circle cx="329" cy="286.500" r="9.500" fill="#dfe2ea" stroke="#555" stroke-width="1.200"/><circle cx="329" cy="286.500" r="4" fill="#333"/>
<path d="M64.0 316.8v12.500l8-6.250z" fill="#fff" stroke="#333" stroke-width="1.500" stroke-linejoin="round"/>
<rect x="89.40" y="308.00" width="31.60" height="30.00" fill="#f0f0f0" opacity=".93"/>
<rect x="122.20" y="308.00" width="143.20" height="30.00" fill="#f0f0f0" opacity=".93"/>
<g fill="#6a6a6a"><circle cx="103.8" cy="323.0" r="7.8"/><rect x="101.6" y="312.5" width="4.4" height="5.2" transform="rotate(0 103.8 323.0)"/><rect x="101.6" y="312.5" width="4.4" height="5.2" transform="rotate(45 103.8 323.0)"/><rect x="101.6" y="312.5" width="4.4" height="5.2" transform="rotate(90 103.8 323.0)"/><rect x="101.6" y="312.5" width="4.4" height="5.2" transform="rotate(135 103.8 323.0)"/><rect x="101.6" y="312.5" width="4.4" height="5.2" transform="rotate(180 103.8 323.0)"/><rect x="101.6" y="312.5" width="4.4" height="5.2" transform="rotate(225 103.8 323.0)"/><rect x="101.6" y="312.5" width="4.4" height="5.2" transform="rotate(270 103.8 323.0)"/><rect x="101.6" y="312.5" width="4.4" height="5.2" transform="rotate(315 103.8 323.0)"/></g><circle cx="103.8" cy="323.0" r="3.5" fill="#f0f0f0"/>
<text x="132.7" y="329.2" font-size="17.0" fill="#333" textLength="115.2" lengthAdjust="spacingAndGlyphs" >ドキュメントの設定</text>
<path d="M64.0 352.8v12.500l8-6.250z" fill="#fff" stroke="#333" stroke-width="1.500" stroke-linejoin="round"/>
<rect x="89.40" y="344.00" width="31.60" height="30.00" fill="#f0f0f0" opacity=".93"/>
<rect x="122.20" y="344.00" width="154.90" height="30.00" fill="#f0f0f0" opacity=".93"/>
<path d="M93.5 349.0h9.500l2 3h12.500v16h-24z" fill="#8c8c8c"/><path d="M93.5 354.2h24" stroke="#f0f0f0" stroke-width="1"/>
<text x="139.4" y="365.2" font-size="17.0" fill="#333" textLength="120.2" lengthAdjust="spacingAndGlyphs" >名前の付いたビュー</text>
<path d="M64.0 388.8v12.500l8-6.250z" fill="#fff" stroke="#333" stroke-width="1.500" stroke-linejoin="round"/>
<rect x="89.40" y="380.00" width="36.00" height="30.00" fill="#f0f0f0" opacity=".93"/>
<rect x="126.50" y="380.00" width="99.30" height="30.00" fill="#f0f0f0" opacity=".93"/>
<g fill="none" stroke="#9c9c9c" stroke-width="1.500"><path d="M94.0 395.0c6-9.500 17-9.500 23 0c-6 9.500-17 9.500-23 0z"/><circle cx="105.5" cy="395.0" r="4"/><path d="M98.0 388.0l15 14"/></g>
<path d="M131.0 385.0h9.500l2 3h12.500v16h-24z" fill="#8c8c8c"/><path d="M131.0 390.2h24" stroke="#f0f0f0" stroke-width="1"/>
<text x="176.3" y="401.2" font-size="17.0" fill="#333" textLength="32.0" lengthAdjust="spacingAndGlyphs" >原点</text>
<path d="M64.0 424.8v12.500l8-6.250z" fill="#fff" stroke="#333" stroke-width="1.500" stroke-linejoin="round"/>
<rect x="89.40" y="416.00" width="36.00" height="30.00" fill="#f0f0f0" opacity=".93"/>
<rect x="126.50" y="416.00" width="104.30" height="30.00" fill="#f0f0f0" opacity=".93"/>
<g fill="none" stroke="#9c9c9c" stroke-width="1.500"><path d="M94.0 431.0c6-9.500 17-9.500 23 0c-6 9.500-17 9.500-23 0z"/><circle cx="105.5" cy="431.0" r="4"/><path d="M98.0 424.0l15 14"/></g>
<path d="M131.0 421.0h9.500l2 3h12.500v16h-24z" fill="#8c8c8c"/><path d="M131.0 426.2h24" stroke="#f0f0f0" stroke-width="1"/>
<text x="176.3" y="437.2" font-size="17.0" fill="#333" textLength="37.0" lengthAdjust="spacingAndGlyphs" >ボディ</text>
<path d="M64.0 460.8v12.500l8-6.250z" fill="#fff" stroke="#333" stroke-width="1.500" stroke-linejoin="round"/>
<rect x="89.40" y="452.00" width="36.00" height="30.00" fill="#f0f0f0" opacity=".93"/>
<rect x="126.50" y="452.00" width="115.30" height="30.00" fill="#f0f0f0" opacity=".93"/>
<g fill="none" stroke="#9c9c9c" stroke-width="1.500"><path d="M94.0 467.0c6-9.500 17-9.500 23 0c-6 9.500-17 9.500-23 0z"/><circle cx="105.5" cy="467.0" r="4"/><path d="M98.0 460.0l15 14"/></g>
<path d="M131.0 457.0h9.500l2 3h12.500v16h-24z" fill="#8c8c8c"/><path d="M131.0 462.2h24" stroke="#f0f0f0" stroke-width="1"/>
<text x="176.3" y="473.2" font-size="17.0" fill="#333" textLength="48.0" lengthAdjust="spacingAndGlyphs" >スケッチ</text>
<path d="M64.0 496.8v12.500l8-6.250z" fill="#fff" stroke="#333" stroke-width="1.500" stroke-linejoin="round"/>
<rect x="89.40" y="488.00" width="36.00" height="30.00" fill="#f0f0f0" opacity=".93"/>
<rect x="126.50" y="488.00" width="173.60" height="30.00" fill="#f0f0f0" opacity=".93"/>
<path d="M94.0 503.0c6-10 17-10 23 0c-6 10-17 10-23 0z" fill="#9c9c9c"/><circle cx="105.5" cy="503.0" r="4.600" fill="#f0f0f0"/><circle cx="105.5" cy="503.0" r="2.400" fill="#9c9c9c"/>
<path d="M131.0 493.0h9.500l2 3h12.500v16h-24z" fill="#8c8c8c"/><path d="M131.0 498.2h24" stroke="#f0f0f0" stroke-width="1"/>
<text x="176.3" y="509.2" font-size="17.0" fill="#333" textLength="106.3" lengthAdjust="spacingAndGlyphs" >コンストラクション</text>
<path d="M64.0 532.8v12.500l8-6.250z" fill="#fff" stroke="#333" stroke-width="1.500" stroke-linejoin="round"/>
<rect x="89.40" y="524.00" width="36.00" height="30.00" fill="#f0f0f0" opacity=".93"/>
<rect x="126.50" y="524.00" width="128.30" height="30.00" fill="#f0f0f0" opacity=".93"/>
<g fill="none" stroke="#9c9c9c" stroke-width="1.500"><path d="M94.0 539.0c6-9.500 17-9.500 23 0c-6 9.500-17 9.500-23 0z"/><circle cx="105.5" cy="539.0" r="4"/><path d="M98.0 532.0l15 14"/></g>
<g transform="translate(132.8 528.5) scale(1)" ><path d="M0 5.500c0-2 1-3 3-3l13-2c2 0 3 1 3 3v12c0 1.500-1 2.500-2 3l-3 1.500h-11c-2 0-3-1-3-3z" fill="#b8bcc6" stroke="#6a6a6a" stroke-width="1.100"/><rect x=".6" y="4.600" width="14" height="14.800" rx="2.500" fill="#cfd3dc" stroke="#6a6a6a" stroke-width="1"/></g>
<text x="176.3" y="545.2" font-size="17.0" fill="#333" textLength="61.0" lengthAdjust="spacingAndGlyphs" >spool0:1</text>
<path d="M64.0 568.8v12.500l8-6.250z" fill="#fff" stroke="#333" stroke-width="1.500" stroke-linejoin="round"/>
<rect x="89.40" y="560.00" width="36.00" height="30.00" fill="#f0f0f0" opacity=".93"/>
<rect x="126.50" y="560.00" width="111.70" height="30.00" fill="#f0f0f0" opacity=".93"/>
<g fill="none" stroke="#9c9c9c" stroke-width="1.500"><path d="M94.0 575.0c6-9.500 17-9.500 23 0c-6 9.500-17 9.500-23 0z"/><circle cx="105.5" cy="575.0" r="4"/><path d="M98.0 568.0l15 14"/></g>
<g transform="translate(132.8 564.5) scale(1)" ><path d="M0 5.500c0-2 1-3 3-3l13-2c2 0 3 1 3 3v12c0 1.500-1 2.500-2 3l-3 1.500h-11c-2 0-3-1-3-3z" fill="#b8bcc6" stroke="#6a6a6a" stroke-width="1.100"/><rect x=".6" y="4.600" width="14" height="14.800" rx="2.500" fill="#cfd3dc" stroke="#6a6a6a" stroke-width="1"/></g>
<text x="176.3" y="581.2" font-size="17.0" fill="#333" textLength="44.4" lengthAdjust="spacingAndGlyphs" >right:1</text>
<path d="M64.0 604.8v12.500l8-6.250z" fill="#fff" stroke="#333" stroke-width="1.500" stroke-linejoin="round"/>
<rect x="89.40" y="596.00" width="36.00" height="30.00" fill="#f0f0f0" opacity=".93"/>
<rect x="126.50" y="596.00" width="101.50" height="30.00" fill="#f0f0f0" opacity=".93"/>
<path d="M94.0 611.0c6-10 17-10 23 0c-6 10-17 10-23 0z" fill="#9c9c9c"/><circle cx="105.5" cy="611.0" r="4.600" fill="#f0f0f0"/><circle cx="105.5" cy="611.0" r="2.400" fill="#9c9c9c"/>
<g transform="translate(132.8 600.5) scale(1)" ><path d="M0 5.500c0-2 1-3 3-3l13-2c2 0 3 1 3 3v12c0 1.500-1 2.500-2 3l-3 1.500h-11c-2 0-3-1-3-3z" fill="#b8bcc6" stroke="#6a6a6a" stroke-width="1.100"/><rect x=".6" y="4.600" width="14" height="14.800" rx="2.500" fill="#cfd3dc" stroke="#6a6a6a" stroke-width="1"/></g>
<text x="176.3" y="617.2" font-size="17.0" fill="#333" textLength="34.2" lengthAdjust="spacingAndGlyphs" >left:1</text>
<path d="M64.0 640.8v12.500l8-6.250z" fill="#fff" stroke="#333" stroke-width="1.500" stroke-linejoin="round"/>
<rect x="89.40" y="632.00" width="36.00" height="30.00" fill="#f0f0f0" opacity=".93"/>
<rect x="126.50" y="632.00" width="106.30" height="30.00" fill="#f0f0f0" opacity=".93"/>
<g fill="none" stroke="#9c9c9c" stroke-width="1.500"><path d="M94.0 647.0c6-9.500 17-9.500 23 0c-6 9.500-17 9.500-23 0z"/><circle cx="105.5" cy="647.0" r="4"/><path d="M98.0 640.0l15 14"/></g>
<g transform="translate(132.8 636.5) scale(1)" ><path d="M0 5.500c0-2 1-3 3-3l13-2c2 0 3 1 3 3v12c0 1.500-1 2.500-2 3l-3 1.500h-11c-2 0-3-1-3-3z" fill="#b8bcc6" stroke="#6a6a6a" stroke-width="1.100"/><rect x=".6" y="4.600" width="14" height="14.800" rx="2.500" fill="#cfd3dc" stroke="#6a6a6a" stroke-width="1"/></g>
<text x="176.3" y="653.2" font-size="17.0" fill="#333" textLength="39.0" lengthAdjust="spacingAndGlyphs" >bolt:1</text>
<path d="M64.0 676.8v12.500l8-6.250z" fill="#fff" stroke="#333" stroke-width="1.500" stroke-linejoin="round"/>
<rect x="89.40" y="668.00" width="36.00" height="30.00" fill="#f0f0f0" opacity=".93"/>
<rect x="126.50" y="668.00" width="107.00" height="30.00" fill="#f0f0f0" opacity=".93"/>
<g fill="none" stroke="#9c9c9c" stroke-width="1.500"><path d="M94.0 683.0c6-9.500 17-9.500 23 0c-6 9.500-17 9.500-23 0z"/><circle cx="105.5" cy="683.0" r="4"/><path d="M98.0 676.0l15 14"/></g>
<g transform="translate(132.8 672.5) scale(1)" ><path d="M0 5.500c0-2 1-3 3-3l13-2c2 0 3 1 3 3v12c0 1.500-1 2.500-2 3l-3 1.500h-11c-2 0-3-1-3-3z" fill="#b8bcc6" stroke="#6a6a6a" stroke-width="1.100"/><rect x=".6" y="4.600" width="14" height="14.800" rx="2.500" fill="#cfd3dc" stroke="#6a6a6a" stroke-width="1"/></g>
<text x="176.3" y="689.2" font-size="17.0" fill="#333" textLength="39.7" lengthAdjust="spacingAndGlyphs" >bolt:3</text>
<path d="M64.0 712.8v12.500l8-6.250z" fill="#fff" stroke="#333" stroke-width="1.500" stroke-linejoin="round"/>
<rect x="89.40" y="704.00" width="36.00" height="30.00" fill="#f0f0f0" opacity=".93"/>
<rect x="126.50" y="704.00" width="102.60" height="30.00" fill="#f0f0f0" opacity=".93"/>
<g fill="none" stroke="#9c9c9c" stroke-width="1.500"><path d="M94.0 719.0c6-9.500 17-9.500 23 0c-6 9.500-17 9.500-23 0z"/><circle cx="105.5" cy="719.0" r="4"/><path d="M98.0 712.0l15 14"/></g>
<g transform="translate(132.8 708.5) scale(1)" ><path d="M0 5.500c0-2 1-3 3-3l13-2c2 0 3 1 3 3v12c0 1.500-1 2.500-2 3l-3 1.500h-11c-2 0-3-1-3-3z" fill="#b8bcc6" stroke="#6a6a6a" stroke-width="1.100"/><rect x=".6" y="4.600" width="14" height="14.800" rx="2.500" fill="#cfd3dc" stroke="#6a6a6a" stroke-width="1"/></g>
<text x="176.3" y="725.2" font-size="17.0" fill="#333" textLength="35.3" lengthAdjust="spacingAndGlyphs" >left:5</text>
<path d="M64.0 748.8v12.500l8-6.250z" fill="#fff" stroke="#333" stroke-width="1.500" stroke-linejoin="round"/>
<rect x="89.40" y="740.00" width="36.00" height="30.00" fill="#f0f0f0" opacity=".93"/>
<rect x="126.50" y="740.00" width="129.00" height="30.00" fill="#f0f0f0" opacity=".93"/>
<g fill="none" stroke="#9c9c9c" stroke-width="1.500"><path d="M94.0 755.0c6-9.500 17-9.500 23 0c-6 9.500-17 9.500-23 0z"/><circle cx="105.5" cy="755.0" r="4"/><path d="M98.0 748.0l15 14"/></g>
<g transform="translate(132.8 744.5) scale(1)" ><path d="M0 5.500c0-2 1-3 3-3l13-2c2 0 3 1 3 3v12c0 1.500-1 2.500-2 3l-3 1.500h-11c-2 0-3-1-3-3z" fill="#b8bcc6" stroke="#6a6a6a" stroke-width="1.100"/><rect x=".6" y="4.600" width="14" height="14.800" rx="2.500" fill="#cfd3dc" stroke="#6a6a6a" stroke-width="1"/></g>
<text x="176.3" y="761.2" font-size="17.0" fill="#333" textLength="61.7" lengthAdjust="spacingAndGlyphs" >spool0:5</text>
<path d="M64.0 784.8v12.500l8-6.250z" fill="#fff" stroke="#333" stroke-width="1.500" stroke-linejoin="round"/>
<rect x="89.40" y="776.00" width="36.00" height="30.00" fill="#f0f0f0" opacity=".93"/>
<rect x="126.50" y="776.00" width="112.30" height="30.00" fill="#f0f0f0" opacity=".93"/>
<g fill="none" stroke="#9c9c9c" stroke-width="1.500"><path d="M94.0 791.0c6-9.500 17-9.500 23 0c-6 9.500-17 9.500-23 0z"/><circle cx="105.5" cy="791.0" r="4"/><path d="M98.0 784.0l15 14"/></g>
<g transform="translate(132.8 780.5) scale(1)" ><path d="M0 5.500c0-2 1-3 3-3l13-2c2 0 3 1 3 3v12c0 1.500-1 2.500-2 3l-3 1.500h-11c-2 0-3-1-3-3z" fill="#b8bcc6" stroke="#6a6a6a" stroke-width="1.100"/><rect x=".6" y="4.600" width="14" height="14.800" rx="2.500" fill="#cfd3dc" stroke="#6a6a6a" stroke-width="1"/></g>
<text x="176.3" y="797.2" font-size="17.0" fill="#333" textLength="45.0" lengthAdjust="spacingAndGlyphs" >right:5</text>
<path d="M64.0 820.8v12.500l8-6.250z" fill="#fff" stroke="#333" stroke-width="1.500" stroke-linejoin="round"/>
<rect x="89.40" y="812.00" width="36.00" height="30.00" fill="#f0f0f0" opacity=".93"/>
<rect x="126.50" y="812.00" width="129.00" height="30.00" fill="#f0f0f0" opacity=".93"/>
<g fill="none" stroke="#9c9c9c" stroke-width="1.500"><path d="M94.0 827.0c6-9.500 17-9.500 23 0c-6 9.500-17 9.500-23 0z"/><circle cx="105.5" cy="827.0" r="4"/><path d="M98.0 820.0l15 14"/></g>
<g transform="translate(132.8 816.5) scale(1)" ><path d="M0 5.500c0-2 1-3 3-3l13-2c2 0 3 1 3 3v12c0 1.500-1 2.500-2 3l-3 1.500h-11c-2 0-3-1-3-3z" fill="#b8bcc6" stroke="#6a6a6a" stroke-width="1.100"/><rect x=".6" y="4.600" width="14" height="14.800" rx="2.500" fill="#cfd3dc" stroke="#6a6a6a" stroke-width="1"/></g>
<text x="176.3" y="833.2" font-size="17.0" fill="#333" textLength="61.7" lengthAdjust="spacingAndGlyphs" >spool0:6</text>
<path d="M64.0 856.8v12.500l8-6.250z" fill="#fff" stroke="#333" stroke-width="1.500" stroke-linejoin="round"/>
<rect x="89.40" y="848.00" width="36.00" height="30.00" fill="#f0f0f0" opacity=".93"/>
<rect x="126.50" y="848.00" width="106.80" height="30.00" fill="#f0f0f0" opacity=".93"/>
<g fill="none" stroke="#9c9c9c" stroke-width="1.500"><path d="M94.0 863.0c6-9.500 17-9.500 23 0c-6 9.500-17 9.500-23 0z"/><circle cx="105.5" cy="863.0" r="4"/><path d="M98.0 856.0l15 14"/></g>
<g transform="translate(132.8 852.5) scale(1)" ><path d="M0 5.500c0-2 1-3 3-3l13-2c2 0 3 1 3 3v12c0 1.500-1 2.500-2 3l-3 1.500h-11c-2 0-3-1-3-3z" fill="#b8bcc6" stroke="#6a6a6a" stroke-width="1.100"/><rect x=".6" y="4.600" width="14" height="14.800" rx="2.500" fill="#cfd3dc" stroke="#6a6a6a" stroke-width="1"/></g>
<text x="176.3" y="869.2" font-size="17.0" fill="#333" textLength="39.5" lengthAdjust="spacingAndGlyphs" >bolt:4</text>
<path d="M64.0 892.8v12.500l8-6.250z" fill="#fff" stroke="#333" stroke-width="1.500" stroke-linejoin="round"/>
<rect x="89.40" y="884.00" width="36.00" height="30.00" fill="#f0f0f0" opacity=".93"/>
<rect x="126.50" y="884.00" width="102.60" height="30.00" fill="#f0f0f0" opacity=".93"/>
<g fill="none" stroke="#9c9c9c" stroke-width="1.500"><path d="M94.0 899.0c6-9.500 17-9.500 23 0c-6 9.500-17 9.500-23 0z"/><circle cx="105.5" cy="899.0" r="4"/><path d="M98.0 892.0l15 14"/></g>
<g transform="translate(132.8 888.5) scale(1)" ><path d="M0 5.500c0-2 1-3 3-3l13-2c2 0 3 1 3 3v12c0 1.500-1 2.500-2 3l-3 1.500h-11c-2 0-3-1-3-3z" fill="#b8bcc6" stroke="#6a6a6a" stroke-width="1.100"/><rect x=".6" y="4.600" width="14" height="14.800" rx="2.500" fill="#cfd3dc" stroke="#6a6a6a" stroke-width="1"/></g>
<text x="176.3" y="905.2" font-size="17.0" fill="#333" textLength="35.3" lengthAdjust="spacingAndGlyphs" >left:6</text>
<path d="M64.0 928.8v12.500l8-6.250z" fill="#fff" stroke="#333" stroke-width="1.500" stroke-linejoin="round"/>
<rect x="89.40" y="920.00" width="36.00" height="30.00" fill="#f0f0f0" opacity=".93"/>
<rect x="126.50" y="920.00" width="112.30" height="30.00" fill="#f0f0f0" opacity=".93"/>
<g fill="none" stroke="#9c9c9c" stroke-width="1.500"><path d="M94.0 935.0c6-9.500 17-9.500 23 0c-6 9.500-17 9.500-23 0z"/><circle cx="105.5" cy="935.0" r="4"/><path d="M98.0 928.0l15 14"/></g>
<g transform="translate(132.8 924.5) scale(1)" ><path d="M0 5.500c0-2 1-3 3-3l13-2c2 0 3 1 3 3v12c0 1.500-1 2.500-2 3l-3 1.500h-11c-2 0-3-1-3-3z" fill="#b8bcc6" stroke="#6a6a6a" stroke-width="1.100"/><rect x=".6" y="4.600" width="14" height="14.800" rx="2.500" fill="#cfd3dc" stroke="#6a6a6a" stroke-width="1"/></g>
<text x="176.3" y="941.2" font-size="17.0" fill="#333" textLength="45.0" lengthAdjust="spacingAndGlyphs" >right:6</text>
<rect x="8.50" y="1976.00" width="448.00" height="36.50" fill="#f2f2f2" stroke="#c4c4c4" stroke-width="1" />
<rect x="9.00" y="2012.50" width="448.00" height="1.50" fill="#dadada" />
<text x="45.8" y="2000.5" font-size="17.0" fill="#555" textLength="46.5" lengthAdjust="spacingAndGlyphs" >コメント</text>
<circle cx="433.200" cy="1994.500" r="7" fill="#2e2e2e"/><path d="M428.700 1994.500h9M433.200 1990v9" stroke="#f2f2f2" stroke-width="2"/>
<rect x="1745.00" y="1975.50" width="356.00" height="35.00" fill="#f1f1f1" opacity=".96"/>
<path d="M1758.500 1987.500l3.500-6 3.500 6h-2v16h-3v-16z" fill="#fff" stroke="#555" stroke-width="1.200" stroke-linejoin="round"/><path d="M1757 1991c-7 1.500-7 6.500 2 7.500M1766 1991c8 1.500 8 6-1 7.500" fill="none" stroke="#555" stroke-width="1.500"/><path d="M1755.500 1996l4 2.500-3.500 3z" fill="#555"/>
<path d="M1780.5 1989.6h9.0l-4.5 5.8z" fill="#222"/>
<path d="M1801 1988h20v15h-20z" fill="#c8c8c8" stroke="#555" stroke-width="1.300"/><path d="M1801 1988l3-5h9l1 5" fill="#e0e0e0" stroke="#555" stroke-width="1.200"/><rect x="1804.500" y="1993" width="13" height="7" fill="#8a8a8a"/>
<path d="M1843 1993l3 9c1 2 3 3 6 3h3c3 0 4-2 5-4l2-10c0-2-2-2-2.500 0l-1 4 0-9c0-2-2.500-2-2.500 0v7l-1-9c0-2-2.500-2-2.500 0l.5 9-2-7c-.5-2-3-1.500-2.500.5l2 9-3.500-3.500c-1.500-1.500-3.500 0-2.500 1.500z" fill="#fff" stroke="#555" stroke-width="1.200" stroke-linejoin="round"/>
<circle cx="1886.500" cy="1989.500" r="7.500" fill="#e6eef6" stroke="#555" stroke-width="1.500"/><path d="M1892 1995l8 7.500" stroke="#333" stroke-width="3"/><path d="M1896 1982h4M1898 1980v4M1896 1987h4" stroke="#333" stroke-width="1"/>
<circle cx="1925" cy="1989.500" r="7.500" fill="#e6eef6" stroke="#555" stroke-width="1.500"/><rect x="1921" y="1985.500" width="8" height="8" rx="1.500" fill="none" stroke="#555" stroke-width="1.200"/><path d="M1930.500 1995l8 7.500" stroke="#333" stroke-width="3"/>
<path d="M1947.5 1989.6h9.0l-4.5 5.8z" fill="#222"/>
<rect x="1966.500" y="1982.500" width="22" height="15.500" fill="#7fa6dc" stroke="#4a4a4a" stroke-width="1.300"/><rect x="1969" y="1985" width="17" height="10.500" fill="#a8c4ec"/><path d="M1975 1998v3.500h5v-3.500M1971 2002.500h13" stroke="#4a4a4a" stroke-width="1.500" fill="none"/>
<path d="M1993.5 1989.6h9.0l-4.5 5.8z" fill="#222"/>
<rect x="2013" y="1982.500" width="22" height="21" fill="#c6cadb" stroke="#777" stroke-width="1"/><path d="M2015.2 1982.500v21M2013 1984.6h22M2017.4 1982.500v21M2013 1986.7h22M2019.6 1982.500v21M2013 1988.8h22M2021.8 1982.500v21M2013 1990.9h22M2024.0 1982.500v21M2013 1993.0h22M2026.2 1982.500v21M2013 1995.1h22M2028.4 1982.500v21M2013 1997.2h22M2030.6 1982.500v21M2013 1999.3h22M2032.8 1982.500v21M2013 2001.4h22" stroke="#8a8ea8" stroke-width=".5"/>
<path d="M2039.0 1989.6h9.0l-4.5 5.8z" fill="#222"/>
<rect x="2059.500" y="1983" width="21" height="19.500" fill="#7fa6dc" stroke="#33507a" stroke-width="1.400"/><path d="M2070 1983v19.500M2059.500 1992.500h21" stroke="#33507a" stroke-width="1.600"/>
<path d="M2085.5 1989.6h9.0l-4.5 5.8z" fill="#222"/>
<rect x="0.00" y="0.00" width="3842.00" height="46.00" fill="#f3f3f3" />
<rect x="15" y="10" width="21" height="24" rx="3" fill="#ff6a13"/><rect x="15" y="25" width="21" height="9" rx="2" fill="#a83a08"/>
<text x="25.5" y="23.0" font-size="13.0" fill="#fff" font-weight="bold" text-anchor="middle" >F</text>
<text x="25.5" y="32.3" font-size="6.0" fill="#ffd9c0" font-weight="bold" text-anchor="middle" >FUS</text>
<text x="43.0" y="29.2" font-size="18.5" fill="#111" textLength="309.0" lengthAdjust="spacingAndGlyphs" >Autodesk Fusion 個人用(商用利用不可)</text>
<path d="M3659.500 22.500h15.500" stroke="#1a1a1a" stroke-width="1.4"/>
<rect x="3730" y="15.700" width="13.500" height="13.500" rx="1.500" fill="none" stroke="#1a1a1a" stroke-width="1.5"/>
<path d="M3800.0 15.3l14.6 14.6M3814.6 15.3l-14.6 14.6" stroke="#1a1a1a" stroke-width="1.5" fill="none"/>
<rect x="0.00" y="45.00" width="3842.00" height="48.00" fill="#cbcbcb" />
<path d="M291 93v-36a6 6 0 0 1 6-6h1597.500a6 6 0 0 1 6 6v36z" fill="#bbbbbb"/>
<path d="M1907 93v-36a6 6 0 0 1 6-6h1597.500a6 6 0 0 1 6 6v36z" fill="#f2f2f2"/>
<path d="M3523 93v-36a6 6 0 0 1 6-6h29a6 6 0 0 1 6 6v36z" fill="#bbbbbb"/>
<path d="M3534.500 71.500h20M3544.500 61.500v20" stroke="#5e5e5e" stroke-width="3.200"/>
<g fill="#666666"><rect x="15.3" y="58.5" width="5.800" height="5.800" rx="1"/><rect x="15.3" y="66.1" width="5.800" height="5.800" rx="1"/><rect x="15.3" y="73.7" width="5.800" height="5.800" rx="1"/><rect x="22.9" y="58.5" width="5.800" height="5.800" rx="1"/><rect x="22.9" y="66.1" width="5.800" height="5.800" rx="1"/><rect x="22.9" y="73.7" width="5.800" height="5.800" rx="1"/><rect x="30.5" y="58.5" width="5.800" height="5.800" rx="1"/><rect x="30.5" y="66.1" width="5.800" height="5.800" rx="1"/><rect x="30.5" y="73.7" width="5.800" height="5.800" rx="1"/></g>
<path d="M67.500 57h11l6.500 6.500v16.500a1 1 0 0 1-1 1h-16.500a1 1 0 0 1-1-1v-22a1 1 0 0 1 1-1z" fill="#666666"/><path d="M78.500 57v6.500h6.500z" fill="#cbcbcb"/><path d="M79.300 58.500v4.300h4.300z" fill="#666666"/>
<path d="M94.0 66.0h10.0l-5.0 6.5z" fill="#666666"/>
<path d="M134 58.500h18.500a1.500 1.500 0 0 1 1.500 1.500v18a1.500 1.500 0 0 1-1.500 1.500h-16l-4-4v-15.500a1.500 1.500 0 0 1 1.500-1.500z" fill="#666666"/><rect x="137.200" y="58.500" width="11.300" height="8.300" fill="#cbcbcb"/><rect x="138.300" y="71.500" width="9.400" height="8" fill="#cbcbcb"/><rect x="140" y="73.400" width="6" height="6.200" fill="#666666"/>
<path d="M193.500 61.500l-8.500 7.500 8.500 7.500M186 69h8.500c6 0 7.500 4 7.500 8.500" stroke="#666666" stroke-width="2.900" fill="none"/>
<path d="M212.0 66.0h10.0l-5.0 6.5z" fill="#666666"/>
<path d="M251 61.500l8.500 7.500-8.500 7.500M258.500 69h-8.500c-6 0-7.500 4-7.500 8.500" stroke="#9a9a9a" stroke-width="2.900" fill="none"/>
<path d="M271.0 66.0h10.0l-5.0 6.5z" fill="#9a9a9a"/>
<g transform="translate(1032.0 61.5) scale(1)" ><path d="M11 0l11 5.500v13l-11 5.500-11-5.500v-13z" fill="#ff7a1a"/><path d="M11 0l11 5.500-11 5.500-11-5.500z" fill="#ffc9a0"/><path d="M0 5.500l11 5.500v13l-11-5.500z" fill="#ff9a50"/></g>
<text x="1061.5" y="79.5" font-size="17.5" fill="#555" textLength="83.0" lengthAdjust="spacingAndGlyphs" >caliper v3*</text>
<path d="M1878.8 66.3l11.0 11.0M1889.8 66.3l-11.0 11.0" stroke="#5a5a5a" stroke-width="1.6" fill="none"/>
<g transform="translate(2612.0 61.5) scale(1)" ><path d="M11 0l11 5.500v13l-11 5.500-11-5.500v-13z" fill="#ff7a1a"/><path d="M11 0l11 5.500-11 5.500-11-5.500z" fill="#ffc9a0"/><path d="M0 5.500l11 5.500v13l-11-5.500z" fill="#ff9a50"/></g>
<text x="2641.7" y="79.5" font-size="17.5" fill="#2e2e2e" textLength="153.5" lengthAdjust="spacingAndGlyphs" >spool holder 2 v27*</text>
<path d="M3493.5 65.7l12.4 12.4M3505.9 65.7l-12.4 12.4" stroke="#555" stroke-width="1.7" fill="none"/>
<circle cx="3594.200" cy="69.300" r="12.200" fill="#0d96d8"/><path d="M3591 61.500l1.600 5 5 1.600-5 1.600-1.600 5-1.600-5-5-1.600 5-1.600z M3599.500 60l.8 2.400 2.400.8-2.400.8-.8 2.400-.8-2.400-2.400-.8 2.400-.8z" fill="#fff"/>
<circle cx="3644" cy="69.300" r="10.800" fill="none" stroke="#5e5e5e" stroke-width="2.400"/><circle cx="3644" cy="69.300" r="8" fill="#5e5e5e"/><path d="M3644 63.500v6.500h5.500" stroke="#cbcbcb" stroke-width="1.700" fill="none"/>
<path d="M3693.600 57c-1.500 0-2 1-2 2-4 1-5.500 4.500-5.500 9 0 5-1.500 6.500-3.500 8.500v1.500h22v-1.500c-2-2-3.500-3.500-3.500-8.500 0-4.500-1.500-8-5.500-9 0-1-.5-2-2-2z" fill="#5e5e5e"/><path d="M3690.600 79.500a3 3 0 0 0 6 0z" fill="#5e5e5e"/>
<circle cx="3743" cy="69.300" r="12" fill="#5e5e5e"/>
<text x="3743.0" y="76.5" font-size="20.0" fill="#cbcbcb" font-weight="bold" text-anchor="middle" >?</text>
<circle cx="3804.400" cy="69.300" r="18" fill="#ffffff"/><rect x="3795" y="59" width="19" height="20" fill="#3a3a3a"/><path d="M3800 62c3-2 7 0 7 4l3 8-2 5h-9l1-6c-2-3-2-8 0-11z" fill="#bdbdbd"/><path d="M3797 72l4 2-1 5h-5z" fill="#e4e4e4"/>
<rect x="0.00" y="92.80" width="3842.00" height="122.70" fill="#f2f2f2" />
<rect x="0.00" y="215.00" width="3842.00" height="1.00" fill="#d4d4d4" />
<rect x="0.00" y="216.00" width="3842.00" height="4.50" fill="#f2f2f2" />
<rect x="20.00" y="109.50" width="164.00" height="90.00" fill="#f2f2f2" rx="6.0" stroke="#d2d2d2" stroke-width="1.2" />
<text x="69.0" y="160.0" font-size="17.5" fill="#222" textLength="51.0" lengthAdjust="spacingAndGlyphs" font-weight="bold" >デザイン</text>
<path d="M130.5 152.0h8.0l-4.0 5.0z" fill="#222"/>
<text x="227.0" y="116.5" font-size="17.0" fill="#1191d8" textLength="48.0" lengthAdjust="spacingAndGlyphs" >ソリッド</text>
<text x="345.0" y="116.5" font-size="17.0" fill="#3a3a3a" textLength="56.0" lengthAdjust="spacingAndGlyphs" >サーフェス</text>
<text x="469.0" y="116.5" font-size="17.0" fill="#3a3a3a" textLength="46.0" lengthAdjust="spacingAndGlyphs" >メッシュ</text>
<text x="872.5" y="116.5" font-size="17.0" fill="#3a3a3a" textLength="80.0" lengthAdjust="spacingAndGlyphs" >ユーティリティ</text>
<text x="732.2" y="116.5" font-size="17.0" fill="#3a3a3a" textLength="71.5" lengthAdjust="spacingAndGlyphs" >プラスチック</text>
<text x="586.0" y="116.5" font-size="17.0" fill="#3a3a3a" textLength="34.0" lengthAdjust="spacingAndGlyphs" >シート</text>
<text x="628.0" y="116.5" font-size="17.0" fill="#3a3a3a" textLength="35.0" lengthAdjust="spacingAndGlyphs" >メタル</text>
<rect x="209.50" y="124.00" width="84.50" height="4.00" fill="#1191d8" />
<g transform="translate(207.5 134.0) scale(1)" ><path d="M7 3h32M3 7v32M7 43h21M43 7v19" stroke="#666" stroke-width="1.300" fill="none"/><rect x="0.7" y="0.7" width="4.600" height="4.600" fill="#555"/><rect x="40.7" y="0.7" width="4.600" height="4.600" fill="#555"/><rect x="0.7" y="40.7" width="4.600" height="4.600" fill="#555"/><path d="M17 13h12M13 17v13" stroke="#666" stroke-width="1.300" fill="none"/><path d="M33 16c0 10-7 17-16 17" stroke="#666" stroke-width="1.400" fill="none"/><rect x="10.8" y="10.8" width="4.400" height="4.400" fill="#555"/><rect x="30.8" y="10.8" width="4.400" height="4.400" fill="#555"/><rect x="10.8" y="30.8" width="4.400" height="4.400" fill="#555"/><path d="M37.500 27v21M27 37.500h21" stroke="#23a043" stroke-width="6" fill="none"/></g>
<g transform="translate(272.0 134.0) scale(1)" ><path d="M1.0 38.0h28.0v9.0h-28.0z" fill="#bcbcbc"/><path d="M29.0 38.0l8.0 -6.0v9.0l-8.0 6.0z" fill="#a8a8a8"/><path d="M1.0 38.0l8.0 -6.0h28.0l-8.0 6.0z" fill="#e4e4e4"/><path d="M1.0 8.0h28.0v32.0h-28.0z" fill="#62aee6"/><path d="M29.0 8.0l8.0 -7.0v32.0l-8.0 7.0z" fill="#3f8fd0"/><path d="M1.0 8.0l8.0 -7.0h28.0l-8.0 7.0z" fill="#85c4f2"/><path d="M42.5 38V6" stroke="#222" stroke-width="1.7"/><path d="M42.500 1l4 8h-8z" fill="#222"/></g>
<g transform="translate(336.0 134.0) scale(1)" ><path d="M3 20c12-9 32-9 45 0v14c-13-9-29-8-36 3l-9-6z" fill="#62aee6"/><path d="M3 20c12-9 32-9 45 0l-9 7c-8-5-18-4-27 2z" fill="#85c4f2"/><path d="M3 20l9 9v8l-9-6z" fill="#3f8fd0"/><path d="M39 27l9-7v14l-9 8z" fill="#f4f4f4" stroke="#666" stroke-width="1.3"/><path d="M8 8c12-8 26-7 38 2" stroke="#222" stroke-width="1.7" fill="none"/><path d="M3 12l9-7 0 9z" fill="#222"/></g>
<g transform="translate(401.0 134.0) scale(1)" ><path d="M1.0 10.0h38.0v37.0h-38.0z" fill="#d9d9d9" stroke="#6e6e6e" stroke-width="1.3" stroke-linejoin="round"/><path d="M39.0 10.0l9.0 -8.0v37.0l-9.0 8.0z" fill="#b7b7b7" stroke="#6e6e6e" stroke-width="1.3" stroke-linejoin="round"/><path d="M1.0 10.0l9.0 -8.0h38.0l-9.0 8.0z" fill="#ececec" stroke="#6e6e6e" stroke-width="1.3" stroke-linejoin="round"/><circle cx="20" cy="28.500" r="11.500" fill="#f2f2f2" stroke="#555" stroke-width="1.5"/><circle cx="20" cy="28.500" r="9" fill="#62aee6"/><path d="M14 21a9 9 0 0 0 14 11a11 11 0 0 1-14-11z" fill="#3f8fd0"/><circle cx="24" cy="24" r="5.500" fill="#f2f2f2"/></g>
<g transform="translate(465.0 134.0) scale(1)" ><path d="M6 8h32M6 8v32M6 40h32" stroke="#555" stroke-width="1.5" fill="none"/><rect x="1" y="3" width="9.500" height="9.500" fill="#fff" stroke="#555" stroke-width="1.3"/><rect x="33" y="3" width="10" height="10" fill="#62aee6"/><rect x="1" y="35" width="10" height="10" fill="#62aee6"/><rect x="33" y="35" width="10" height="10" fill="#62aee6"/></g>
<g transform="translate(530.0 134.0) scale(1)" ><path d="M2 22c0-10 3-13 12-13l6-6h14l10 13v18l-9 9h-24c-7 0-9-4-9-10z" fill="#b78ae6"/><path d="M2 22c0-10 3-13 12-13h16c6 0 7 4 7 11v16c0 7-3 10-9 10h-17c-7 0-9-4-9-10z" fill="#c7a0ee" stroke="#9a6ad2" stroke-width="1.4"/><path d="M14 9l6-6h14l-4 6z" fill="#d9bdf6"/><path d="M37 20l9-4v18l-9 9z" fill="#9a6ad2"/><path d="M19 9v37M2 28h35" stroke="#9a6ad2" stroke-width="1.3" fill="none"/><polygon points="36.0,-1.0 37.7,6.8 44.5,2.5 40.2,9.3 48.0,11.0 40.2,12.7 44.5,19.5 37.7,15.2 36.0,23.0 34.3,15.2 27.5,19.5 31.8,12.7 24.0,11.0 31.8,9.3 27.5,2.5 34.3,6.8" fill="#f5a01a"/></g>
<g transform="translate(612.0 134.0) scale(1)" ><path d="M1 8l6-6h8v46h-14z" fill="#e2e2e2" stroke="#666" stroke-width="1.3"/><path d="M11.0 8.0h14.0v40.0h-14.0z" fill="#62aee6"/><path d="M25.0 8.0l8.0 -6.0v40.0l-8.0 6.0z" fill="#3f8fd0"/><path d="M11.0 8.0l8.0 -6.0h14.0l-8.0 6.0z" fill="#85c4f2"/><path d="M28 25h12" stroke="#222" stroke-width="1.8"/><path d="M45 25l-8-4v8z" fill="#222"/></g>
<g transform="translate(675.5 134.0) scale(1)" ><path d="M1 16l12-13h10c14 0 25 8 25 22v12l-11 10h-36z" fill="#dadada" stroke="#666" stroke-width="1.3"/><path d="M37 47v-13l11-9v12z" fill="#b4b4b4" stroke="#666" stroke-width="1"/><path d="M19 12l6-9c14 1 23 8 23 22l-11 9c0-13-6-20-18-22z" fill="#62aee6"/></g>
<g transform="translate(740.0 134.0) scale(1)" ><path d="M1.0 11.0h37.0v36.0h-37.0z" fill="#dcdcdc" stroke="#6e6e6e" stroke-width="1.3" stroke-linejoin="round"/><path d="M38.0 11.0l10.0 -9.0v36.0l-10.0 9.0z" fill="#b7b7b7" stroke="#6e6e6e" stroke-width="1.3" stroke-linejoin="round"/><path d="M1.0 11.0l10.0 -9.0h37.0l-10.0 9.0z" fill="#eeeeee" stroke="#6e6e6e" stroke-width="1.3" stroke-linejoin="round"/><rect x="6" y="17" width="26" height="25" fill="#f5f5f5"/><path d="M7 18h10v16h14v8h-24z" fill="#62aee6"/><path d="M7 42l10-8h14v8z" fill="#85c4f2"/><path d="M7 18h10v16l-10 8z" fill="#3f8fd0"/></g>
<g transform="translate(804.0 134.0) scale(1)" ><path d="M17.0 9.0h22.0v20.0h-22.0z" fill="#62aee6"/><path d="M39.0 9.0l10.0 -7.0v20.0l-10.0 7.0z" fill="#3f8fd0"/><path d="M17.0 9.0l10.0 -7.0h22.0l-10.0 7.0z" fill="#85c4f2"/><path d="M1.0 24.0h26.0v23.0h-26.0z" fill="#62aee6"/><path d="M27.0 24.0l10.0 -7.0v23.0l-10.0 7.0z" fill="#3f8fd0"/><path d="M1.0 24.0l10.0 -7.0h26.0l-10.0 7.0z" fill="#85c4f2"/><path d="M27 24h12v8l-12 0z" fill="#62aee6"/></g>
<g transform="translate(869.0 134.0) scale(1)" ><path d="M4.0 31.0h33.0v15.0h-33.0z" fill="#dcdcdc" stroke="#6e6e6e" stroke-width="1.2" stroke-linejoin="round"/><path d="M37.0 31.0l9.0 -7.0v15.0l-9.0 7.0z" fill="#b7b7b7" stroke="#6e6e6e" stroke-width="1.2" stroke-linejoin="round"/><path d="M4.0 31.0l9.0 -7.0h33.0l-9.0 7.0z" fill="#eeeeee" stroke="#6e6e6e" stroke-width="1.2" stroke-linejoin="round"/><path d="M4.0 8.0h33.0v15.0h-33.0z" fill="#62aee6"/><path d="M37.0 8.0l9.0 -7.0v15.0l-9.0 7.0z" fill="#3f8fd0"/><path d="M4.0 8.0l9.0 -7.0h33.0l-9.0 7.0z" fill="#85c4f2"/><path d="M0 28h36l12-10" stroke="#2a8be0" stroke-width="2" fill="none"/></g>
<g transform="translate(934.0 134.0) scale(1)" ><path d="M24 7v34M7 24h34" stroke="#2e2e2e" stroke-width="3.4"/><path d="M24 0l8.500 11h-17zM24 48l8.500-11h-17zM0 24l11-8.500v17zM48 24l-11-8.500v17z" fill="#2e2e2e"/></g>
<g transform="translate(1014.0 134.0) scale(1)" ><path d="M1.0 28.0h18.0v18.0h-18.0z" fill="#dcdcdc" stroke="#6e6e6e" stroke-width="1.2" stroke-linejoin="round"/><path d="M19.0 28.0l5.0 -4.0v18.0l-5.0 4.0z" fill="#b7b7b7" stroke="#6e6e6e" stroke-width="1.2" stroke-linejoin="round"/><path d="M1.0 28.0l5.0 -4.0h18.0l-5.0 4.0z" fill="#eeeeee" stroke="#6e6e6e" stroke-width="1.2" stroke-linejoin="round"/><path d="M19.0 28.0h18.0v18.0h-18.0z" fill="#dcdcdc" stroke="#6e6e6e" stroke-width="1.2" stroke-linejoin="round"/><path d="M37.0 28.0l5.0 -4.0v18.0l-5.0 4.0z" fill="#b7b7b7" stroke="#6e6e6e" stroke-width="1.2" stroke-linejoin="round"/><path d="M19.0 28.0l5.0 -4.0h18.0l-5.0 4.0z" fill="#eeeeee" stroke="#6e6e6e" stroke-width="1.2" stroke-linejoin="round"/><path d="M1.0 10.0h18.0v18.0h-18.0z" fill="#62aee6"/><path d="M19.0 10.0l5.0 -4.0v18.0l-5.0 4.0z" fill="#3f8fd0"/><path d="M1.0 10.0l5.0 -4.0h18.0l-5.0 4.0z" fill="#85c4f2"/><polygon points="36.0,0.0 37.7,7.8 44.5,3.5 40.2,10.3 48.0,12.0 40.2,13.7 44.5,20.5 37.7,16.2 36.0,24.0 34.3,16.2 27.5,20.5 31.8,13.7 24.0,12.0 31.8,10.3 27.5,3.5 34.3,7.8" fill="#f5a01a"/></g>
<g transform="translate(1080.0 134.0) scale(1)" ><path d="M3 44v-30l9-9c3-3 8-3 9 0v14l-8 9v12z" fill="#d4d4d4" stroke="#666" stroke-width="1.4" stroke-linejoin="round"/><ellipse cx="16.500" cy="5.500" rx="4" ry="2" fill="#888"/><path d="M33 6l10 12v30l-10-12v-8h-6v-8h6z" fill="#d4d4d4" stroke="#666" stroke-width="1.4" stroke-linejoin="round"/><path d="M25 22c0-3 7-3 7 0v10c0 3-7 3-7 0z" fill="#c4c4c4" stroke="#666" stroke-width="1.2"/><path d="M28.500 10v10M16 22v8" stroke="#2a8be0" stroke-width="1.6"/></g>
<g transform="translate(1177.0 134.0) scale(1)" ><g opacity=".45"><path d="M2 14l10-10h24v32h-34z" fill="#e8e8e8" stroke="#c4c4c4" stroke-width="1.3"/><path d="M22 36h24M22 45h24M34 32v8M40 41v8" stroke="#c0c0c0" stroke-width="2.2"/><circle cx="37" cy="12" r="12" fill="#8ecdf0"/><path d="M35 6v10M30 11h10M42 13v5M39.500 15.500h5" stroke="#fff" stroke-width="2"/></g></g>
<g transform="translate(1241.0 134.0) scale(1)" ><g opacity=".45"><rect x="2" y="4" width="36" height="36" fill="#e8e8e8" stroke="#c4c4c4" stroke-width="1.3"/><path d="M2 12h36M2 21h36M2 30h36M14 12v28M26 12v28" stroke="#c4c4c4" stroke-width="1.2"/><path d="M22 36h24M22 45h24M34 32v8M40 41v8" stroke="#c0c0c0" stroke-width="2.2"/><circle cx="37" cy="12" r="12" fill="#8ecdf0"/><path d="M35 6v10M30 11h10M42 13v5M39.500 15.500h5" stroke="#fff" stroke-width="2"/></g></g>
<g transform="translate(1342.0 134.0) scale(1)" ><path d="M2 12l8-9h14v36l-8 9h-14z" fill="#e4e4e4" stroke="#666" stroke-width="1.3" stroke-linejoin="round"/><path d="M14 12l14-10v36l-14 10z" fill="#5dc27a" stroke="#3b9c58" stroke-width="1"/><path d="M33 14l13-11v33l-13 11z" fill="#e59866" stroke="#d07f4a" stroke-width="1"/></g>
<g transform="translate(1432.0 144.0) scale(1)" ><path d="M2 3v12M44 3v12" stroke="#555" stroke-width="1.4"/><path d="M6 9h34" stroke="#555" stroke-width="1.4"/><path d="M2 9l7-3.500v7zM44 9l-7-3.500v7z" fill="#555"/><rect x="1" y="19" width="44" height="10" fill="#f2a91c"/><path d="M4 19v5M8 19v3M12 19v5M16 19v3M20 19v5M24 19v3M28 19v5M32 19v3M36 19v5M40 19v3M44 19v5" stroke="#b87800" stroke-width="1"/></g>
<g transform="translate(1516.0 134.0) scale(1)" ><path d="M7.0 16.0h30.0v31.0h-30.0z" fill="#dcdcdc" stroke="#6e6e6e" stroke-width="1.3" stroke-linejoin="round"/><path d="M37.0 16.0l9.0 -8.0v31.0l-9.0 8.0z" fill="#b7b7b7" stroke="#6e6e6e" stroke-width="1.3" stroke-linejoin="round"/><path d="M7.0 16.0l9.0 -8.0h30.0l-9.0 8.0z" fill="#f0f0f0" stroke="#6e6e6e" stroke-width="1.3" stroke-linejoin="round"/><path d="M0 10h14v-6l13 9.500-13 9.500v-6h-14z" fill="#1e88e0"/><g fill="none" stroke="#333" stroke-width="3.4"><rect x="25" y="36" width="13" height="8" rx="4" transform="rotate(-35 31 40)"/><rect x="34" y="30" width="13" height="8" rx="4" transform="rotate(-35 40 34)"/></g></g>
<g transform="translate(1581.0 134.0) scale(1)" ><rect x="1" y="3" width="43" height="43" fill="#8ecbf5" stroke="#4a9ad8" stroke-width="1.2"/><path d="M1 34c6-10 12-14 17-8s8 6 12 1 9-3 14 4v15h-43z" fill="#3f8fd0"/><circle cx="32" cy="15" r="5" fill="#f8f4c0"/></g>
<g transform="translate(1659.0 128.7) scale(1)" ><rect x="0" y="0" width="57.500" height="57" fill="#0d96d8"/><rect x="5" y="6" width="41" height="31" fill="none" stroke="#7be08a" stroke-width="1.6" stroke-dasharray="6 3.500"/><path d="M35 26v24l6-6 5 10 4-2-5-10h8z" fill="#fff"/></g>
<rect x="592.40" y="134.00" width="1.20" height="75.00" fill="#d0d0d0" />
<rect x="995.40" y="134.00" width="1.20" height="75.00" fill="#d0d0d0" />
<rect x="1141.40" y="134.00" width="1.20" height="75.00" fill="#d0d0d0" />
<rect x="1319.90" y="134.00" width="1.20" height="75.00" fill="#d0d0d0" />
<rect x="1408.40" y="134.00" width="1.20" height="75.00" fill="#d0d0d0" />
<rect x="1496.90" y="134.00" width="1.20" height="75.00" fill="#d0d0d0" />
<rect x="1642.40" y="134.00" width="1.20" height="75.00" fill="#d0d0d0" />
<text x="367.0" y="206.0" font-size="16.5" fill="#3a3a3a" textLength="32.0" lengthAdjust="spacingAndGlyphs" >作成</text>
<path d="M402.0 198.0h8.0l-4.0 5.0z" fill="#2a2a2a"/>
<text x="769.5" y="206.0" font-size="16.5" fill="#3a3a3a" textLength="32.0" lengthAdjust="spacingAndGlyphs" >修正</text>
<path d="M804.5 198.0h8.0l-4.0 5.0z" fill="#2a2a2a"/>
<text x="1031.0" y="206.0" font-size="16.5" fill="#3a3a3a" textLength="61.0" lengthAdjust="spacingAndGlyphs" >アセンブリ</text>
<path d="M1095.0 198.0h8.0l-4.0 5.0z" fill="#2a2a2a"/>
<text x="1164.0" y="206.0" font-size="16.5" fill="#3a3a3a" textLength="127.0" lengthAdjust="spacingAndGlyphs" >コンフィギュレーション</text>
<path d="M1294.0 198.0h8.0l-4.0 5.0z" fill="#2a2a2a"/>
<text x="1343.5" y="206.0" font-size="16.5" fill="#3a3a3a" textLength="32.0" lengthAdjust="spacingAndGlyphs" >構築</text>
<path d="M1378.5 198.0h8.0l-4.0 5.0z" fill="#2a2a2a"/>
<text x="1432.0" y="206.0" font-size="16.5" fill="#3a3a3a" textLength="32.0" lengthAdjust="spacingAndGlyphs" >検査</text>
<path d="M1467.0 198.0h8.0l-4.0 5.0z" fill="#2a2a2a"/>
<text x="1545.5" y="206.0" font-size="16.5" fill="#3a3a3a" textLength="32.0" lengthAdjust="spacingAndGlyphs" >挿入</text>
<path d="M1580.5 198.0h8.0l-4.0 5.0z" fill="#2a2a2a"/>
<text x="1665.0" y="206.0" font-size="16.5" fill="#3a3a3a" textLength="32.0" lengthAdjust="spacingAndGlyphs" >選択</text>
<path d="M1700.0 198.0h8.0l-4.0 5.0z" fill="#2a2a2a"/>
<rect x="0.00" y="2020.50" width="3842.00" height="68.00" fill="#f1f1f1" />
<rect x="0.00" y="2020.20" width="3842.00" height="1.00" fill="#d8d8d8" />
<rect x="0.00" y="2088.00" width="3842.00" height="1.60" fill="#a8a8a8" />
<rect x="0.00" y="2089.50" width="3842.00" height="7.00" fill="#dcdcdc" />
<path d="M19 2047.8v18h2.500v-18zM36.800 2047.8v18l-14-9z" fill="#3a3a3a"/>
<path d="M70 2047.8v18l-15-9zM72.500 2053.3v7h2.200v-7z" fill="#3a3a3a"/>
<path d="M94 2046.8v20l18-10z" fill="#3a3a3a"/>
<path d="M133.500 2047.8v18l15-9zM129 2053.3v7h2.200v-7z" fill="#3a3a3a"/>
<path d="M169 2047.8v18l14-9zM184 2047.8v18h2.500v-18z" fill="#3a3a3a"/>
<g transform="translate(221.0 2044.5) scale(1)" ><rect x="1" y="8" width="5" height="8" fill="none" stroke="#666" stroke-width="1.2"/><rect x="9" y="8" width="5" height="8" fill="none" stroke="#666" stroke-width="1.2"/><rect x="17" y="8" width="5" height="8" fill="none" stroke="#666" stroke-width="1.2"/></g>
<g transform="translate(256.6 2043.0) scale(1)" ><path d="M2 2h18M2 2v18M2 20h8M20 2v8" stroke="#666" stroke-width="1" fill="none"/><path d="M6 6h10M6 6v10" stroke="#777" stroke-width="1" stroke-dasharray="3 2" fill="none"/><path d="M16 6c0 6-4 10-10 10" stroke="#666" stroke-width="1" fill="none"/><rect x="0.7" y="0.7" width="2.600" height="2.600" fill="#2f8fe0"/><rect x="18.7" y="0.7" width="2.600" height="2.600" fill="#2f8fe0"/><rect x="0.7" y="18.7" width="2.600" height="2.600" fill="#2f8fe0"/><rect x="4.7" y="4.7" width="2.600" height="2.600" fill="#2f8fe0"/><rect x="14.7" y="4.7" width="2.600" height="2.600" fill="#2f8fe0"/><path d="M13.500 19.500l7-7 2.600 2.600-7 7-3.400.8z" fill="#f2b33a"/><path d="M20.500 12.500l1.800-1.800 2.600 2.600-1.800 1.800z" fill="#e8303a"/><path d="M13.500 19.500l-.8 3.400 3.400-.8z" fill="#444"/></g>
<g transform="translate(292.7 2043.0) scale(1)" ><path d="M1 10c6-5 17-5 24 0v8c-7-5-15-4-19 2l-5-3z" fill="#62aee6"/><path d="M1 10c6-5 17-5 24 0l-5 4c-4-3-9-2-14 1z" fill="#85c4f2"/><path d="M1 10l5 5v5l-5-3z" fill="#3f8fd0"/><path d="M20 14l5-4v8l-5 4z" fill="#f4f4f4" stroke="#666" stroke-width=".8"/><path d="M4 4c6-4 13-3.500 19 1" stroke="#222" stroke-width="1" fill="none"/><path d="M1 6l5-4v5z" fill="#222"/></g>
<g transform="translate(328.7 2043.0) scale(1)" ><path d="M2 2h18M2 2v18M2 20h8M20 2v8" stroke="#666" stroke-width="1" fill="none"/><path d="M6 6h10M6 6v10" stroke="#777" stroke-width="1" stroke-dasharray="3 2" fill="none"/><path d="M16 6c0 6-4 10-10 10" stroke="#666" stroke-width="1" fill="none"/><rect x="0.7" y="0.7" width="2.600" height="2.600" fill="#2f8fe0"/><rect x="18.7" y="0.7" width="2.600" height="2.600" fill="#2f8fe0"/><rect x="0.7" y="18.7" width="2.600" height="2.600" fill="#2f8fe0"/><rect x="4.7" y="4.7" width="2.600" height="2.600" fill="#2f8fe0"/><rect x="14.7" y="4.7" width="2.600" height="2.600" fill="#2f8fe0"/><path d="M13.500 19.500l7-7 2.600 2.600-7 7-3.400.8z" fill="#f2b33a"/><path d="M20.500 12.500l1.800-1.800 2.600 2.600-1.800 1.800z" fill="#e8303a"/><path d="M13.500 19.500l-.8 3.400 3.400-.8z" fill="#444"/></g>
<g transform="translate(364.8 2043.0) scale(1)" ><path d="M1.0 19.0h13.0v2.5h-13.0z" fill="#c8c8c8"/><path d="M14.0 19.0l4.0 -3.0v2.5l-4.0 3.0z" fill="#b0b0b0"/><path d="M1.0 19.0l4.0 -3.0h13.0l-4.0 3.0z" fill="#dedede"/><path d="M1.0 5.0h13.0v15.0h-13.0z" fill="#62aee6"/><path d="M14.0 5.0l4.0 -3.5v15.0l-4.0 3.5z" fill="#3f8fd0"/><path d="M1.0 5.0l4.0 -3.5h13.0l-4.0 3.5z" fill="#85c4f2"/><path d="M21 20V5" stroke="#222" stroke-width="1.1"/><path d="M21 1l2.500 5h-5z" fill="#222"/></g>
<g transform="translate(400.8 2043.0) scale(1)" ><path d="M2 2h18M2 2v18M2 20h8M20 2v8" stroke="#666" stroke-width="1" fill="none"/><path d="M6 6h10M6 6v10" stroke="#777" stroke-width="1" stroke-dasharray="3 2" fill="none"/><path d="M16 6c0 6-4 10-10 10" stroke="#666" stroke-width="1" fill="none"/><rect x="0.7" y="0.7" width="2.600" height="2.600" fill="#2f8fe0"/><rect x="18.7" y="0.7" width="2.600" height="2.600" fill="#2f8fe0"/><rect x="0.7" y="18.7" width="2.600" height="2.600" fill="#2f8fe0"/><rect x="4.7" y="4.7" width="2.600" height="2.600" fill="#2f8fe0"/><rect x="14.7" y="4.7" width="2.600" height="2.600" fill="#2f8fe0"/><path d="M13.500 19.500l7-7 2.600 2.600-7 7-3.400.8z" fill="#f2b33a"/><path d="M20.500 12.500l1.800-1.800 2.600 2.600-1.800 1.800z" fill="#e8303a"/><path d="M13.500 19.500l-.8 3.400 3.400-.8z" fill="#444"/></g>
<g transform="translate(436.9 2043.0) scale(1)" ><path d="M1.0 19.0h13.0v2.5h-13.0z" fill="#c8c8c8"/><path d="M14.0 19.0l4.0 -3.0v2.5l-4.0 3.0z" fill="#b0b0b0"/><path d="M1.0 19.0l4.0 -3.0h13.0l-4.0 3.0z" fill="#dedede"/><path d="M1.0 5.0h13.0v15.0h-13.0z" fill="#62aee6"/><path d="M14.0 5.0l4.0 -3.5v15.0l-4.0 3.5z" fill="#3f8fd0"/><path d="M1.0 5.0l4.0 -3.5h13.0l-4.0 3.5z" fill="#85c4f2"/><path d="M21 20V5" stroke="#222" stroke-width="1.1"/><path d="M21 1l2.500 5h-5z" fill="#222"/></g>
<g transform="translate(472.9 2043.0) scale(1)" ><path d="M1 12l10-10h12v17l-4 4h-18z" fill="#dedede" stroke="#777" stroke-width=".9"/><path d="M19 23v-17l4-4v17z" fill="#bdbdbd"/><path d="M4 9l7-7h6l-8 9z" fill="#62aee6"/></g>
<g transform="translate(509.0 2043.0) scale(1)" ><path d="M1 12l10-10h12v17l-4 4h-18z" fill="#dedede" stroke="#777" stroke-width=".9"/><path d="M19 23v-17l4-4v17z" fill="#bdbdbd"/><path d="M4 9l7-7h6l-8 9z" fill="#62aee6"/></g>
<g transform="translate(545.0 2043.0) scale(1)" ><path d="M12 1v22h-11z" fill="#f4f4f4" stroke="#888" stroke-width=".9"/><path d="M13 1v22h10z" fill="#62aee6"/></g>
<g transform="translate(581.0 2043.0) scale(1)" ><path d="M1.0 19.0h13.0v2.5h-13.0z" fill="#c8c8c8"/><path d="M14.0 19.0l4.0 -3.0v2.5l-4.0 3.0z" fill="#b0b0b0"/><path d="M1.0 19.0l4.0 -3.0h13.0l-4.0 3.0z" fill="#dedede"/><path d="M1.0 5.0h13.0v15.0h-13.0z" fill="#62aee6"/><path d="M14.0 5.0l4.0 -3.5v15.0l-4.0 3.5z" fill="#3f8fd0"/><path d="M1.0 5.0l4.0 -3.5h13.0l-4.0 3.5z" fill="#85c4f2"/><path d="M21 20V5" stroke="#222" stroke-width="1.1"/><path d="M21 1l2.500 5h-5z" fill="#222"/></g>
<g transform="translate(617.1 2043.0) scale(1)" ><path d="M3 1v22M21 1v22M3 1h18M3 23h18" stroke="#999" stroke-width=".8" fill="none"/><path d="M0 9l24-5M0 14.500l24-5M0 20l24-5" stroke="#2f8fe0" stroke-width="1.6"/></g>
<g transform="translate(653.1 2043.0) scale(1)" ><path d="M1 12l10-10h12v17l-4 4h-18z" fill="#dedede" stroke="#777" stroke-width=".9"/><path d="M19 23v-17l4-4v17z" fill="#bdbdbd"/><path d="M4 9l7-7h6l-8 9z" fill="#62aee6"/></g>
<g transform="translate(689.2 2043.0) scale(1)" ><path d="M1.0 19.0h13.0v2.5h-13.0z" fill="#c8c8c8"/><path d="M14.0 19.0l4.0 -3.0v2.5l-4.0 3.0z" fill="#b0b0b0"/><path d="M1.0 19.0l4.0 -3.0h13.0l-4.0 3.0z" fill="#dedede"/><path d="M1.0 5.0h13.0v15.0h-13.0z" fill="#62aee6"/><path d="M14.0 5.0l4.0 -3.5v15.0l-4.0 3.5z" fill="#3f8fd0"/><path d="M1.0 5.0l4.0 -3.5h13.0l-4.0 3.5z" fill="#85c4f2"/><path d="M21 20V5" stroke="#222" stroke-width="1.1"/><path d="M21 1l2.500 5h-5z" fill="#222"/></g>
<g transform="translate(725.2 2043.0) scale(1)" ><path d="M9.0 3.0h11.0v10.0h-11.0z" fill="#62aee6"/><path d="M20.0 3.0l4.0 -3.0v10.0l-4.0 3.0z" fill="#3f8fd0"/><path d="M9.0 3.0l4.0 -3.0h11.0l-4.0 3.0z" fill="#85c4f2"/><rect x="1.500" y="7.500" width="15" height="15" fill="#f2f2f2" stroke="#777" stroke-width="1"/><rect x="5" y="11" width="11.500" height="11.500" fill="#fff" stroke="#777" stroke-width="1"/></g>
<g transform="translate(761.3 2043.0) scale(1)" ><path d="M3 1v22M21 1v22M3 1h18M3 23h18" stroke="#999" stroke-width=".8" fill="none"/><path d="M0 9l24-5M0 14.500l24-5M0 20l24-5" stroke="#2f8fe0" stroke-width="1.6"/></g>
<g transform="translate(797.4 2043.0) scale(1)" ><path d="M1 12l10-10h12v17l-4 4h-18z" fill="#dedede" stroke="#777" stroke-width=".9"/><path d="M19 23v-17l4-4v17z" fill="#bdbdbd"/><path d="M4 9l7-7h6l-8 9z" fill="#62aee6"/></g>
<g transform="translate(833.4 2043.0) scale(1)" ><path d="M1.0 19.0h13.0v2.5h-13.0z" fill="#c8c8c8"/><path d="M14.0 19.0l4.0 -3.0v2.5l-4.0 3.0z" fill="#b0b0b0"/><path d="M1.0 19.0l4.0 -3.0h13.0l-4.0 3.0z" fill="#dedede"/><path d="M1.0 5.0h13.0v15.0h-13.0z" fill="#62aee6"/><path d="M14.0 5.0l4.0 -3.5v15.0l-4.0 3.5z" fill="#3f8fd0"/><path d="M1.0 5.0l4.0 -3.5h13.0l-4.0 3.5z" fill="#85c4f2"/><path d="M21 20V5" stroke="#222" stroke-width="1.1"/><path d="M21 1l2.500 5h-5z" fill="#222"/></g>
<g transform="translate(869.4 2043.0) scale(1)" ><path d="M9.0 3.0h11.0v10.0h-11.0z" fill="#62aee6"/><path d="M20.0 3.0l4.0 -3.0v10.0l-4.0 3.0z" fill="#3f8fd0"/><path d="M9.0 3.0l4.0 -3.0h11.0l-4.0 3.0z" fill="#85c4f2"/><rect x="1.500" y="7.500" width="15" height="15" fill="#f2f2f2" stroke="#777" stroke-width="1"/><rect x="5" y="11" width="11.500" height="11.500" fill="#fff" stroke="#777" stroke-width="1"/></g>
<g transform="translate(905.5 2043.0) scale(1)" ><path d="M1 6v12c0 6 22 6 22 0v-12z" fill="#62aee6"/><ellipse cx="12" cy="6" rx="11" ry="4.500" fill="#85c4f2"/></g>
<g transform="translate(941.5 2043.0) scale(1)" ><g transform="scale(.5)"><path d="M24 7v34M7 24h34" stroke="#222" stroke-width="3.4"/><path d="M24 0l8.500 11h-17zM24 48l8.500-11h-17zM0 24l11-8.500v17zM48 24l-11-8.500v17z" fill="#222"/></g></g>
<g transform="translate(977.6 2043.0) scale(1)" ><path d="M2 2h18M2 2v18M2 20h8M20 2v8" stroke="#666" stroke-width="1" fill="none"/><path d="M6 6h10M6 6v10" stroke="#777" stroke-width="1" stroke-dasharray="3 2" fill="none"/><path d="M16 6c0 6-4 10-10 10" stroke="#666" stroke-width="1" fill="none"/><rect x="0.7" y="0.7" width="2.600" height="2.600" fill="#2f8fe0"/><rect x="18.7" y="0.7" width="2.600" height="2.600" fill="#2f8fe0"/><rect x="0.7" y="18.7" width="2.600" height="2.600" fill="#2f8fe0"/><rect x="4.7" y="4.7" width="2.600" height="2.600" fill="#2f8fe0"/><rect x="14.7" y="4.7" width="2.600" height="2.600" fill="#2f8fe0"/><path d="M13.500 19.500l7-7 2.600 2.600-7 7-3.400.8z" fill="#f2b33a"/><path d="M20.500 12.500l1.800-1.800 2.600 2.600-1.800 1.800z" fill="#e8303a"/><path d="M13.500 19.500l-.8 3.400 3.400-.8z" fill="#444"/></g>
<g transform="translate(1013.7 2043.0) scale(1)" ><path d="M1.0 19.0h13.0v2.5h-13.0z" fill="#c8c8c8"/><path d="M14.0 19.0l4.0 -3.0v2.5l-4.0 3.0z" fill="#b0b0b0"/><path d="M1.0 19.0l4.0 -3.0h13.0l-4.0 3.0z" fill="#dedede"/><path d="M1.0 5.0h13.0v15.0h-13.0z" fill="#62aee6"/><path d="M14.0 5.0l4.0 -3.5v15.0l-4.0 3.5z" fill="#3f8fd0"/><path d="M1.0 5.0l4.0 -3.5h13.0l-4.0 3.5z" fill="#85c4f2"/><path d="M21 20V5" stroke="#222" stroke-width="1.1"/><path d="M21 1l2.500 5h-5z" fill="#222"/></g>
<g transform="translate(1049.7 2043.0) scale(1)" ><path d="M2 2h18M2 2v18M2 20h8M20 2v8" stroke="#666" stroke-width="1" fill="none"/><path d="M6 6h10M6 6v10" stroke="#777" stroke-width="1" stroke-dasharray="3 2" fill="none"/><path d="M16 6c0 6-4 10-10 10" stroke="#666" stroke-width="1" fill="none"/><rect x="0.7" y="0.7" width="2.600" height="2.600" fill="#2f8fe0"/><rect x="18.7" y="0.7" width="2.600" height="2.600" fill="#2f8fe0"/><rect x="0.7" y="18.7" width="2.600" height="2.600" fill="#2f8fe0"/><rect x="4.7" y="4.7" width="2.600" height="2.600" fill="#2f8fe0"/><rect x="14.7" y="4.7" width="2.600" height="2.600" fill="#2f8fe0"/><path d="M13.500 19.500l7-7 2.600 2.600-7 7-3.400.8z" fill="#f2b33a"/><path d="M20.500 12.500l1.800-1.800 2.600 2.600-1.800 1.800z" fill="#e8303a"/><path d="M13.500 19.500l-.8 3.400 3.400-.8z" fill="#444"/></g>
<g transform="translate(1085.8 2043.0) scale(1)" ><path d="M1.0 19.0h13.0v2.5h-13.0z" fill="#c8c8c8"/><path d="M14.0 19.0l4.0 -3.0v2.5l-4.0 3.0z" fill="#b0b0b0"/><path d="M1.0 19.0l4.0 -3.0h13.0l-4.0 3.0z" fill="#dedede"/><path d="M1.0 5.0h13.0v15.0h-13.0z" fill="#62aee6"/><path d="M14.0 5.0l4.0 -3.5v15.0l-4.0 3.5z" fill="#3f8fd0"/><path d="M1.0 5.0l4.0 -3.5h13.0l-4.0 3.5z" fill="#85c4f2"/><path d="M21 20V5" stroke="#222" stroke-width="1.1"/><path d="M21 1l2.500 5h-5z" fill="#222"/></g>
<g transform="translate(1121.8 2043.0) scale(1)" ><path d="M2 4c0-3 9-3 9 0v5c0 3-9 3-9 0z" fill="#d8d8d8" stroke="#666" stroke-width=".9"/><path d="M3 13v6h5" stroke="#222" stroke-width="1.4" fill="none"/><path d="M11 19l-4-3v6z" fill="#222"/><path d="M13.0 15.0h8.0v8.0h-8.0z" fill="#62aee6"/><path d="M21.0 15.0l3.0 -2.5v8.0l-3.0 2.5z" fill="#3f8fd0"/><path d="M13.0 15.0l3.0 -2.5h8.0l-3.0 2.5z" fill="#85c4f2"/></g>
<g transform="translate(1157.8 2043.0) scale(1)" ><path d="M2 4c0-3 9-3 9 0v5c0 3-9 3-9 0z" fill="#d8d8d8" stroke="#666" stroke-width=".9"/><path d="M3 13v6h5" stroke="#222" stroke-width="1.4" fill="none"/><path d="M11 19l-4-3v6z" fill="#222"/><path d="M13.0 15.0h8.0v8.0h-8.0z" fill="#62aee6"/><path d="M21.0 15.0l3.0 -2.5v8.0l-3.0 2.5z" fill="#3f8fd0"/><path d="M13.0 15.0l3.0 -2.5h8.0l-3.0 2.5z" fill="#85c4f2"/></g>
<g transform="translate(1193.9 2043.0) scale(1)" ><path d="M2 4c0-3 9-3 9 0v5c0 3-9 3-9 0z" fill="#d8d8d8" stroke="#666" stroke-width=".9"/><path d="M3 13v6h5" stroke="#222" stroke-width="1.4" fill="none"/><path d="M11 19l-4-3v6z" fill="#222"/><path d="M13.0 15.0h8.0v8.0h-8.0z" fill="#62aee6"/><path d="M21.0 15.0l3.0 -2.5v8.0l-3.0 2.5z" fill="#3f8fd0"/><path d="M13.0 15.0l3.0 -2.5h8.0l-3.0 2.5z" fill="#85c4f2"/></g>
<g transform="translate(1229.9 2043.0) scale(1)" ><path d="M2 2h18M2 2v18M2 20h8M20 2v8" stroke="#666" stroke-width="1" fill="none"/><path d="M6 6h10M6 6v10" stroke="#777" stroke-width="1" stroke-dasharray="3 2" fill="none"/><path d="M16 6c0 6-4 10-10 10" stroke="#666" stroke-width="1" fill="none"/><rect x="0.7" y="0.7" width="2.600" height="2.600" fill="#2f8fe0"/><rect x="18.7" y="0.7" width="2.600" height="2.600" fill="#2f8fe0"/><rect x="0.7" y="18.7" width="2.600" height="2.600" fill="#2f8fe0"/><rect x="4.7" y="4.7" width="2.600" height="2.600" fill="#2f8fe0"/><rect x="14.7" y="4.7" width="2.600" height="2.600" fill="#2f8fe0"/><path d="M13.500 19.500l7-7 2.600 2.600-7 7-3.400.8z" fill="#f2b33a"/><path d="M20.500 12.500l1.800-1.800 2.600 2.600-1.800 1.800z" fill="#e8303a"/><path d="M13.500 19.500l-.8 3.400 3.400-.8z" fill="#444"/></g>
<g transform="translate(1266.0 2043.0) scale(1)" ><path d="M1.0 19.0h13.0v2.5h-13.0z" fill="#c8c8c8"/><path d="M14.0 19.0l4.0 -3.0v2.5l-4.0 3.0z" fill="#b0b0b0"/><path d="M1.0 19.0l4.0 -3.0h13.0l-4.0 3.0z" fill="#dedede"/><path d="M1.0 5.0h13.0v15.0h-13.0z" fill="#62aee6"/><path d="M14.0 5.0l4.0 -3.5v15.0l-4.0 3.5z" fill="#3f8fd0"/><path d="M1.0 5.0l4.0 -3.5h13.0l-4.0 3.5z" fill="#85c4f2"/><path d="M21 20V5" stroke="#222" stroke-width="1.1"/><path d="M21 1l2.500 5h-5z" fill="#222"/></g>
<g transform="translate(1302.0 2043.0) scale(1)" ><path d="M1.0 19.0h13.0v2.5h-13.0z" fill="#c8c8c8"/><path d="M14.0 19.0l4.0 -3.0v2.5l-4.0 3.0z" fill="#b0b0b0"/><path d="M1.0 19.0l4.0 -3.0h13.0l-4.0 3.0z" fill="#dedede"/><path d="M1.0 5.0h13.0v15.0h-13.0z" fill="#62aee6"/><path d="M14.0 5.0l4.0 -3.5v15.0l-4.0 3.5z" fill="#3f8fd0"/><path d="M1.0 5.0l4.0 -3.5h13.0l-4.0 3.5z" fill="#85c4f2"/><path d="M21 20V5" stroke="#222" stroke-width="1.1"/><path d="M21 1l2.500 5h-5z" fill="#222"/></g>
<g transform="translate(1338.1 2043.0) scale(1)" ><path d="M2 4c0-3 9-3 9 0v5c0 3-9 3-9 0z" fill="#d8d8d8" stroke="#666" stroke-width=".9"/><path d="M3 13v6h5" stroke="#222" stroke-width="1.4" fill="none"/><path d="M11 19l-4-3v6z" fill="#222"/><rect x="13.500" y="13.500" width="10" height="10" rx="2" fill="#dcdcdc" stroke="#666" stroke-width=".9"/></g>
<g transform="translate(1374.2 2043.0) scale(1)" ><path d="M2 4c0-3 9-3 9 0v5c0 3-9 3-9 0z" fill="#d8d8d8" stroke="#666" stroke-width=".9"/><path d="M3 13v6h5" stroke="#222" stroke-width="1.4" fill="none"/><path d="M11 19l-4-3v6z" fill="#222"/><rect x="13.500" y="13.500" width="10" height="10" rx="2" fill="#dcdcdc" stroke="#666" stroke-width=".9"/></g>
<g transform="translate(1410.2 2043.0) scale(1)" ><path d="M2 4c0-3 9-3 9 0v5c0 3-9 3-9 0z" fill="#d8d8d8" stroke="#666" stroke-width=".9"/><path d="M3 13v6h5" stroke="#222" stroke-width="1.4" fill="none"/><path d="M11 19l-4-3v6z" fill="#222"/><rect x="13.500" y="13.500" width="10" height="10" rx="2" fill="#dcdcdc" stroke="#666" stroke-width=".9"/></g>
<g transform="translate(1446.2 2043.0) scale(1)" ><path d="M2 4c0-3 9-3 9 0v5c0 3-9 3-9 0z" fill="#d8d8d8" stroke="#666" stroke-width=".9"/><path d="M3 13v6h5" stroke="#222" stroke-width="1.4" fill="none"/><path d="M11 19l-4-3v6z" fill="#222"/><rect x="13.500" y="13.500" width="10" height="10" rx="2" fill="#dcdcdc" stroke="#666" stroke-width=".9"/></g>
<g transform="translate(1482.3 2043.0) scale(1)" ><path d="M2 4c0-3 9-3 9 0v5c0 3-9 3-9 0z" fill="#d8d8d8" stroke="#666" stroke-width=".9"/><path d="M3 13v6h5" stroke="#222" stroke-width="1.4" fill="none"/><path d="M11 19l-4-3v6z" fill="#222"/><rect x="13.500" y="13.500" width="10" height="10" rx="2" fill="#dcdcdc" stroke="#666" stroke-width=".9"/></g>
<g transform="translate(1518.3 2043.0) scale(1)" ><path d="M2 4c0-3 9-3 9 0v5c0 3-9 3-9 0z" fill="#d8d8d8" stroke="#666" stroke-width=".9"/><path d="M3 13v6h5" stroke="#222" stroke-width="1.4" fill="none"/><path d="M11 19l-4-3v6z" fill="#222"/><rect x="13.500" y="13.500" width="10" height="10" rx="2" fill="#dcdcdc" stroke="#666" stroke-width=".9"/></g>
<g transform="translate(1554.4 2043.0) scale(1)" ><path d="M2 4c0-3 9-3 9 0v5c0 3-9 3-9 0z" fill="#d8d8d8" stroke="#666" stroke-width=".9"/><path d="M3 13v6h5" stroke="#222" stroke-width="1.4" fill="none"/><path d="M11 19l-4-3v6z" fill="#222"/><rect x="13.500" y="13.500" width="10" height="10" rx="2" fill="#dcdcdc" stroke="#666" stroke-width=".9"/></g>
<g transform="translate(1590.4 2043.0) scale(1)" ><path d="M2 4c0-3 9-3 9 0v5c0 3-9 3-9 0z" fill="#d8d8d8" stroke="#666" stroke-width=".9"/><path d="M3 13v6h5" stroke="#222" stroke-width="1.4" fill="none"/><path d="M11 19l-4-3v6z" fill="#222"/><rect x="13.500" y="13.500" width="10" height="10" rx="2" fill="#dcdcdc" stroke="#666" stroke-width=".9"/></g>
<g transform="translate(1626.5 2043.0) scale(1)" ><path d="M2 2h18M2 2v18M2 20h8M20 2v8" stroke="#666" stroke-width="1" fill="none"/><path d="M6 6h10M6 6v10" stroke="#777" stroke-width="1" stroke-dasharray="3 2" fill="none"/><path d="M16 6c0 6-4 10-10 10" stroke="#666" stroke-width="1" fill="none"/><rect x="0.7" y="0.7" width="2.600" height="2.600" fill="#2f8fe0"/><rect x="18.7" y="0.7" width="2.600" height="2.600" fill="#2f8fe0"/><rect x="0.7" y="18.7" width="2.600" height="2.600" fill="#2f8fe0"/><rect x="4.7" y="4.7" width="2.600" height="2.600" fill="#2f8fe0"/><rect x="14.7" y="4.7" width="2.600" height="2.600" fill="#2f8fe0"/><path d="M13.500 19.500l7-7 2.600 2.600-7 7-3.400.8z" fill="#f2b33a"/><path d="M20.500 12.500l1.800-1.800 2.600 2.600-1.800 1.800z" fill="#e8303a"/><path d="M13.500 19.500l-.8 3.400 3.400-.8z" fill="#444"/></g>
<g transform="translate(1662.5 2043.0) scale(1)" ><path d="M1.0 19.0h13.0v2.5h-13.0z" fill="#c8c8c8"/><path d="M14.0 19.0l4.0 -3.0v2.5l-4.0 3.0z" fill="#b0b0b0"/><path d="M1.0 19.0l4.0 -3.0h13.0l-4.0 3.0z" fill="#dedede"/><path d="M1.0 5.0h13.0v15.0h-13.0z" fill="#62aee6"/><path d="M14.0 5.0l4.0 -3.5v15.0l-4.0 3.5z" fill="#3f8fd0"/><path d="M1.0 5.0l4.0 -3.5h13.0l-4.0 3.5z" fill="#85c4f2"/><path d="M21 20V5" stroke="#222" stroke-width="1.1"/><path d="M21 1l2.500 5h-5z" fill="#222"/></g>
<g transform="translate(1698.6 2043.0) scale(1)" ><path d="M1.0 19.0h13.0v2.5h-13.0z" fill="#c8c8c8"/><path d="M14.0 19.0l4.0 -3.0v2.5l-4.0 3.0z" fill="#b0b0b0"/><path d="M1.0 19.0l4.0 -3.0h13.0l-4.0 3.0z" fill="#dedede"/><path d="M1.0 5.0h13.0v15.0h-13.0z" fill="#62aee6"/><path d="M14.0 5.0l4.0 -3.5v15.0l-4.0 3.5z" fill="#3f8fd0"/><path d="M1.0 5.0l4.0 -3.5h13.0l-4.0 3.5z" fill="#85c4f2"/><path d="M21 20V5" stroke="#222" stroke-width="1.1"/><path d="M21 1l2.500 5h-5z" fill="#222"/></g>
<g transform="translate(1734.7 2043.0) scale(1)" ><path d="M1 14c3-7 8-10 12-11l10 3c-2 3-2 10 1 14l-10 3c-6 0-11-3-13-9z" fill="#5dc27a" opacity=".85"/><path d="M5 16c2-5 5-8 8-9l7 2v12l-7 2c-4-1-6-3-8-7z" fill="#e8e8e8" stroke="#888" stroke-width=".7"/><path d="M10 3l5-2v22l-5 1z" fill="#e59866" stroke="#c97840" stroke-width=".6"/></g>
<g transform="translate(1770.7 2043.0) scale(1)" ><path d="M1 14c3-7 8-10 12-11l10 3c-2 3-2 10 1 14l-10 3c-6 0-11-3-13-9z" fill="#5dc27a" opacity=".85"/><path d="M5 16c2-5 5-8 8-9l7 2v12l-7 2c-4-1-6-3-8-7z" fill="#e8e8e8" stroke="#888" stroke-width=".7"/><path d="M10 3l5-2v22l-5 1z" fill="#e59866" stroke="#c97840" stroke-width=".6"/></g>
<g transform="translate(1806.8 2043.0) scale(1)" ><path d="M2.0 15.0h16.0v7.0h-16.0z" fill="#dcdcdc" stroke="#888" stroke-width="0.7" stroke-linejoin="round"/><path d="M18.0 15.0l5.0 -3.5v7.0l-5.0 3.5z" fill="#b7b7b7" stroke="#888" stroke-width="0.7" stroke-linejoin="round"/><path d="M2.0 15.0l5.0 -3.5h16.0l-5.0 3.5z" fill="#eeeeee" stroke="#888" stroke-width="0.7" stroke-linejoin="round"/><path d="M2.0 4.0h16.0v7.0h-16.0z" fill="#62aee6"/><path d="M18.0 4.0l5.0 -3.5v7.0l-5.0 3.5z" fill="#3f8fd0"/><path d="M2.0 4.0l5.0 -3.5h16.0l-5.0 3.5z" fill="#85c4f2"/><path d="M0 13.500h18l6-5" stroke="#2a8be0" stroke-width="1.2" fill="none"/></g>
<g transform="translate(1842.8 2043.0) scale(1)" ><path d="M2 2h18M2 2v18M2 20h8M20 2v8" stroke="#666" stroke-width="1" fill="none"/><path d="M6 6h10M6 6v10" stroke="#777" stroke-width="1" stroke-dasharray="3 2" fill="none"/><path d="M16 6c0 6-4 10-10 10" stroke="#666" stroke-width="1" fill="none"/><rect x="0.7" y="0.7" width="2.600" height="2.600" fill="#2f8fe0"/><rect x="18.7" y="0.7" width="2.600" height="2.600" fill="#2f8fe0"/><rect x="0.7" y="18.7" width="2.600" height="2.600" fill="#2f8fe0"/><rect x="4.7" y="4.7" width="2.600" height="2.600" fill="#2f8fe0"/><rect x="14.7" y="4.7" width="2.600" height="2.600" fill="#2f8fe0"/><path d="M13.500 19.500l7-7 2.600 2.600-7 7-3.400.8z" fill="#f2b33a"/><path d="M20.500 12.500l1.800-1.800 2.600 2.600-1.800 1.800z" fill="#e8303a"/><path d="M13.500 19.500l-.8 3.400 3.400-.8z" fill="#444"/></g>
<g transform="translate(1878.8 2043.0) scale(1)" ><path d="M1.0 19.0h13.0v2.5h-13.0z" fill="#c8c8c8"/><path d="M14.0 19.0l4.0 -3.0v2.5l-4.0 3.0z" fill="#b0b0b0"/><path d="M1.0 19.0l4.0 -3.0h13.0l-4.0 3.0z" fill="#dedede"/><path d="M1.0 5.0h13.0v15.0h-13.0z" fill="#62aee6"/><path d="M14.0 5.0l4.0 -3.5v15.0l-4.0 3.5z" fill="#3f8fd0"/><path d="M1.0 5.0l4.0 -3.5h13.0l-4.0 3.5z" fill="#85c4f2"/><path d="M21 20V5" stroke="#222" stroke-width="1.1"/><path d="M21 1l2.500 5h-5z" fill="#222"/></g>
<g transform="translate(1914.9 2043.0) scale(1)" ><path d="M2 2h18M2 2v18M2 20h8M20 2v8" stroke="#666" stroke-width="1" fill="none"/><path d="M6 6h10M6 6v10" stroke="#777" stroke-width="1" stroke-dasharray="3 2" fill="none"/><path d="M16 6c0 6-4 10-10 10" stroke="#666" stroke-width="1" fill="none"/><rect x="0.7" y="0.7" width="2.600" height="2.600" fill="#2f8fe0"/><rect x="18.7" y="0.7" width="2.600" height="2.600" fill="#2f8fe0"/><rect x="0.7" y="18.7" width="2.600" height="2.600" fill="#2f8fe0"/><rect x="4.7" y="4.7" width="2.600" height="2.600" fill="#2f8fe0"/><rect x="14.7" y="4.7" width="2.600" height="2.600" fill="#2f8fe0"/><path d="M13.500 19.500l7-7 2.600 2.600-7 7-3.400.8z" fill="#f2b33a"/><path d="M20.500 12.500l1.800-1.800 2.600 2.600-1.800 1.800z" fill="#e8303a"/><path d="M13.500 19.500l-.8 3.400 3.400-.8z" fill="#444"/></g>
<g transform="translate(1950.9 2043.0) scale(1)" ><path d="M1.0 19.0h13.0v2.5h-13.0z" fill="#c8c8c8"/><path d="M14.0 19.0l4.0 -3.0v2.5l-4.0 3.0z" fill="#b0b0b0"/><path d="M1.0 19.0l4.0 -3.0h13.0l-4.0 3.0z" fill="#dedede"/><path d="M1.0 5.0h13.0v15.0h-13.0z" fill="#62aee6"/><path d="M14.0 5.0l4.0 -3.5v15.0l-4.0 3.5z" fill="#3f8fd0"/><path d="M1.0 5.0l4.0 -3.5h13.0l-4.0 3.5z" fill="#85c4f2"/><path d="M21 20V5" stroke="#222" stroke-width="1.1"/><path d="M21 1l2.500 5h-5z" fill="#222"/></g>
<g transform="translate(1987.0 2043.0) scale(1)" ><path d="M1 8l6-6h5c7 0 12 4 12 11v6l-5 5h-18z" fill="#dedede" stroke="#777" stroke-width=".9"/><path d="M10 6l3-4c7 0 11 4 11 11l-5 4c0-6-3-10-9-11z" fill="#62aee6"/></g>
<g transform="translate(2023.0 2043.0) scale(1)" ><path d="M1 8l6-6h5c7 0 12 4 12 11v6l-5 5h-18z" fill="#dedede" stroke="#777" stroke-width=".9"/><path d="M10 6l3-4c7 0 11 4 11 11l-5 4c0-6-3-10-9-11z" fill="#62aee6"/></g>
<g transform="translate(2059.1 2043.0) scale(1)" ><path d="M1 8l6-6h5c7 0 12 4 12 11v6l-5 5h-18z" fill="#dedede" stroke="#777" stroke-width=".9"/><path d="M10 6l3-4c7 0 11 4 11 11l-5 4c0-6-3-10-9-11z" fill="#62aee6"/></g>
<g transform="translate(2095.2 2043.0) scale(1)" ><path d="M2.0 15.0h16.0v7.0h-16.0z" fill="#dcdcdc" stroke="#888" stroke-width="0.7" stroke-linejoin="round"/><path d="M18.0 15.0l5.0 -3.5v7.0l-5.0 3.5z" fill="#b7b7b7" stroke="#888" stroke-width="0.7" stroke-linejoin="round"/><path d="M2.0 15.0l5.0 -3.5h16.0l-5.0 3.5z" fill="#eeeeee" stroke="#888" stroke-width="0.7" stroke-linejoin="round"/><path d="M2.0 4.0h16.0v7.0h-16.0z" fill="#62aee6"/><path d="M18.0 4.0l5.0 -3.5v7.0l-5.0 3.5z" fill="#3f8fd0"/><path d="M2.0 4.0l5.0 -3.5h16.0l-5.0 3.5z" fill="#85c4f2"/><path d="M0 13.500h18l6-5" stroke="#2a8be0" stroke-width="1.2" fill="none"/></g>
<g transform="translate(2131.2 2043.0) scale(1)" ><path d="M2.0 15.0h16.0v7.0h-16.0z" fill="#dcdcdc" stroke="#888" stroke-width="0.7" stroke-linejoin="round"/><path d="M18.0 15.0l5.0 -3.5v7.0l-5.0 3.5z" fill="#b7b7b7" stroke="#888" stroke-width="0.7" stroke-linejoin="round"/><path d="M2.0 15.0l5.0 -3.5h16.0l-5.0 3.5z" fill="#eeeeee" stroke="#888" stroke-width="0.7" stroke-linejoin="round"/><path d="M2.0 4.0h16.0v7.0h-16.0z" fill="#62aee6"/><path d="M18.0 4.0l5.0 -3.5v7.0l-5.0 3.5z" fill="#3f8fd0"/><path d="M2.0 4.0l5.0 -3.5h16.0l-5.0 3.5z" fill="#85c4f2"/><path d="M0 13.500h18l6-5" stroke="#2a8be0" stroke-width="1.2" fill="none"/></g>
<g transform="translate(2167.2 2043.0) scale(1)" ><path d="M2 2h18M2 2v18M2 20h8M20 2v8" stroke="#666" stroke-width="1" fill="none"/><path d="M6 6h10M6 6v10" stroke="#777" stroke-width="1" stroke-dasharray="3 2" fill="none"/><path d="M16 6c0 6-4 10-10 10" stroke="#666" stroke-width="1" fill="none"/><rect x="0.7" y="0.7" width="2.600" height="2.600" fill="#2f8fe0"/><rect x="18.7" y="0.7" width="2.600" height="2.600" fill="#2f8fe0"/><rect x="0.7" y="18.7" width="2.600" height="2.600" fill="#2f8fe0"/><rect x="4.7" y="4.7" width="2.600" height="2.600" fill="#2f8fe0"/><rect x="14.7" y="4.7" width="2.600" height="2.600" fill="#2f8fe0"/><path d="M13.500 19.500l7-7 2.600 2.600-7 7-3.400.8z" fill="#f2b33a"/><path d="M20.500 12.500l1.800-1.800 2.600 2.600-1.800 1.800z" fill="#e8303a"/><path d="M13.500 19.500l-.8 3.400 3.400-.8z" fill="#444"/></g>
<g transform="translate(2203.3 2043.0) scale(1)" ><path d="M1.0 19.0h13.0v2.5h-13.0z" fill="#c8c8c8"/><path d="M14.0 19.0l4.0 -3.0v2.5l-4.0 3.0z" fill="#b0b0b0"/><path d="M1.0 19.0l4.0 -3.0h13.0l-4.0 3.0z" fill="#dedede"/><path d="M1.0 5.0h13.0v15.0h-13.0z" fill="#62aee6"/><path d="M14.0 5.0l4.0 -3.5v15.0l-4.0 3.5z" fill="#3f8fd0"/><path d="M1.0 5.0l4.0 -3.5h13.0l-4.0 3.5z" fill="#85c4f2"/><path d="M21 20V5" stroke="#222" stroke-width="1.1"/><path d="M21 1l2.500 5h-5z" fill="#222"/></g>
<g transform="translate(2239.3 2043.0) scale(1)" ><path d="M1 8l6-6h5c7 0 12 4 12 11v6l-5 5h-18z" fill="#dedede" stroke="#777" stroke-width=".9"/><path d="M10 6l3-4c7 0 11 4 11 11l-5 4c0-6-3-10-9-11z" fill="#62aee6"/></g>
<g transform="translate(2275.4 2043.0) scale(1)" ><path d="M2 2h18M2 2v18M2 20h8M20 2v8" stroke="#666" stroke-width="1" fill="none"/><path d="M6 6h10M6 6v10" stroke="#777" stroke-width="1" stroke-dasharray="3 2" fill="none"/><path d="M16 6c0 6-4 10-10 10" stroke="#666" stroke-width="1" fill="none"/><rect x="0.7" y="0.7" width="2.600" height="2.600" fill="#2f8fe0"/><rect x="18.7" y="0.7" width="2.600" height="2.600" fill="#2f8fe0"/><rect x="0.7" y="18.7" width="2.600" height="2.600" fill="#2f8fe0"/><rect x="4.7" y="4.7" width="2.600" height="2.600" fill="#2f8fe0"/><rect x="14.7" y="4.7" width="2.600" height="2.600" fill="#2f8fe0"/><path d="M13.500 19.500l7-7 2.600 2.600-7 7-3.400.8z" fill="#f2b33a"/><path d="M20.500 12.500l1.800-1.800 2.600 2.600-1.800 1.800z" fill="#e8303a"/><path d="M13.500 19.500l-.8 3.400 3.400-.8z" fill="#444"/></g>
<g transform="translate(2311.4 2043.0) scale(1)" ><path d="M1.0 19.0h13.0v2.5h-13.0z" fill="#c8c8c8"/><path d="M14.0 19.0l4.0 -3.0v2.5l-4.0 3.0z" fill="#b0b0b0"/><path d="M1.0 19.0l4.0 -3.0h13.0l-4.0 3.0z" fill="#dedede"/><path d="M1.0 5.0h13.0v15.0h-13.0z" fill="#62aee6"/><path d="M14.0 5.0l4.0 -3.5v15.0l-4.0 3.5z" fill="#3f8fd0"/><path d="M1.0 5.0l4.0 -3.5h13.0l-4.0 3.5z" fill="#85c4f2"/><path d="M21 20V5" stroke="#222" stroke-width="1.1"/><path d="M21 1l2.500 5h-5z" fill="#222"/></g>
<g transform="translate(2347.5 2043.0) scale(1)" ><path d="M1.0 19.0h13.0v2.5h-13.0z" fill="#c8c8c8"/><path d="M14.0 19.0l4.0 -3.0v2.5l-4.0 3.0z" fill="#b0b0b0"/><path d="M1.0 19.0l4.0 -3.0h13.0l-4.0 3.0z" fill="#dedede"/><path d="M1.0 5.0h13.0v15.0h-13.0z" fill="#62aee6"/><path d="M14.0 5.0l4.0 -3.5v15.0l-4.0 3.5z" fill="#3f8fd0"/><path d="M1.0 5.0l4.0 -3.5h13.0l-4.0 3.5z" fill="#85c4f2"/><path d="M21 20V5" stroke="#222" stroke-width="1.1"/><path d="M21 1l2.500 5h-5z" fill="#222"/></g>
<g transform="translate(2383.5 2043.0) scale(1)" ><path d="M1.0 19.0h13.0v2.5h-13.0z" fill="#c8c8c8"/><path d="M14.0 19.0l4.0 -3.0v2.5l-4.0 3.0z" fill="#b0b0b0"/><path d="M1.0 19.0l4.0 -3.0h13.0l-4.0 3.0z" fill="#dedede"/><path d="M1.0 5.0h13.0v15.0h-13.0z" fill="#62aee6"/><path d="M14.0 5.0l4.0 -3.5v15.0l-4.0 3.5z" fill="#3f8fd0"/><path d="M1.0 5.0l4.0 -3.5h13.0l-4.0 3.5z" fill="#85c4f2"/><path d="M21 20V5" stroke="#222" stroke-width="1.1"/><path d="M21 1l2.500 5h-5z" fill="#222"/></g>
<g transform="translate(2419.6 2043.0) scale(1)" ><path d="M2 2h18M2 2v18M2 20h8M20 2v8" stroke="#666" stroke-width="1" fill="none"/><path d="M6 6h10M6 6v10" stroke="#777" stroke-width="1" stroke-dasharray="3 2" fill="none"/><path d="M16 6c0 6-4 10-10 10" stroke="#666" stroke-width="1" fill="none"/><rect x="0.7" y="0.7" width="2.600" height="2.600" fill="#2f8fe0"/><rect x="18.7" y="0.7" width="2.600" height="2.600" fill="#2f8fe0"/><rect x="0.7" y="18.7" width="2.600" height="2.600" fill="#2f8fe0"/><rect x="4.7" y="4.7" width="2.600" height="2.600" fill="#2f8fe0"/><rect x="14.7" y="4.7" width="2.600" height="2.600" fill="#2f8fe0"/><path d="M13.500 19.500l7-7 2.600 2.600-7 7-3.400.8z" fill="#f2b33a"/><path d="M20.500 12.500l1.800-1.800 2.600 2.600-1.800 1.800z" fill="#e8303a"/><path d="M13.500 19.500l-.8 3.400 3.400-.8z" fill="#444"/></g>
<g transform="translate(2455.6 2043.0) scale(1)" ><path d="M1.0 19.0h13.0v2.5h-13.0z" fill="#c8c8c8"/><path d="M14.0 19.0l4.0 -3.0v2.5l-4.0 3.0z" fill="#b0b0b0"/><path d="M1.0 19.0l4.0 -3.0h13.0l-4.0 3.0z" fill="#dedede"/><path d="M1.0 5.0h13.0v15.0h-13.0z" fill="#62aee6"/><path d="M14.0 5.0l4.0 -3.5v15.0l-4.0 3.5z" fill="#3f8fd0"/><path d="M1.0 5.0l4.0 -3.5h13.0l-4.0 3.5z" fill="#85c4f2"/><path d="M21 20V5" stroke="#222" stroke-width="1.1"/><path d="M21 1l2.500 5h-5z" fill="#222"/></g>
<g transform="translate(2491.7 2043.0) scale(1)" ><path d="M1.0 19.0h13.0v2.5h-13.0z" fill="#c8c8c8"/><path d="M14.0 19.0l4.0 -3.0v2.5l-4.0 3.0z" fill="#b0b0b0"/><path d="M1.0 19.0l4.0 -3.0h13.0l-4.0 3.0z" fill="#dedede"/><path d="M1.0 5.0h13.0v15.0h-13.0z" fill="#62aee6"/><path d="M14.0 5.0l4.0 -3.5v15.0l-4.0 3.5z" fill="#3f8fd0"/><path d="M1.0 5.0l4.0 -3.5h13.0l-4.0 3.5z" fill="#85c4f2"/><path d="M21 20V5" stroke="#222" stroke-width="1.1"/><path d="M21 1l2.500 5h-5z" fill="#222"/></g>
<g transform="translate(2527.7 2043.0) scale(1)" ><path d="M1.0 19.0h13.0v2.5h-13.0z" fill="#c8c8c8"/><path d="M14.0 19.0l4.0 -3.0v2.5l-4.0 3.0z" fill="#b0b0b0"/><path d="M1.0 19.0l4.0 -3.0h13.0l-4.0 3.0z" fill="#dedede"/><path d="M1.0 5.0h13.0v15.0h-13.0z" fill="#62aee6"/><path d="M14.0 5.0l4.0 -3.5v15.0l-4.0 3.5z" fill="#3f8fd0"/><path d="M1.0 5.0l4.0 -3.5h13.0l-4.0 3.5z" fill="#85c4f2"/><path d="M21 20V5" stroke="#222" stroke-width="1.1"/><path d="M21 1l2.500 5h-5z" fill="#222"/></g>
<g transform="translate(2563.8 2043.0) scale(1)" ><path d="M2.0 15.0h16.0v7.0h-16.0z" fill="#dcdcdc" stroke="#888" stroke-width="0.7" stroke-linejoin="round"/><path d="M18.0 15.0l5.0 -3.5v7.0l-5.0 3.5z" fill="#b7b7b7" stroke="#888" stroke-width="0.7" stroke-linejoin="round"/><path d="M2.0 15.0l5.0 -3.5h16.0l-5.0 3.5z" fill="#eeeeee" stroke="#888" stroke-width="0.7" stroke-linejoin="round"/><path d="M2.0 4.0h16.0v7.0h-16.0z" fill="#62aee6"/><path d="M18.0 4.0l5.0 -3.5v7.0l-5.0 3.5z" fill="#3f8fd0"/><path d="M2.0 4.0l5.0 -3.5h16.0l-5.0 3.5z" fill="#85c4f2"/><path d="M0 13.500h18l6-5" stroke="#2a8be0" stroke-width="1.2" fill="none"/></g>
<g transform="translate(2599.8 2043.0) scale(1)" ><path d="M2.0 15.0h16.0v7.0h-16.0z" fill="#dcdcdc" stroke="#888" stroke-width="0.7" stroke-linejoin="round"/><path d="M18.0 15.0l5.0 -3.5v7.0l-5.0 3.5z" fill="#b7b7b7" stroke="#888" stroke-width="0.7" stroke-linejoin="round"/><path d="M2.0 15.0l5.0 -3.5h16.0l-5.0 3.5z" fill="#eeeeee" stroke="#888" stroke-width="0.7" stroke-linejoin="round"/><path d="M2.0 4.0h16.0v7.0h-16.0z" fill="#62aee6"/><path d="M18.0 4.0l5.0 -3.5v7.0l-5.0 3.5z" fill="#3f8fd0"/><path d="M2.0 4.0l5.0 -3.5h16.0l-5.0 3.5z" fill="#85c4f2"/><path d="M0 13.500h18l6-5" stroke="#2a8be0" stroke-width="1.2" fill="none"/></g>
<g transform="translate(2635.9 2043.0) scale(1)" ><path d="M2 2h18M2 2v18M2 20h8M20 2v8" stroke="#666" stroke-width="1" fill="none"/><path d="M6 6h10M6 6v10" stroke="#777" stroke-width="1" stroke-dasharray="3 2" fill="none"/><path d="M16 6c0 6-4 10-10 10" stroke="#666" stroke-width="1" fill="none"/><rect x="0.7" y="0.7" width="2.600" height="2.600" fill="#2f8fe0"/><rect x="18.7" y="0.7" width="2.600" height="2.600" fill="#2f8fe0"/><rect x="0.7" y="18.7" width="2.600" height="2.600" fill="#2f8fe0"/><rect x="4.7" y="4.7" width="2.600" height="2.600" fill="#2f8fe0"/><rect x="14.7" y="4.7" width="2.600" height="2.600" fill="#2f8fe0"/><path d="M13.500 19.500l7-7 2.600 2.600-7 7-3.400.8z" fill="#f2b33a"/><path d="M20.500 12.500l1.800-1.800 2.600 2.600-1.800 1.800z" fill="#e8303a"/><path d="M13.500 19.500l-.8 3.400 3.400-.8z" fill="#444"/></g>
<g transform="translate(2671.9 2043.0) scale(1)" ><path d="M1.0 19.0h13.0v2.5h-13.0z" fill="#c8c8c8"/><path d="M14.0 19.0l4.0 -3.0v2.5l-4.0 3.0z" fill="#b0b0b0"/><path d="M1.0 19.0l4.0 -3.0h13.0l-4.0 3.0z" fill="#dedede"/><path d="M1.0 5.0h13.0v15.0h-13.0z" fill="#62aee6"/><path d="M14.0 5.0l4.0 -3.5v15.0l-4.0 3.5z" fill="#3f8fd0"/><path d="M1.0 5.0l4.0 -3.5h13.0l-4.0 3.5z" fill="#85c4f2"/><path d="M21 20V5" stroke="#222" stroke-width="1.1"/><path d="M21 1l2.500 5h-5z" fill="#222"/></g>
<g transform="translate(2708.0 2043.0) scale(1)" ><path d="M1.0 19.0h13.0v2.5h-13.0z" fill="#c8c8c8"/><path d="M14.0 19.0l4.0 -3.0v2.5l-4.0 3.0z" fill="#b0b0b0"/><path d="M1.0 19.0l4.0 -3.0h13.0l-4.0 3.0z" fill="#dedede"/><path d="M1.0 5.0h13.0v15.0h-13.0z" fill="#62aee6"/><path d="M14.0 5.0l4.0 -3.5v15.0l-4.0 3.5z" fill="#3f8fd0"/><path d="M1.0 5.0l4.0 -3.5h13.0l-4.0 3.5z" fill="#85c4f2"/><path d="M21 20V5" stroke="#222" stroke-width="1.1"/><path d="M21 1l2.500 5h-5z" fill="#222"/></g>
<g transform="translate(2744.0 2043.0) scale(1)" ><path d="M2 2h18M2 2v18M2 20h8M20 2v8" stroke="#666" stroke-width="1" fill="none"/><path d="M6 6h10M6 6v10" stroke="#777" stroke-width="1" stroke-dasharray="3 2" fill="none"/><path d="M16 6c0 6-4 10-10 10" stroke="#666" stroke-width="1" fill="none"/><rect x="0.7" y="0.7" width="2.600" height="2.600" fill="#2f8fe0"/><rect x="18.7" y="0.7" width="2.600" height="2.600" fill="#2f8fe0"/><rect x="0.7" y="18.7" width="2.600" height="2.600" fill="#2f8fe0"/><rect x="4.7" y="4.7" width="2.600" height="2.600" fill="#2f8fe0"/><rect x="14.7" y="4.7" width="2.600" height="2.600" fill="#2f8fe0"/><path d="M13.500 19.500l7-7 2.600 2.600-7 7-3.400.8z" fill="#f2b33a"/><path d="M20.500 12.500l1.800-1.800 2.600 2.600-1.800 1.800z" fill="#e8303a"/><path d="M13.500 19.500l-.8 3.400 3.400-.8z" fill="#444"/></g>
<g transform="translate(2780.1 2043.0) scale(1)" ><path d="M1.0 19.0h13.0v2.5h-13.0z" fill="#c8c8c8"/><path d="M14.0 19.0l4.0 -3.0v2.5l-4.0 3.0z" fill="#b0b0b0"/><path d="M1.0 19.0l4.0 -3.0h13.0l-4.0 3.0z" fill="#dedede"/><path d="M1.0 5.0h13.0v15.0h-13.0z" fill="#62aee6"/><path d="M14.0 5.0l4.0 -3.5v15.0l-4.0 3.5z" fill="#3f8fd0"/><path d="M1.0 5.0l4.0 -3.5h13.0l-4.0 3.5z" fill="#85c4f2"/><path d="M21 20V5" stroke="#222" stroke-width="1.1"/><path d="M21 1l2.500 5h-5z" fill="#222"/></g>
<g transform="translate(2816.1 2043.0) scale(1)" ><path d="M1.0 19.0h13.0v2.5h-13.0z" fill="#c8c8c8"/><path d="M14.0 19.0l4.0 -3.0v2.5l-4.0 3.0z" fill="#b0b0b0"/><path d="M1.0 19.0l4.0 -3.0h13.0l-4.0 3.0z" fill="#dedede"/><path d="M1.0 5.0h13.0v15.0h-13.0z" fill="#62aee6"/><path d="M14.0 5.0l4.0 -3.5v15.0l-4.0 3.5z" fill="#3f8fd0"/><path d="M1.0 5.0l4.0 -3.5h13.0l-4.0 3.5z" fill="#85c4f2"/><path d="M21 20V5" stroke="#222" stroke-width="1.1"/><path d="M21 1l2.500 5h-5z" fill="#222"/></g>
<g transform="translate(2852.2 2043.0) scale(1)" ><path d="M1.0 19.0h13.0v2.5h-13.0z" fill="#c8c8c8"/><path d="M14.0 19.0l4.0 -3.0v2.5l-4.0 3.0z" fill="#b0b0b0"/><path d="M1.0 19.0l4.0 -3.0h13.0l-4.0 3.0z" fill="#dedede"/><path d="M1.0 5.0h13.0v15.0h-13.0z" fill="#62aee6"/><path d="M14.0 5.0l4.0 -3.5v15.0l-4.0 3.5z" fill="#3f8fd0"/><path d="M1.0 5.0l4.0 -3.5h13.0l-4.0 3.5z" fill="#85c4f2"/><path d="M21 20V5" stroke="#222" stroke-width="1.1"/><path d="M21 1l2.500 5h-5z" fill="#222"/></g>
<g transform="translate(2888.2 2043.0) scale(1)" ><path d="M1.0 19.0h13.0v2.5h-13.0z" fill="#c8c8c8"/><path d="M14.0 19.0l4.0 -3.0v2.5l-4.0 3.0z" fill="#b0b0b0"/><path d="M1.0 19.0l4.0 -3.0h13.0l-4.0 3.0z" fill="#dedede"/><path d="M1.0 5.0h13.0v15.0h-13.0z" fill="#62aee6"/><path d="M14.0 5.0l4.0 -3.5v15.0l-4.0 3.5z" fill="#3f8fd0"/><path d="M1.0 5.0l4.0 -3.5h13.0l-4.0 3.5z" fill="#85c4f2"/><path d="M21 20V5" stroke="#222" stroke-width="1.1"/><path d="M21 1l2.500 5h-5z" fill="#222"/></g>
<g transform="translate(2924.3 2043.0) scale(1)" ><path d="M1.0 19.0h13.0v2.5h-13.0z" fill="#c8c8c8"/><path d="M14.0 19.0l4.0 -3.0v2.5l-4.0 3.0z" fill="#b0b0b0"/><path d="M1.0 19.0l4.0 -3.0h13.0l-4.0 3.0z" fill="#dedede"/><path d="M1.0 5.0h13.0v15.0h-13.0z" fill="#62aee6"/><path d="M14.0 5.0l4.0 -3.5v15.0l-4.0 3.5z" fill="#3f8fd0"/><path d="M1.0 5.0l4.0 -3.5h13.0l-4.0 3.5z" fill="#85c4f2"/><path d="M21 20V5" stroke="#222" stroke-width="1.1"/><path d="M21 1l2.500 5h-5z" fill="#222"/></g>
<g transform="translate(2960.3 2043.0) scale(1)" ><path d="M1.0 19.0h13.0v2.5h-13.0z" fill="#c8c8c8"/><path d="M14.0 19.0l4.0 -3.0v2.5l-4.0 3.0z" fill="#b0b0b0"/><path d="M1.0 19.0l4.0 -3.0h13.0l-4.0 3.0z" fill="#dedede"/><path d="M1.0 5.0h13.0v15.0h-13.0z" fill="#62aee6"/><path d="M14.0 5.0l4.0 -3.5v15.0l-4.0 3.5z" fill="#3f8fd0"/><path d="M1.0 5.0l4.0 -3.5h13.0l-4.0 3.5z" fill="#85c4f2"/><path d="M21 20V5" stroke="#222" stroke-width="1.1"/><path d="M21 1l2.500 5h-5z" fill="#222"/></g>
<path d="M268.6 2072.800v6.500M304.7 2072.800v6.500M340.7 2072.800v6.500M376.8 2072.800v6.500M412.8 2072.800v6.500M448.9 2072.800v6.500M484.9 2072.800v6.500M521.0 2072.800v6.500M557.0 2072.800v6.500M593.0 2072.800v6.500M629.1 2072.800v6.500M665.1 2072.800v6.500M701.2 2072.800v6.500M737.2 2072.800v6.500M773.3 2072.800v6.500M809.4 2072.800v6.500M845.4 2072.800v6.500M881.4 2072.800v6.500M917.5 2072.800v6.500M953.5 2072.800v6.500M989.6 2072.800v6.500M1025.7 2072.800v6.500M1061.7 2072.800v6.500M1097.8 2072.800v6.500M1133.8 2072.800v6.500M1169.8 2072.800v6.500" stroke="#7a7a7a" stroke-width="1.600"/>
<path d="M1205.9 2072.800v6.500M1241.9 2072.800v6.500M1278.0 2072.800v6.500M1314.0 2072.800v6.500M1350.1 2072.800v6.500M1386.2 2072.800v6.500M1422.2 2072.800v6.500M1458.2 2072.800v6.500M1494.3 2072.800v6.500M1530.3 2072.800v6.500M1566.4 2072.800v6.500M1602.4 2072.800v6.500M1638.5 2072.800v6.500M1674.5 2072.800v6.500M1710.6 2072.800v6.500M1746.7 2072.800v6.500M1782.7 2072.800v6.500M1818.8 2072.800v6.500M1854.8 2072.800v6.500M1890.8 2072.800v6.500M1926.9 2072.800v6.500M1962.9 2072.800v6.500M1999.0 2072.800v6.500M2035.0 2072.800v6.500M2071.1 2072.800v6.500M2107.2 2072.800v6.500M2143.2 2072.800v6.500M2179.2 2072.800v6.500M2215.3 2072.800v6.500M2251.3 2072.800v6.500M2287.4 2072.800v6.500M2323.4 2072.800v6.500M2359.5 2072.800v6.500M2395.5 2072.800v6.500M2431.6 2072.800v6.500M2467.6 2072.800v6.500M2503.7 2072.800v6.500M2539.7 2072.800v6.500M2575.8 2072.800v6.500M2611.8 2072.800v6.500M2647.9 2072.800v6.500M2683.9 2072.800v6.500M2720.0 2072.800v6.500M2756.0 2072.800v6.500M2792.1 2072.800v6.500M2828.1 2072.800v6.500M2864.2 2072.800v6.500M2900.2 2072.800v6.500M2936.3 2072.800v6.500M2972.3 2072.800v6.500" stroke="#d0d0d0" stroke-width="1.600"/>
<rect x="273.50" y="2078.30" width="897.50" height="1.80" fill="#7a7a7a" />
<rect x="1178.00" y="2078.30" width="1793.00" height="1.80" fill="#d0d0d0" />
<rect x="237.50" y="2079.00" width="22.00" height="1.00" fill="#c0c0c0" />
<rect x="223.00" y="2072.80" width="14.50" height="14.00" fill="#7a7a7a" />
<path d="M225.8 2079.800h9M230.2 2075.300v9" stroke="#fff" stroke-width="2"/>
<rect x="259.30" y="2072.80" width="14.50" height="14.00" fill="#7a7a7a" />
<path d="M262.1 2079.800h9" stroke="#fff" stroke-width="2"/>
<path d="M2979.500 2034h17v5l-6 6.500h-5l-6-6.500z" fill="#555"/><rect x="2987" y="2040" width="2.200" height="42" fill="#555"/>
<g fill="#808080"><circle cx="3810.3" cy="2056.3" r="8.4"/><rect x="3807.9" y="2044.9" width="4.8" height="5.7" transform="rotate(0 3810.3 2056.3)"/><rect x="3807.9" y="2044.9" width="4.8" height="5.7" transform="rotate(45 3810.3 2056.3)"/><rect x="3807.9" y="2044.9" width="4.8" height="5.7" transform="rotate(90 3810.3 2056.3)"/><rect x="3807.9" y="2044.9" width="4.8" height="5.7" transform="rotate(135 3810.3 2056.3)"/><rect x="3807.9" y="2044.9" width="4.8" height="5.7" transform="rotate(180 3810.3 2056.3)"/><rect x="3807.9" y="2044.9" width="4.8" height="5.7" transform="rotate(225 3810.3 2056.3)"/><rect x="3807.9" y="2044.9" width="4.8" height="5.7" transform="rotate(270 3810.3 2056.3)"/><rect x="3807.9" y="2044.9" width="4.8" height="5.7" transform="rotate(315 3810.3 2056.3)"/></g><circle cx="3810.3" cy="2056.3" r="3.8" fill="#f1f1f1"/>
<rect x="0" y="0" width="3842" height="2" fill="#b0a0bd"/>
<rect x="0" y="0" width="2" height="2096" fill="#404040"/>
<rect x="0" y="0" width="2" height="7" fill="#000"/>
<path d="M2 0h10a10 10 0 0 0-10 10z" fill="#dccdf5"/><path d="M2 11a9 9 0 0 1 9-9" fill="none" stroke="#b0a0bd" stroke-width="2"/>
<path d="M3842 0h-10a10 10 0 0 1 10 10z" fill="#dccdf5"/><path d="M3842 11a9 9 0 0 0-9-9" fill="none" stroke="#b0a0bd" stroke-width="2"/>
</svg></body></html>
